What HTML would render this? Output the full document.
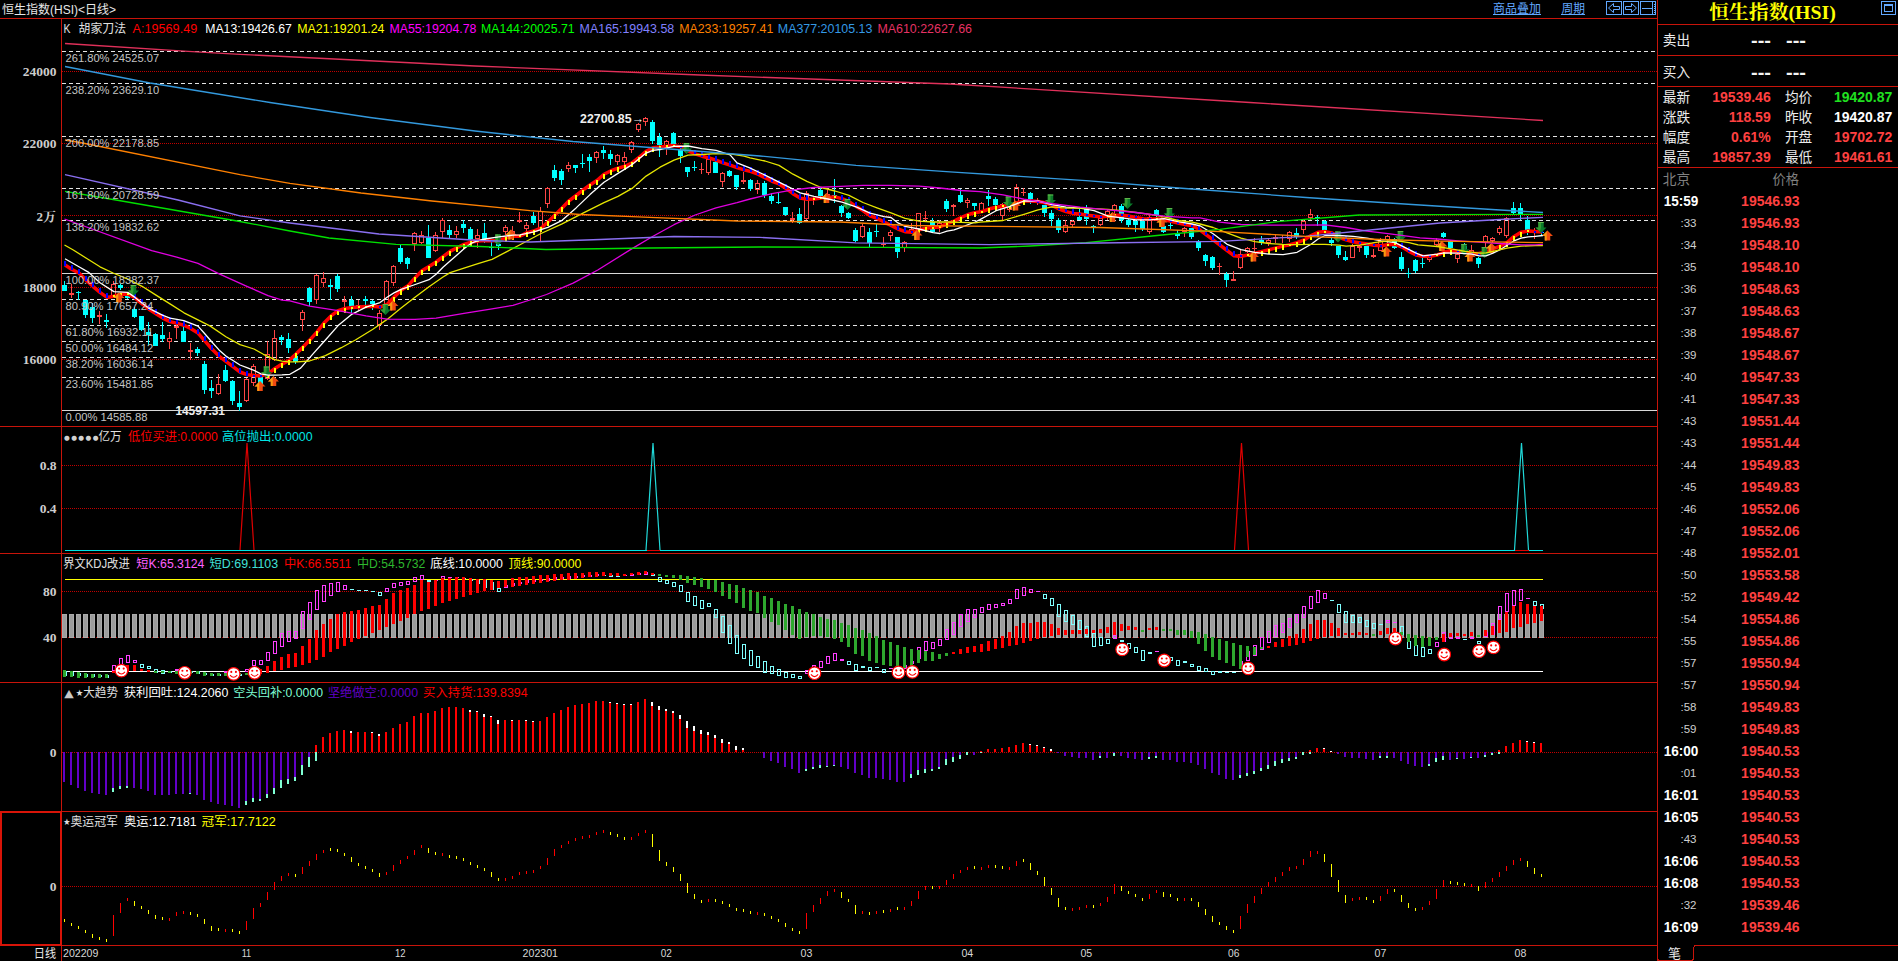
<!DOCTYPE html>
<html lang="zh-CN"><head><meta charset="utf-8"><title>恒生指数(HSI) 日线</title>
<style>html,body{margin:0;padding:0;background:#000;overflow:hidden}svg text{white-space:pre}</style></head>
<body>
<svg width="1898" height="961" viewBox="0 0 1898 961" style="display:block">
<rect x="0" y="0" width="1898" height="961" fill="#000"/>
<g shape-rendering="crispEdges">
<line x1="62" y1="71.5" x2="1657" y2="71.5" stroke="#C00000" stroke-dasharray="1 1"/>
<line x1="62" y1="143.5" x2="1657" y2="143.5" stroke="#C00000" stroke-dasharray="1 1"/>
<line x1="62" y1="215.5" x2="1657" y2="215.5" stroke="#C00000" stroke-dasharray="1 1"/>
<line x1="62" y1="287.5" x2="1657" y2="287.5" stroke="#C00000" stroke-dasharray="1 1"/>
<line x1="62" y1="359.5" x2="1657" y2="359.5" stroke="#C00000" stroke-dasharray="1 1"/>
<line x1="62" y1="51.5" x2="1657" y2="51.5" stroke="#E4E4E4" stroke-dasharray="4 3"/>
<line x1="62" y1="83.5" x2="1657" y2="83.5" stroke="#E4E4E4" stroke-dasharray="4 3"/>
<line x1="62" y1="136.5" x2="1657" y2="136.5" stroke="#E4E4E4" stroke-dasharray="4 3"/>
<line x1="62" y1="188.5" x2="1657" y2="188.5" stroke="#E4E4E4" stroke-dasharray="4 3"/>
<line x1="62" y1="220.5" x2="1657" y2="220.5" stroke="#E4E4E4" stroke-dasharray="4 3"/>
<line x1="62" y1="299.5" x2="1657" y2="299.5" stroke="#E4E4E4" stroke-dasharray="4 3"/>
<line x1="62" y1="325.5" x2="1657" y2="325.5" stroke="#E4E4E4" stroke-dasharray="4 3"/>
<line x1="62" y1="341.5" x2="1657" y2="341.5" stroke="#E4E4E4" stroke-dasharray="4 3"/>
<line x1="62" y1="357.5" x2="1657" y2="357.5" stroke="#E4E4E4" stroke-dasharray="4 3"/>
<line x1="62" y1="377.5" x2="1657" y2="377.5" stroke="#E4E4E4" stroke-dasharray="4 3"/>
<rect x="62" y="273" width="1595" height="1" fill="#D8D8D8"/>
<rect x="62" y="410" width="1595" height="1" fill="#D8D8D8"/>
<line x1="62" y1="465.5" x2="1657" y2="465.5" stroke="#C00000" stroke-dasharray="1 1"/>
<line x1="62" y1="508.5" x2="1657" y2="508.5" stroke="#C00000" stroke-dasharray="1 1"/>
<line x1="62" y1="591.5" x2="1657" y2="591.5" stroke="#C00000" stroke-dasharray="1 1"/>
<line x1="62" y1="637.5" x2="1657" y2="637.5" stroke="#C00000" stroke-dasharray="1 1"/>
<line x1="62" y1="752.5" x2="1657" y2="752.5" stroke="#C00000" stroke-dasharray="1 1"/>
<line x1="62" y1="886.5" x2="1657" y2="886.5" stroke="#C00000" stroke-dasharray="1 1"/>
</g>
<g shape-rendering="crispEdges">
<rect x="64" y="281" width="1" height="10" fill="#00FFFF"/>
<rect x="62" y="285" width="5" height="6" fill="#00FFFF"/>
<rect x="71" y="284" width="1" height="9" fill="#FF4646"/>
<rect x="71" y="295" width="1" height="3" fill="#FF4646"/>
<rect x="69.5" y="293.5" width="4" height="1" fill="none" stroke="#FF4646"/>
<rect x="78" y="291" width="1" height="9" fill="#00FFFF"/>
<rect x="76" y="292" width="5" height="1" fill="#00FFFF"/>
<rect x="85" y="300" width="1" height="18" fill="#00FFFF"/>
<rect x="83" y="300" width="5" height="15" fill="#00FFFF"/>
<rect x="92" y="303" width="1" height="20" fill="#00FFFF"/>
<rect x="90" y="307" width="5" height="11" fill="#00FFFF"/>
<rect x="99" y="311" width="1" height="4" fill="#FF4646"/>
<rect x="99" y="317" width="1" height="7" fill="#FF4646"/>
<rect x="97.5" y="315.5" width="4" height="1" fill="none" stroke="#FF4646"/>
<rect x="106" y="314" width="1" height="14" fill="#00FFFF"/>
<rect x="104" y="320" width="5" height="2" fill="#00FFFF"/>
<rect x="113" y="281" width="1" height="3" fill="#FF4646"/>
<rect x="113" y="296" width="1" height="2" fill="#FF4646"/>
<rect x="111.5" y="284.5" width="4" height="11" fill="none" stroke="#FF4646"/>
<rect x="120" y="284" width="1" height="6" fill="#00FFFF"/>
<rect x="118" y="285" width="5" height="3" fill="#00FFFF"/>
<rect x="127" y="294" width="1" height="5" fill="#00FFFF"/>
<rect x="125" y="295" width="5" height="3" fill="#00FFFF"/>
<rect x="134" y="307" width="1" height="11" fill="#00FFFF"/>
<rect x="132" y="309" width="5" height="8" fill="#00FFFF"/>
<rect x="141" y="316" width="1" height="15" fill="#00FFFF"/>
<rect x="139" y="316" width="5" height="14" fill="#00FFFF"/>
<rect x="148" y="322" width="1" height="23" fill="#00FFFF"/>
<rect x="146" y="332" width="5" height="3" fill="#00FFFF"/>
<rect x="155" y="333" width="1" height="13" fill="#00FFFF"/>
<rect x="153" y="334" width="5" height="12" fill="#00FFFF"/>
<rect x="162" y="322" width="1" height="20" fill="#00FFFF"/>
<rect x="160" y="335" width="5" height="4" fill="#00FFFF"/>
<rect x="169" y="332" width="1" height="6" fill="#FF4646"/>
<rect x="169" y="342" width="1" height="7" fill="#FF4646"/>
<rect x="167.5" y="338.5" width="4" height="3" fill="none" stroke="#FF4646"/>
<rect x="176" y="324" width="1" height="2" fill="#FF4646"/>
<rect x="176" y="328" width="1" height="11" fill="#FF4646"/>
<rect x="174.5" y="326.5" width="4" height="1" fill="none" stroke="#FF4646"/>
<rect x="183" y="326" width="1" height="16" fill="#00FFFF"/>
<rect x="181" y="331" width="5" height="11" fill="#00FFFF"/>
<rect x="190" y="343" width="1" height="7" fill="#FF4646"/>
<rect x="190" y="352" width="1" height="8" fill="#FF4646"/>
<rect x="188.5" y="350.5" width="4" height="1" fill="none" stroke="#FF4646"/>
<rect x="197" y="347" width="1" height="9" fill="#00FFFF"/>
<rect x="195" y="349" width="5" height="4" fill="#00FFFF"/>
<rect x="204" y="361" width="1" height="33" fill="#00FFFF"/>
<rect x="202" y="364" width="5" height="26" fill="#00FFFF"/>
<rect x="211" y="380" width="1" height="18" fill="#00FFFF"/>
<rect x="209" y="388" width="5" height="3" fill="#00FFFF"/>
<rect x="218" y="374" width="1" height="10" fill="#FF4646"/>
<rect x="218" y="394" width="1" height="1" fill="#FF4646"/>
<rect x="216.5" y="384.5" width="4" height="9" fill="none" stroke="#FF4646"/>
<rect x="225" y="365" width="1" height="17" fill="#00FFFF"/>
<rect x="223" y="370" width="5" height="11" fill="#00FFFF"/>
<rect x="232" y="380" width="1" height="25" fill="#00FFFF"/>
<rect x="230" y="381" width="5" height="20" fill="#00FFFF"/>
<rect x="239" y="391" width="1" height="20" fill="#00FFFF"/>
<rect x="237" y="403" width="5" height="4" fill="#00FFFF"/>
<rect x="246" y="378" width="1" height="1" fill="#FF4646"/>
<rect x="246" y="401" width="1" height="1" fill="#FF4646"/>
<rect x="244.5" y="379.5" width="4" height="21" fill="none" stroke="#FF4646"/>
<rect x="253" y="364" width="1" height="2" fill="#FF4646"/>
<rect x="253" y="383" width="1" height="3" fill="#FF4646"/>
<rect x="251.5" y="366.5" width="4" height="16" fill="none" stroke="#FF4646"/>
<rect x="260" y="375" width="1" height="9" fill="#00FFFF"/>
<rect x="258" y="376" width="5" height="8" fill="#00FFFF"/>
<rect x="267" y="341" width="1" height="13" fill="#FF4646"/>
<rect x="267" y="379" width="1" height="1" fill="#FF4646"/>
<rect x="265.5" y="354.5" width="4" height="24" fill="none" stroke="#FF4646"/>
<rect x="274" y="330" width="1" height="8" fill="#FF4646"/>
<rect x="274" y="360" width="1" height="1" fill="#FF4646"/>
<rect x="272.5" y="338.5" width="4" height="21" fill="none" stroke="#FF4646"/>
<rect x="281" y="335" width="1" height="10" fill="#00FFFF"/>
<rect x="279" y="337" width="5" height="3" fill="#00FFFF"/>
<rect x="288" y="333" width="1" height="20" fill="#00FFFF"/>
<rect x="286" y="339" width="5" height="9" fill="#00FFFF"/>
<rect x="295" y="354" width="1" height="10" fill="#00FFFF"/>
<rect x="293" y="356" width="5" height="6" fill="#00FFFF"/>
<rect x="302" y="310" width="1" height="2" fill="#FF4646"/>
<rect x="302" y="320" width="1" height="11" fill="#FF4646"/>
<rect x="300.5" y="312.5" width="4" height="7" fill="none" stroke="#FF4646"/>
<rect x="309" y="287" width="1" height="19" fill="#00FFFF"/>
<rect x="307" y="288" width="5" height="14" fill="#00FFFF"/>
<rect x="316" y="274" width="1" height="1" fill="#FF4646"/>
<rect x="316" y="300" width="1" height="4" fill="#FF4646"/>
<rect x="314.5" y="275.5" width="4" height="24" fill="none" stroke="#FF4646"/>
<rect x="323" y="272" width="1" height="6" fill="#FF4646"/>
<rect x="323" y="283" width="1" height="4" fill="#FF4646"/>
<rect x="321.5" y="278.5" width="4" height="4" fill="none" stroke="#FF4646"/>
<rect x="330" y="279" width="1" height="21" fill="#00FFFF"/>
<rect x="328" y="285" width="5" height="2" fill="#00FFFF"/>
<rect x="337" y="274" width="1" height="18" fill="#00FFFF"/>
<rect x="335" y="276" width="5" height="13" fill="#00FFFF"/>
<rect x="344" y="296" width="1" height="4" fill="#FF4646"/>
<rect x="344" y="302" width="1" height="9" fill="#FF4646"/>
<rect x="342.5" y="300.5" width="4" height="1" fill="none" stroke="#FF4646"/>
<rect x="351" y="296" width="1" height="17" fill="#00FFFF"/>
<rect x="349" y="300" width="5" height="7" fill="#00FFFF"/>
<rect x="358" y="300" width="1" height="5" fill="#FF4646"/>
<rect x="358" y="307" width="1" height="4" fill="#FF4646"/>
<rect x="356.5" y="305.5" width="4" height="1" fill="none" stroke="#FF4646"/>
<rect x="365" y="296" width="1" height="9" fill="#00FFFF"/>
<rect x="363" y="299" width="5" height="2" fill="#00FFFF"/>
<rect x="372" y="300" width="1" height="10" fill="#00FFFF"/>
<rect x="370" y="301" width="5" height="3" fill="#00FFFF"/>
<rect x="379" y="310" width="1" height="3" fill="#FF4646"/>
<rect x="379" y="325" width="1" height="5" fill="#FF4646"/>
<rect x="377.5" y="313.5" width="4" height="11" fill="none" stroke="#FF4646"/>
<rect x="386" y="280" width="1" height="1" fill="#FF4646"/>
<rect x="386" y="306" width="1" height="1" fill="#FF4646"/>
<rect x="384.5" y="281.5" width="4" height="24" fill="none" stroke="#FF4646"/>
<rect x="393" y="265" width="1" height="1" fill="#FF4646"/>
<rect x="393" y="283" width="1" height="3" fill="#FF4646"/>
<rect x="391.5" y="266.5" width="4" height="16" fill="none" stroke="#FF4646"/>
<rect x="400" y="244" width="1" height="20" fill="#00FFFF"/>
<rect x="398" y="248" width="5" height="14" fill="#00FFFF"/>
<rect x="407" y="257" width="1" height="12" fill="#00FFFF"/>
<rect x="405" y="258" width="5" height="6" fill="#00FFFF"/>
<rect x="414" y="232" width="1" height="1" fill="#FF4646"/>
<rect x="414" y="244" width="1" height="7" fill="#FF4646"/>
<rect x="412.5" y="233.5" width="4" height="10" fill="none" stroke="#FF4646"/>
<rect x="421" y="231" width="1" height="4" fill="#FF4646"/>
<rect x="421" y="243" width="1" height="1" fill="#FF4646"/>
<rect x="419.5" y="235.5" width="4" height="7" fill="none" stroke="#FF4646"/>
<rect x="428" y="225" width="1" height="33" fill="#00FFFF"/>
<rect x="426" y="238" width="5" height="20" fill="#00FFFF"/>
<rect x="435" y="232" width="1" height="3" fill="#FF4646"/>
<rect x="435" y="251" width="1" height="1" fill="#FF4646"/>
<rect x="433.5" y="235.5" width="4" height="15" fill="none" stroke="#FF4646"/>
<rect x="442" y="218" width="1" height="2" fill="#FF4646"/>
<rect x="442" y="232" width="1" height="6" fill="#FF4646"/>
<rect x="440.5" y="220.5" width="4" height="11" fill="none" stroke="#FF4646"/>
<rect x="449" y="225" width="1" height="14" fill="#00FFFF"/>
<rect x="447" y="230" width="5" height="5" fill="#00FFFF"/>
<rect x="456" y="226" width="1" height="5" fill="#FF4646"/>
<rect x="456" y="235" width="1" height="3" fill="#FF4646"/>
<rect x="454.5" y="231.5" width="4" height="3" fill="none" stroke="#FF4646"/>
<rect x="463" y="220" width="1" height="13" fill="#00FFFF"/>
<rect x="461" y="224" width="5" height="4" fill="#00FFFF"/>
<rect x="470" y="227" width="1" height="13" fill="#00FFFF"/>
<rect x="468" y="229" width="5" height="10" fill="#00FFFF"/>
<rect x="477" y="229" width="1" height="6" fill="#FF4646"/>
<rect x="477" y="239" width="1" height="9" fill="#FF4646"/>
<rect x="475.5" y="235.5" width="4" height="3" fill="none" stroke="#FF4646"/>
<rect x="484" y="223" width="1" height="20" fill="#00FFFF"/>
<rect x="482" y="233" width="5" height="6" fill="#00FFFF"/>
<rect x="491" y="242" width="1" height="14" fill="#00FFFF"/>
<rect x="489" y="247" width="5" height="1" fill="#00FFFF"/>
<rect x="498" y="241" width="1" height="9" fill="#00FFFF"/>
<rect x="496" y="244" width="5" height="2" fill="#00FFFF"/>
<rect x="505" y="225" width="1" height="2" fill="#FF4646"/>
<rect x="505" y="232" width="1" height="3" fill="#FF4646"/>
<rect x="503.5" y="227.5" width="4" height="4" fill="none" stroke="#FF4646"/>
<rect x="512" y="226" width="1" height="5" fill="#FF4646"/>
<rect x="512" y="235" width="1" height="1" fill="#FF4646"/>
<rect x="510.5" y="231.5" width="4" height="3" fill="none" stroke="#FF4646"/>
<rect x="519" y="212" width="1" height="8" fill="#FF4646"/>
<rect x="519" y="222" width="1" height="1" fill="#FF4646"/>
<rect x="517.5" y="220.5" width="4" height="1" fill="none" stroke="#FF4646"/>
<rect x="526" y="222" width="1" height="3" fill="#FF4646"/>
<rect x="526" y="229" width="1" height="4" fill="#FF4646"/>
<rect x="524.5" y="225.5" width="4" height="3" fill="none" stroke="#FF4646"/>
<rect x="533" y="212" width="1" height="13" fill="#00FFFF"/>
<rect x="531" y="216" width="5" height="7" fill="#00FFFF"/>
<rect x="540" y="207" width="1" height="4" fill="#FF4646"/>
<rect x="540" y="229" width="1" height="12" fill="#FF4646"/>
<rect x="538.5" y="211.5" width="4" height="17" fill="none" stroke="#FF4646"/>
<rect x="547" y="187" width="1" height="1" fill="#FF4646"/>
<rect x="547" y="204" width="1" height="4" fill="#FF4646"/>
<rect x="545.5" y="188.5" width="4" height="15" fill="none" stroke="#FF4646"/>
<rect x="554" y="165" width="1" height="16" fill="#00FFFF"/>
<rect x="552" y="170" width="5" height="8" fill="#00FFFF"/>
<rect x="561" y="169" width="1" height="16" fill="#00FFFF"/>
<rect x="559" y="171" width="5" height="9" fill="#00FFFF"/>
<rect x="568" y="162" width="1" height="3" fill="#FF4646"/>
<rect x="568" y="169" width="1" height="3" fill="#FF4646"/>
<rect x="566.5" y="165.5" width="4" height="3" fill="none" stroke="#FF4646"/>
<rect x="575" y="165" width="1" height="8" fill="#00FFFF"/>
<rect x="573" y="165" width="5" height="3" fill="#00FFFF"/>
<rect x="582" y="154" width="1" height="14" fill="#00FFFF"/>
<rect x="580" y="163" width="5" height="1" fill="#00FFFF"/>
<rect x="589" y="154" width="1" height="18" fill="#00FFFF"/>
<rect x="587" y="157" width="5" height="4" fill="#00FFFF"/>
<rect x="596" y="151" width="1" height="1" fill="#FF4646"/>
<rect x="596" y="158" width="1" height="5" fill="#FF4646"/>
<rect x="594.5" y="152.5" width="4" height="5" fill="none" stroke="#FF4646"/>
<rect x="603" y="146" width="1" height="13" fill="#00FFFF"/>
<rect x="601" y="150" width="5" height="3" fill="#00FFFF"/>
<rect x="610" y="150" width="1" height="15" fill="#00FFFF"/>
<rect x="608" y="154" width="5" height="5" fill="#00FFFF"/>
<rect x="617" y="154" width="1" height="1" fill="#FF4646"/>
<rect x="617" y="162" width="1" height="3" fill="#FF4646"/>
<rect x="615.5" y="155.5" width="4" height="6" fill="none" stroke="#FF4646"/>
<rect x="624" y="152" width="1" height="5" fill="#FF4646"/>
<rect x="624" y="162" width="1" height="3" fill="#FF4646"/>
<rect x="622.5" y="157.5" width="4" height="4" fill="none" stroke="#FF4646"/>
<rect x="631" y="141" width="1" height="1" fill="#FF4646"/>
<rect x="631" y="150" width="1" height="3" fill="#FF4646"/>
<rect x="629.5" y="142.5" width="4" height="7" fill="none" stroke="#FF4646"/>
<rect x="638" y="123" width="1" height="1" fill="#FF4646"/>
<rect x="638" y="130" width="1" height="2" fill="#FF4646"/>
<rect x="636.5" y="124.5" width="4" height="5" fill="none" stroke="#FF4646"/>
<rect x="645" y="117" width="1" height="1" fill="#FF4646"/>
<rect x="645" y="122" width="1" height="4" fill="#FF4646"/>
<rect x="643.5" y="118.5" width="4" height="3" fill="none" stroke="#FF4646"/>
<rect x="652" y="120" width="1" height="24" fill="#00FFFF"/>
<rect x="650" y="122" width="5" height="19" fill="#00FFFF"/>
<rect x="659" y="133" width="1" height="24" fill="#00FFFF"/>
<rect x="657" y="137" width="5" height="8" fill="#00FFFF"/>
<rect x="666" y="140" width="1" height="1" fill="#FF4646"/>
<rect x="666" y="146" width="1" height="9" fill="#FF4646"/>
<rect x="664.5" y="141.5" width="4" height="4" fill="none" stroke="#FF4646"/>
<rect x="673" y="132" width="1" height="12" fill="#00FFFF"/>
<rect x="671" y="133" width="5" height="11" fill="#00FFFF"/>
<rect x="680" y="148" width="1" height="15" fill="#00FFFF"/>
<rect x="678" y="150" width="5" height="6" fill="#00FFFF"/>
<rect x="687" y="167" width="1" height="10" fill="#00FFFF"/>
<rect x="685" y="167" width="5" height="5" fill="#00FFFF"/>
<rect x="694" y="161" width="1" height="10" fill="#00FFFF"/>
<rect x="692" y="167" width="5" height="1" fill="#00FFFF"/>
<rect x="701" y="163" width="1" height="6" fill="#FF4646"/>
<rect x="701" y="170" width="1" height="4" fill="#FF4646"/>
<rect x="699" y="169" width="5" height="1" fill="#FF4646"/>
<rect x="708" y="173" width="1" height="2" fill="#FF4646"/>
<rect x="706.5" y="159.5" width="4" height="13" fill="none" stroke="#FF4646"/>
<rect x="715" y="161" width="1" height="12" fill="#00FFFF"/>
<rect x="713" y="162" width="5" height="11" fill="#00FFFF"/>
<rect x="722" y="172" width="1" height="1" fill="#FF4646"/>
<rect x="722" y="182" width="1" height="5" fill="#FF4646"/>
<rect x="720.5" y="173.5" width="4" height="8" fill="none" stroke="#FF4646"/>
<rect x="729" y="170" width="1" height="7" fill="#00FFFF"/>
<rect x="727" y="171" width="5" height="5" fill="#00FFFF"/>
<rect x="736" y="175" width="1" height="15" fill="#00FFFF"/>
<rect x="734" y="175" width="5" height="12" fill="#00FFFF"/>
<rect x="743" y="172" width="1" height="8" fill="#FF4646"/>
<rect x="743" y="182" width="1" height="2" fill="#FF4646"/>
<rect x="741.5" y="180.5" width="4" height="1" fill="none" stroke="#FF4646"/>
<rect x="750" y="179" width="1" height="12" fill="#00FFFF"/>
<rect x="748" y="180" width="5" height="9" fill="#00FFFF"/>
<rect x="757" y="180" width="1" height="3" fill="#FF4646"/>
<rect x="757" y="190" width="1" height="4" fill="#FF4646"/>
<rect x="755.5" y="183.5" width="4" height="6" fill="none" stroke="#FF4646"/>
<rect x="764" y="181" width="1" height="17" fill="#00FFFF"/>
<rect x="762" y="183" width="5" height="12" fill="#00FFFF"/>
<rect x="771" y="193" width="1" height="11" fill="#00FFFF"/>
<rect x="769" y="196" width="5" height="5" fill="#00FFFF"/>
<rect x="778" y="193" width="1" height="11" fill="#00FFFF"/>
<rect x="776" y="202" width="5" height="1" fill="#00FFFF"/>
<rect x="785" y="207" width="1" height="9" fill="#00FFFF"/>
<rect x="783" y="207" width="5" height="8" fill="#00FFFF"/>
<rect x="792" y="212" width="1" height="6" fill="#FF4646"/>
<rect x="792" y="220" width="1" height="3" fill="#FF4646"/>
<rect x="790.5" y="218.5" width="4" height="1" fill="none" stroke="#FF4646"/>
<rect x="799" y="208" width="1" height="16" fill="#00FFFF"/>
<rect x="797" y="214" width="5" height="9" fill="#00FFFF"/>
<rect x="806" y="191" width="1" height="2" fill="#FF4646"/>
<rect x="806" y="219" width="1" height="1" fill="#FF4646"/>
<rect x="804.5" y="193.5" width="4" height="25" fill="none" stroke="#FF4646"/>
<rect x="813" y="197" width="1" height="2" fill="#FF4646"/>
<rect x="813" y="200" width="1" height="5" fill="#FF4646"/>
<rect x="811" y="199" width="5" height="1" fill="#FF4646"/>
<rect x="820" y="187" width="1" height="10" fill="#00FFFF"/>
<rect x="818" y="190" width="5" height="6" fill="#00FFFF"/>
<rect x="827" y="190" width="1" height="4" fill="#FF4646"/>
<rect x="827" y="198" width="1" height="2" fill="#FF4646"/>
<rect x="825.5" y="194.5" width="4" height="3" fill="none" stroke="#FF4646"/>
<rect x="834" y="179" width="1" height="24" fill="#00FFFF"/>
<rect x="832" y="195" width="5" height="2" fill="#00FFFF"/>
<rect x="841" y="205" width="1" height="12" fill="#00FFFF"/>
<rect x="839" y="206" width="5" height="7" fill="#00FFFF"/>
<rect x="848" y="212" width="1" height="7" fill="#00FFFF"/>
<rect x="846" y="213" width="5" height="5" fill="#00FFFF"/>
<rect x="855" y="228" width="1" height="14" fill="#00FFFF"/>
<rect x="853" y="230" width="5" height="11" fill="#00FFFF"/>
<rect x="862" y="224" width="1" height="2" fill="#FF4646"/>
<rect x="862" y="237" width="1" height="1" fill="#FF4646"/>
<rect x="860.5" y="226.5" width="4" height="10" fill="none" stroke="#FF4646"/>
<rect x="869" y="228" width="1" height="20" fill="#00FFFF"/>
<rect x="867" y="232" width="5" height="11" fill="#00FFFF"/>
<rect x="876" y="224" width="1" height="13" fill="#00FFFF"/>
<rect x="874" y="231" width="5" height="1" fill="#00FFFF"/>
<rect x="883" y="237" width="1" height="7" fill="#FF4646"/>
<rect x="883" y="245" width="1" height="3" fill="#FF4646"/>
<rect x="881" y="244" width="5" height="1" fill="#FF4646"/>
<rect x="890" y="230" width="1" height="2" fill="#FF4646"/>
<rect x="890" y="236" width="1" height="5" fill="#FF4646"/>
<rect x="888.5" y="232.5" width="4" height="3" fill="none" stroke="#FF4646"/>
<rect x="897" y="237" width="1" height="21" fill="#00FFFF"/>
<rect x="895" y="237" width="5" height="15" fill="#00FFFF"/>
<rect x="904" y="241" width="1" height="1" fill="#FF4646"/>
<rect x="904" y="248" width="1" height="4" fill="#FF4646"/>
<rect x="902.5" y="242.5" width="4" height="5" fill="none" stroke="#FF4646"/>
<rect x="911" y="223" width="1" height="6" fill="#FF4646"/>
<rect x="911" y="233" width="1" height="1" fill="#FF4646"/>
<rect x="909.5" y="229.5" width="4" height="3" fill="none" stroke="#FF4646"/>
<rect x="918" y="231" width="1" height="1" fill="#FF4646"/>
<rect x="916.5" y="213.5" width="4" height="17" fill="none" stroke="#FF4646"/>
<rect x="925" y="211" width="1" height="7" fill="#FF4646"/>
<rect x="925" y="219" width="1" height="3" fill="#FF4646"/>
<rect x="923" y="218" width="5" height="1" fill="#FF4646"/>
<rect x="932" y="218" width="1" height="15" fill="#00FFFF"/>
<rect x="930" y="222" width="5" height="10" fill="#00FFFF"/>
<rect x="939" y="220" width="1" height="3" fill="#FF4646"/>
<rect x="939" y="227" width="1" height="5" fill="#FF4646"/>
<rect x="937.5" y="223.5" width="4" height="3" fill="none" stroke="#FF4646"/>
<rect x="946" y="199" width="1" height="13" fill="#00FFFF"/>
<rect x="944" y="201" width="5" height="8" fill="#00FFFF"/>
<rect x="953" y="204" width="1" height="1" fill="#FF4646"/>
<rect x="953" y="207" width="1" height="9" fill="#FF4646"/>
<rect x="951.5" y="205.5" width="4" height="1" fill="none" stroke="#FF4646"/>
<rect x="960" y="189" width="1" height="14" fill="#00FFFF"/>
<rect x="958" y="195" width="5" height="7" fill="#00FFFF"/>
<rect x="967" y="198" width="1" height="2" fill="#FF4646"/>
<rect x="967" y="203" width="1" height="5" fill="#FF4646"/>
<rect x="965.5" y="200.5" width="4" height="2" fill="none" stroke="#FF4646"/>
<rect x="974" y="203" width="1" height="7" fill="#00FFFF"/>
<rect x="972" y="203" width="5" height="3" fill="#00FFFF"/>
<rect x="981" y="202" width="1" height="1" fill="#FF4646"/>
<rect x="981" y="211" width="1" height="2" fill="#FF4646"/>
<rect x="979.5" y="203.5" width="4" height="7" fill="none" stroke="#FF4646"/>
<rect x="988" y="190" width="1" height="16" fill="#00FFFF"/>
<rect x="986" y="196" width="5" height="3" fill="#00FFFF"/>
<rect x="995" y="197" width="1" height="9" fill="#00FFFF"/>
<rect x="993" y="199" width="5" height="6" fill="#00FFFF"/>
<rect x="1002" y="203" width="1" height="1" fill="#FF4646"/>
<rect x="1002" y="216" width="1" height="4" fill="#FF4646"/>
<rect x="1000.5" y="204.5" width="4" height="11" fill="none" stroke="#FF4646"/>
<rect x="1009" y="205" width="1" height="2" fill="#FF4646"/>
<rect x="1009" y="210" width="1" height="2" fill="#FF4646"/>
<rect x="1007.5" y="207.5" width="4" height="2" fill="none" stroke="#FF4646"/>
<rect x="1016" y="184" width="1" height="3" fill="#FF4646"/>
<rect x="1016" y="205" width="1" height="2" fill="#FF4646"/>
<rect x="1014.5" y="187.5" width="4" height="17" fill="none" stroke="#FF4646"/>
<rect x="1023" y="188" width="1" height="4" fill="#FF4646"/>
<rect x="1023" y="193" width="1" height="3" fill="#FF4646"/>
<rect x="1021" y="192" width="5" height="1" fill="#FF4646"/>
<rect x="1030" y="192" width="1" height="12" fill="#00FFFF"/>
<rect x="1028" y="193" width="5" height="6" fill="#00FFFF"/>
<rect x="1037" y="198" width="1" height="3" fill="#FF4646"/>
<rect x="1037" y="202" width="1" height="3" fill="#FF4646"/>
<rect x="1035" y="201" width="5" height="1" fill="#FF4646"/>
<rect x="1044" y="205" width="1" height="12" fill="#00FFFF"/>
<rect x="1042" y="205" width="5" height="8" fill="#00FFFF"/>
<rect x="1051" y="210" width="1" height="16" fill="#00FFFF"/>
<rect x="1049" y="213" width="5" height="6" fill="#00FFFF"/>
<rect x="1058" y="218" width="1" height="15" fill="#00FFFF"/>
<rect x="1056" y="220" width="5" height="10" fill="#00FFFF"/>
<rect x="1065" y="220" width="1" height="5" fill="#FF4646"/>
<rect x="1065" y="232" width="1" height="1" fill="#FF4646"/>
<rect x="1063.5" y="225.5" width="4" height="6" fill="none" stroke="#FF4646"/>
<rect x="1072" y="220" width="1" height="1" fill="#FF4646"/>
<rect x="1072" y="225" width="1" height="2" fill="#FF4646"/>
<rect x="1070.5" y="221.5" width="4" height="3" fill="none" stroke="#FF4646"/>
<rect x="1079" y="209" width="1" height="11" fill="#00FFFF"/>
<rect x="1077" y="217" width="5" height="3" fill="#00FFFF"/>
<rect x="1086" y="205" width="1" height="20" fill="#00FFFF"/>
<rect x="1084" y="209" width="5" height="10" fill="#00FFFF"/>
<rect x="1093" y="225" width="1" height="8" fill="#00FFFF"/>
<rect x="1091" y="226" width="5" height="1" fill="#00FFFF"/>
<rect x="1100" y="216" width="1" height="2" fill="#FF4646"/>
<rect x="1100" y="225" width="1" height="1" fill="#FF4646"/>
<rect x="1098.5" y="218.5" width="4" height="6" fill="none" stroke="#FF4646"/>
<rect x="1107" y="210" width="1" height="1" fill="#FF4646"/>
<rect x="1107" y="218" width="1" height="2" fill="#FF4646"/>
<rect x="1105.5" y="211.5" width="4" height="6" fill="none" stroke="#FF4646"/>
<rect x="1114" y="204" width="1" height="1" fill="#FF4646"/>
<rect x="1114" y="211" width="1" height="10" fill="#FF4646"/>
<rect x="1112.5" y="205.5" width="4" height="5" fill="none" stroke="#FF4646"/>
<rect x="1121" y="204" width="1" height="19" fill="#00FFFF"/>
<rect x="1119" y="206" width="5" height="14" fill="#00FFFF"/>
<rect x="1128" y="219" width="1" height="8" fill="#00FFFF"/>
<rect x="1126" y="220" width="5" height="5" fill="#00FFFF"/>
<rect x="1135" y="220" width="1" height="12" fill="#00FFFF"/>
<rect x="1133" y="221" width="5" height="4" fill="#00FFFF"/>
<rect x="1142" y="220" width="1" height="11" fill="#00FFFF"/>
<rect x="1140" y="221" width="5" height="8" fill="#00FFFF"/>
<rect x="1149" y="214" width="1" height="3" fill="#FF4646"/>
<rect x="1149" y="232" width="1" height="2" fill="#FF4646"/>
<rect x="1147.5" y="217.5" width="4" height="14" fill="none" stroke="#FF4646"/>
<rect x="1156" y="209" width="1" height="9" fill="#00FFFF"/>
<rect x="1154" y="210" width="5" height="5" fill="#00FFFF"/>
<rect x="1163" y="225" width="1" height="8" fill="#00FFFF"/>
<rect x="1161" y="226" width="5" height="6" fill="#00FFFF"/>
<rect x="1170" y="222" width="1" height="7" fill="#00FFFF"/>
<rect x="1168" y="225" width="5" height="1" fill="#00FFFF"/>
<rect x="1177" y="230" width="1" height="9" fill="#00FFFF"/>
<rect x="1175" y="233" width="5" height="3" fill="#00FFFF"/>
<rect x="1184" y="227" width="1" height="1" fill="#FF4646"/>
<rect x="1184" y="232" width="1" height="5" fill="#FF4646"/>
<rect x="1182.5" y="228.5" width="4" height="3" fill="none" stroke="#FF4646"/>
<rect x="1191" y="228" width="1" height="11" fill="#00FFFF"/>
<rect x="1189" y="228" width="5" height="9" fill="#00FFFF"/>
<rect x="1198" y="240" width="1" height="11" fill="#00FFFF"/>
<rect x="1196" y="241" width="5" height="7" fill="#00FFFF"/>
<rect x="1205" y="254" width="1" height="12" fill="#00FFFF"/>
<rect x="1203" y="255" width="5" height="6" fill="#00FFFF"/>
<rect x="1212" y="256" width="1" height="14" fill="#00FFFF"/>
<rect x="1210" y="257" width="5" height="11" fill="#00FFFF"/>
<rect x="1219" y="263" width="1" height="3" fill="#FF4646"/>
<rect x="1219" y="267" width="1" height="8" fill="#FF4646"/>
<rect x="1217" y="266" width="5" height="1" fill="#FF4646"/>
<rect x="1226" y="272" width="1" height="15" fill="#00FFFF"/>
<rect x="1224" y="274" width="5" height="6" fill="#00FFFF"/>
<rect x="1233" y="271" width="1" height="8" fill="#FF4646"/>
<rect x="1231.5" y="279.5" width="4" height="1" fill="none" stroke="#FF4646"/>
<rect x="1240" y="250" width="1" height="4" fill="#FF4646"/>
<rect x="1240" y="268" width="1" height="1" fill="#FF4646"/>
<rect x="1238.5" y="254.5" width="4" height="13" fill="none" stroke="#FF4646"/>
<rect x="1247" y="247" width="1" height="1" fill="#FF4646"/>
<rect x="1247" y="252" width="1" height="1" fill="#FF4646"/>
<rect x="1245.5" y="248.5" width="4" height="3" fill="none" stroke="#FF4646"/>
<rect x="1254" y="238" width="1" height="10" fill="#FF4646"/>
<rect x="1254" y="249" width="1" height="3" fill="#FF4646"/>
<rect x="1252" y="248" width="5" height="1" fill="#FF4646"/>
<rect x="1261" y="236" width="1" height="9" fill="#00FFFF"/>
<rect x="1259" y="240" width="5" height="3" fill="#00FFFF"/>
<rect x="1268" y="239" width="1" height="1" fill="#FF4646"/>
<rect x="1268" y="243" width="1" height="3" fill="#FF4646"/>
<rect x="1266.5" y="240.5" width="4" height="2" fill="none" stroke="#FF4646"/>
<rect x="1275" y="235" width="1" height="2" fill="#FF4646"/>
<rect x="1275" y="239" width="1" height="4" fill="#FF4646"/>
<rect x="1273.5" y="237.5" width="4" height="1" fill="none" stroke="#FF4646"/>
<rect x="1282" y="235" width="1" height="2" fill="#FF4646"/>
<rect x="1282" y="238" width="1" height="5" fill="#FF4646"/>
<rect x="1280" y="237" width="5" height="1" fill="#FF4646"/>
<rect x="1289" y="231" width="1" height="1" fill="#FF4646"/>
<rect x="1289" y="239" width="1" height="3" fill="#FF4646"/>
<rect x="1287.5" y="232.5" width="4" height="6" fill="none" stroke="#FF4646"/>
<rect x="1296" y="228" width="1" height="11" fill="#00FFFF"/>
<rect x="1294" y="233" width="5" height="4" fill="#00FFFF"/>
<rect x="1303" y="220" width="1" height="1" fill="#FF4646"/>
<rect x="1303" y="230" width="1" height="4" fill="#FF4646"/>
<rect x="1301.5" y="221.5" width="4" height="8" fill="none" stroke="#FF4646"/>
<rect x="1310" y="209" width="1" height="5" fill="#FF4646"/>
<rect x="1310" y="218" width="1" height="2" fill="#FF4646"/>
<rect x="1308.5" y="214.5" width="4" height="3" fill="none" stroke="#FF4646"/>
<rect x="1317" y="215" width="1" height="11" fill="#00FFFF"/>
<rect x="1315" y="217" width="5" height="1" fill="#00FFFF"/>
<rect x="1324" y="220" width="1" height="11" fill="#00FFFF"/>
<rect x="1322" y="221" width="5" height="9" fill="#00FFFF"/>
<rect x="1331" y="238" width="1" height="8" fill="#00FFFF"/>
<rect x="1329" y="240" width="5" height="3" fill="#00FFFF"/>
<rect x="1338" y="246" width="1" height="12" fill="#00FFFF"/>
<rect x="1336" y="246" width="5" height="9" fill="#00FFFF"/>
<rect x="1345" y="251" width="1" height="10" fill="#00FFFF"/>
<rect x="1343" y="257" width="5" height="3" fill="#00FFFF"/>
<rect x="1352" y="244" width="1" height="2" fill="#FF4646"/>
<rect x="1350.5" y="246.5" width="4" height="11" fill="none" stroke="#FF4646"/>
<rect x="1359" y="245" width="1" height="1" fill="#FF4646"/>
<rect x="1359" y="248" width="1" height="4" fill="#FF4646"/>
<rect x="1357.5" y="246.5" width="4" height="1" fill="none" stroke="#FF4646"/>
<rect x="1366" y="246" width="1" height="12" fill="#00FFFF"/>
<rect x="1364" y="246" width="5" height="9" fill="#00FFFF"/>
<rect x="1373" y="249" width="1" height="6" fill="#FF4646"/>
<rect x="1373" y="257" width="1" height="1" fill="#FF4646"/>
<rect x="1371.5" y="255.5" width="4" height="1" fill="none" stroke="#FF4646"/>
<rect x="1380" y="238" width="1" height="3" fill="#FF4646"/>
<rect x="1378.5" y="241.5" width="4" height="9" fill="none" stroke="#FF4646"/>
<rect x="1387" y="235" width="1" height="1" fill="#FF4646"/>
<rect x="1387" y="240" width="1" height="4" fill="#FF4646"/>
<rect x="1385.5" y="236.5" width="4" height="3" fill="none" stroke="#FF4646"/>
<rect x="1394" y="238" width="1" height="11" fill="#00FFFF"/>
<rect x="1392" y="239" width="5" height="9" fill="#00FFFF"/>
<rect x="1401" y="252" width="1" height="19" fill="#00FFFF"/>
<rect x="1399" y="257" width="5" height="12" fill="#00FFFF"/>
<rect x="1408" y="268" width="1" height="10" fill="#00FFFF"/>
<rect x="1406" y="273" width="5" height="1" fill="#00FFFF"/>
<rect x="1415" y="259" width="1" height="14" fill="#00FFFF"/>
<rect x="1413" y="260" width="5" height="11" fill="#00FFFF"/>
<rect x="1422" y="257" width="1" height="11" fill="#00FFFF"/>
<rect x="1420" y="263" width="5" height="1" fill="#00FFFF"/>
<rect x="1429" y="255" width="1" height="2" fill="#FF4646"/>
<rect x="1429" y="260" width="1" height="2" fill="#FF4646"/>
<rect x="1427.5" y="257.5" width="4" height="2" fill="none" stroke="#FF4646"/>
<rect x="1436" y="238" width="1" height="2" fill="#FF4646"/>
<rect x="1436" y="245" width="1" height="1" fill="#FF4646"/>
<rect x="1434.5" y="240.5" width="4" height="4" fill="none" stroke="#FF4646"/>
<rect x="1443" y="232" width="1" height="6" fill="#00FFFF"/>
<rect x="1441" y="233" width="5" height="4" fill="#00FFFF"/>
<rect x="1450" y="240" width="1" height="10" fill="#00FFFF"/>
<rect x="1448" y="241" width="5" height="7" fill="#00FFFF"/>
<rect x="1457" y="253" width="1" height="1" fill="#FF4646"/>
<rect x="1457" y="259" width="1" height="4" fill="#FF4646"/>
<rect x="1455.5" y="254.5" width="4" height="4" fill="none" stroke="#FF4646"/>
<rect x="1464" y="243" width="1" height="10" fill="#00FFFF"/>
<rect x="1462" y="246" width="5" height="3" fill="#00FFFF"/>
<rect x="1471" y="245" width="1" height="5" fill="#FF4646"/>
<rect x="1471" y="253" width="1" height="2" fill="#FF4646"/>
<rect x="1469.5" y="250.5" width="4" height="2" fill="none" stroke="#FF4646"/>
<rect x="1478" y="257" width="1" height="11" fill="#00FFFF"/>
<rect x="1476" y="258" width="5" height="6" fill="#00FFFF"/>
<rect x="1485" y="235" width="1" height="1" fill="#FF4646"/>
<rect x="1485" y="243" width="1" height="4" fill="#FF4646"/>
<rect x="1483.5" y="236.5" width="4" height="6" fill="none" stroke="#FF4646"/>
<rect x="1492" y="237" width="1" height="1" fill="#FF4646"/>
<rect x="1492" y="241" width="1" height="2" fill="#FF4646"/>
<rect x="1490.5" y="238.5" width="4" height="2" fill="none" stroke="#FF4646"/>
<rect x="1499" y="226" width="1" height="2" fill="#FF4646"/>
<rect x="1499" y="233" width="1" height="2" fill="#FF4646"/>
<rect x="1497.5" y="228.5" width="4" height="4" fill="none" stroke="#FF4646"/>
<rect x="1506" y="217" width="1" height="1" fill="#FF4646"/>
<rect x="1506" y="236" width="1" height="2" fill="#FF4646"/>
<rect x="1504.5" y="218.5" width="4" height="17" fill="none" stroke="#FF4646"/>
<rect x="1513" y="202" width="1" height="12" fill="#00FFFF"/>
<rect x="1511" y="208" width="5" height="5" fill="#00FFFF"/>
<rect x="1520" y="203" width="1" height="17" fill="#00FFFF"/>
<rect x="1518" y="208" width="5" height="7" fill="#00FFFF"/>
<rect x="1527" y="216" width="1" height="19" fill="#00FFFF"/>
<rect x="1525" y="220" width="5" height="13" fill="#00FFFF"/>
<rect x="1534" y="228" width="1" height="4" fill="#FF4646"/>
<rect x="1534" y="233" width="1" height="6" fill="#FF4646"/>
<rect x="1532" y="232" width="5" height="1" fill="#FF4646"/>
<rect x="1541" y="231" width="1" height="5" fill="#00FFFF"/>
<rect x="1539" y="232" width="5" height="1" fill="#00FFFF"/>
</g>
<polyline points="65.0,265.0 72.0,269.5 78.9,273.0 86.0,280.1 92.9,286.3 100.0,292.4 107.0,297.4 113.9,296.3 121.0,294.2 127.9,294.2 135.0,297.8 142.1,303.9 149.0,309.2 156.0,313.7 162.9,318.1 170.0,321.6 177.1,323.4 184.0,325.2 191.1,328.7 198.0,333.1 205.0,341.1 211.9,349.0 219.0,356.1 225.9,361.4 233.0,366.7 240.0,372.0 246.9,374.7 254.0,375.6 260.9,375.9 268.0,373.8 274.9,368.5 282.0,364.1 289.0,360.5 296.0,353.9 303.1,346.9 310.0,339.8 317.1,331.8 324.0,323.0 331.0,315.9 338.1,310.6 345.0,308.5 352.1,307.6 359.0,307.1 366.1,306.5 372.9,306.2 380.0,307.1 387.1,304.4 394.0,297.3 401.1,290.3 408.0,285.8 415.0,277.9 421.9,270.8 429.0,266.4 436.1,262.0 443.0,256.7 450.1,251.4 457.0,247.8 464.0,244.3 470.9,242.2 478.0,241.1 484.9,240.4 492.0,240.7 498.9,240.4 505.9,238.1 513.0,236.3 520.0,236.2 527.1,232.6 534.0,230.9 541.0,228.2 547.9,222.0 555.0,215.0 562.1,207.9 569.0,200.8 576.1,195.5 583.0,190.2 590.0,184.9 596.9,180.5 604.0,174.3 611.1,170.7 618.0,168.1 625.1,166.3 632.1,162.8 639.0,157.5 646.1,151.3 653.0,147.8 660.1,146.9 667.0,146.3 674.0,145.6 681.1,146.9 688.0,150.9 695.1,153.9 702.0,156.2 709.1,158.0 716.0,160.1 723.0,162.8 730.1,165.1 737.0,167.6 744.1,169.9 751.1,171.6 758.0,174.2 765.0,177.8 772.1,181.3 779.0,183.9 786.1,188.4 793.0,193.7 800.1,198.1 806.9,199.3 814.0,199.0 821.1,198.1 828.0,197.2 835.1,196.9 842.0,198.6 849.0,201.6 856.1,206.4 863.0,210.5 870.1,215.8 877.0,218.4 884.1,222.0 891.0,225.5 898.0,229.0 905.1,231.7 912.0,232.2 919.1,229.9 926.0,228.2 933.1,227.6 939.9,226.9 947.0,223.7 954.1,221.1 961.0,217.5 968.1,214.5 975.0,212.8 982.1,211.6 989.0,209.0 996.1,207.2 1003.0,206.3 1010.1,204.6 1017.0,202.8 1024.0,201.0 1031.1,201.0 1038.0,201.5 1045.1,202.8 1052.0,205.4 1059.1,209.0 1066.1,211.6 1073.0,213.4 1080.1,213.9 1087.0,215.2 1094.1,216.1 1101.0,216.9 1108.0,216.1 1115.1,215.2 1122.0,215.2 1129.1,216.1 1136.0,217.5 1143.1,218.7 1150.1,219.2 1157.0,218.7 1164.1,219.6 1171.0,221.4 1178.1,223.1 1185.0,224.5 1192.1,225.8 1199.1,229.3 1206.0,234.6 1213.1,239.9 1220.0,245.2 1227.1,250.5 1234.1,255.8 1241.0,256.4 1248.1,255.0 1255.0,253.2 1262.1,251.4 1269.0,249.7 1276.1,247.9 1283.1,246.1 1290.0,244.7 1297.1,242.6 1304.0,239.9 1311.1,235.5 1318.1,232.3 1325.0,231.6 1332.1,232.9 1339.0,237.3 1346.1,239.9 1353.0,241.7 1360.1,242.9 1367.1,244.0 1374.0,245.2 1381.1,245.8 1388.0,244.7 1395.1,244.3 1402.2,247.0 1409.0,251.4 1416.1,255.0 1423.0,256.2 1430.1,256.4 1437.2,255.0 1444.1,252.3 1451.1,250.5 1458.0,251.4 1465.1,252.3 1472.0,253.2 1479.1,253.5 1486.0,251.8 1493.0,248.8 1500.1,246.1 1507.0,242.6 1514.1,236.4 1521.0,232.3 1528.1,231.1 1535.1,231.6 1542.0,232.0" fill="none" stroke="#FF0000" stroke-width="3.5" stroke-linejoin="round"/>
<g shape-rendering="crispEdges">
<rect x="64" y="261" width="2" height="5" fill="#0000FF"/>
<rect x="71" y="265" width="2" height="5" fill="#0000FF"/>
<rect x="78" y="269" width="2" height="5" fill="#0000FF"/>
<rect x="85" y="276" width="2" height="5" fill="#0000FF"/>
<rect x="92" y="282" width="2" height="5" fill="#0000FF"/>
<rect x="99" y="288" width="2" height="5" fill="#0000FF"/>
<rect x="106" y="293" width="2" height="5" fill="#0000FF"/>
<rect x="113" y="295" width="2" height="2" fill="#FFFF00"/>
<rect x="120" y="293" width="2" height="5" fill="#FFFF00"/>
<rect x="127" y="293" width="2" height="2" fill="#FFFF00"/>
<rect x="134" y="294" width="2" height="5" fill="#0000FF"/>
<rect x="141" y="299" width="2" height="5" fill="#0000FF"/>
<rect x="148" y="305" width="2" height="5" fill="#0000FF"/>
<rect x="155" y="309" width="2" height="5" fill="#0000FF"/>
<rect x="162" y="314" width="2" height="5" fill="#0000FF"/>
<rect x="169" y="317" width="2" height="5" fill="#0000FF"/>
<rect x="176" y="319" width="2" height="5" fill="#0000FF"/>
<rect x="183" y="321" width="2" height="5" fill="#0000FF"/>
<rect x="190" y="324" width="2" height="5" fill="#0000FF"/>
<rect x="197" y="329" width="2" height="5" fill="#0000FF"/>
<rect x="204" y="336" width="2" height="5" fill="#0000FF"/>
<rect x="211" y="345" width="2" height="5" fill="#0000FF"/>
<rect x="218" y="352" width="2" height="5" fill="#0000FF"/>
<rect x="225" y="357" width="2" height="5" fill="#0000FF"/>
<rect x="232" y="362" width="2" height="5" fill="#0000FF"/>
<rect x="239" y="368" width="2" height="5" fill="#0000FF"/>
<rect x="246" y="371" width="2" height="5" fill="#0000FF"/>
<rect x="253" y="375" width="2" height="2" fill="#0000FF"/>
<rect x="260" y="375" width="2" height="2" fill="#0000FF"/>
<rect x="267" y="373" width="2" height="5" fill="#FFFF00"/>
<rect x="274" y="368" width="2" height="5" fill="#FFFF00"/>
<rect x="281" y="363" width="2" height="5" fill="#FFFF00"/>
<rect x="288" y="360" width="2" height="5" fill="#FFFF00"/>
<rect x="295" y="353" width="2" height="5" fill="#FFFF00"/>
<rect x="302" y="346" width="2" height="5" fill="#FFFF00"/>
<rect x="309" y="339" width="2" height="5" fill="#FFFF00"/>
<rect x="316" y="331" width="2" height="5" fill="#FFFF00"/>
<rect x="323" y="323" width="2" height="5" fill="#FFFF00"/>
<rect x="330" y="315" width="2" height="5" fill="#FFFF00"/>
<rect x="337" y="310" width="2" height="5" fill="#FFFF00"/>
<rect x="344" y="308" width="2" height="5" fill="#FFFF00"/>
<rect x="351" y="307" width="2" height="2" fill="#FFFF00"/>
<rect x="358" y="306" width="2" height="2" fill="#FFFF00"/>
<rect x="365" y="306" width="2" height="2" fill="#FFFF00"/>
<rect x="372" y="305" width="2" height="2" fill="#FFFF00"/>
<rect x="379" y="306" width="2" height="2" fill="#0000FF"/>
<rect x="386" y="304" width="2" height="5" fill="#FFFF00"/>
<rect x="393" y="297" width="2" height="5" fill="#FFFF00"/>
<rect x="400" y="290" width="2" height="5" fill="#FFFF00"/>
<rect x="407" y="285" width="2" height="5" fill="#FFFF00"/>
<rect x="414" y="277" width="2" height="5" fill="#FFFF00"/>
<rect x="421" y="270" width="2" height="5" fill="#FFFF00"/>
<rect x="428" y="266" width="2" height="5" fill="#FFFF00"/>
<rect x="435" y="261" width="2" height="5" fill="#FFFF00"/>
<rect x="442" y="256" width="2" height="5" fill="#FFFF00"/>
<rect x="449" y="251" width="2" height="5" fill="#FFFF00"/>
<rect x="456" y="247" width="2" height="5" fill="#FFFF00"/>
<rect x="463" y="244" width="2" height="5" fill="#FFFF00"/>
<rect x="470" y="241" width="2" height="5" fill="#FFFF00"/>
<rect x="477" y="240" width="2" height="2" fill="#FFFF00"/>
<rect x="484" y="239" width="2" height="2" fill="#FFFF00"/>
<rect x="491" y="240" width="2" height="2" fill="#0000FF"/>
<rect x="498" y="239" width="2" height="2" fill="#FFFF00"/>
<rect x="505" y="237" width="2" height="5" fill="#FFFF00"/>
<rect x="512" y="235" width="2" height="5" fill="#FFFF00"/>
<rect x="519" y="235" width="2" height="2" fill="#FFFF00"/>
<rect x="526" y="232" width="2" height="5" fill="#FFFF00"/>
<rect x="533" y="230" width="2" height="5" fill="#FFFF00"/>
<rect x="540" y="227" width="2" height="5" fill="#FFFF00"/>
<rect x="547" y="221" width="2" height="5" fill="#FFFF00"/>
<rect x="554" y="214" width="2" height="5" fill="#FFFF00"/>
<rect x="561" y="207" width="2" height="5" fill="#FFFF00"/>
<rect x="568" y="200" width="2" height="5" fill="#FFFF00"/>
<rect x="575" y="195" width="2" height="5" fill="#FFFF00"/>
<rect x="582" y="190" width="2" height="5" fill="#FFFF00"/>
<rect x="589" y="184" width="2" height="5" fill="#FFFF00"/>
<rect x="596" y="180" width="2" height="5" fill="#FFFF00"/>
<rect x="603" y="174" width="2" height="5" fill="#FFFF00"/>
<rect x="610" y="170" width="2" height="5" fill="#FFFF00"/>
<rect x="617" y="167" width="2" height="5" fill="#FFFF00"/>
<rect x="624" y="165" width="2" height="5" fill="#FFFF00"/>
<rect x="631" y="162" width="2" height="5" fill="#FFFF00"/>
<rect x="638" y="157" width="2" height="5" fill="#FFFF00"/>
<rect x="645" y="151" width="2" height="5" fill="#FFFF00"/>
<rect x="652" y="147" width="2" height="5" fill="#FFFF00"/>
<rect x="659" y="146" width="2" height="2" fill="#FFFF00"/>
<rect x="666" y="145" width="2" height="2" fill="#FFFF00"/>
<rect x="673" y="145" width="2" height="2" fill="#FFFF00"/>
<rect x="680" y="146" width="2" height="2" fill="#0000FF"/>
<rect x="687" y="147" width="2" height="5" fill="#0000FF"/>
<rect x="694" y="150" width="2" height="5" fill="#0000FF"/>
<rect x="701" y="152" width="2" height="5" fill="#0000FF"/>
<rect x="708" y="154" width="2" height="5" fill="#0000FF"/>
<rect x="715" y="156" width="2" height="5" fill="#0000FF"/>
<rect x="722" y="159" width="2" height="5" fill="#0000FF"/>
<rect x="729" y="161" width="2" height="5" fill="#0000FF"/>
<rect x="736" y="163" width="2" height="5" fill="#0000FF"/>
<rect x="743" y="166" width="2" height="5" fill="#0000FF"/>
<rect x="750" y="167" width="2" height="5" fill="#0000FF"/>
<rect x="757" y="170" width="2" height="5" fill="#0000FF"/>
<rect x="764" y="173" width="2" height="5" fill="#0000FF"/>
<rect x="771" y="177" width="2" height="5" fill="#0000FF"/>
<rect x="778" y="180" width="2" height="5" fill="#0000FF"/>
<rect x="785" y="184" width="2" height="5" fill="#0000FF"/>
<rect x="792" y="189" width="2" height="5" fill="#0000FF"/>
<rect x="799" y="194" width="2" height="5" fill="#0000FF"/>
<rect x="806" y="195" width="2" height="5" fill="#0000FF"/>
<rect x="813" y="198" width="2" height="2" fill="#FFFF00"/>
<rect x="820" y="197" width="2" height="2" fill="#FFFF00"/>
<rect x="827" y="196" width="2" height="2" fill="#FFFF00"/>
<rect x="834" y="196" width="2" height="2" fill="#FFFF00"/>
<rect x="841" y="195" width="2" height="5" fill="#0000FF"/>
<rect x="848" y="197" width="2" height="5" fill="#0000FF"/>
<rect x="855" y="202" width="2" height="5" fill="#0000FF"/>
<rect x="862" y="206" width="2" height="5" fill="#0000FF"/>
<rect x="869" y="211" width="2" height="5" fill="#0000FF"/>
<rect x="876" y="214" width="2" height="5" fill="#0000FF"/>
<rect x="883" y="218" width="2" height="5" fill="#0000FF"/>
<rect x="890" y="221" width="2" height="5" fill="#0000FF"/>
<rect x="897" y="225" width="2" height="5" fill="#0000FF"/>
<rect x="904" y="227" width="2" height="5" fill="#0000FF"/>
<rect x="911" y="231" width="2" height="2" fill="#0000FF"/>
<rect x="918" y="229" width="2" height="5" fill="#FFFF00"/>
<rect x="925" y="227" width="2" height="5" fill="#FFFF00"/>
<rect x="932" y="227" width="2" height="2" fill="#FFFF00"/>
<rect x="939" y="226" width="2" height="2" fill="#FFFF00"/>
<rect x="946" y="223" width="2" height="5" fill="#FFFF00"/>
<rect x="953" y="220" width="2" height="5" fill="#FFFF00"/>
<rect x="960" y="217" width="2" height="5" fill="#FFFF00"/>
<rect x="967" y="214" width="2" height="5" fill="#FFFF00"/>
<rect x="974" y="212" width="2" height="5" fill="#FFFF00"/>
<rect x="981" y="211" width="2" height="2" fill="#FFFF00"/>
<rect x="988" y="208" width="2" height="5" fill="#FFFF00"/>
<rect x="995" y="206" width="2" height="5" fill="#FFFF00"/>
<rect x="1002" y="205" width="2" height="2" fill="#FFFF00"/>
<rect x="1009" y="204" width="2" height="5" fill="#FFFF00"/>
<rect x="1016" y="202" width="2" height="5" fill="#FFFF00"/>
<rect x="1023" y="200" width="2" height="5" fill="#FFFF00"/>
<rect x="1030" y="200" width="2" height="2" fill="#0000FF"/>
<rect x="1037" y="201" width="2" height="2" fill="#0000FF"/>
<rect x="1044" y="202" width="2" height="2" fill="#0000FF"/>
<rect x="1051" y="201" width="2" height="5" fill="#0000FF"/>
<rect x="1058" y="205" width="2" height="5" fill="#0000FF"/>
<rect x="1065" y="207" width="2" height="5" fill="#0000FF"/>
<rect x="1072" y="209" width="2" height="5" fill="#0000FF"/>
<rect x="1079" y="213" width="2" height="2" fill="#0000FF"/>
<rect x="1086" y="214" width="2" height="2" fill="#0000FF"/>
<rect x="1093" y="215" width="2" height="2" fill="#0000FF"/>
<rect x="1100" y="216" width="2" height="2" fill="#0000FF"/>
<rect x="1107" y="215" width="2" height="2" fill="#FFFF00"/>
<rect x="1114" y="214" width="2" height="2" fill="#FFFF00"/>
<rect x="1121" y="214" width="2" height="2" fill="#0000FF"/>
<rect x="1128" y="215" width="2" height="2" fill="#0000FF"/>
<rect x="1135" y="216" width="2" height="2" fill="#0000FF"/>
<rect x="1142" y="218" width="2" height="2" fill="#0000FF"/>
<rect x="1149" y="218" width="2" height="2" fill="#0000FF"/>
<rect x="1156" y="218" width="2" height="2" fill="#FFFF00"/>
<rect x="1163" y="219" width="2" height="2" fill="#0000FF"/>
<rect x="1170" y="217" width="2" height="5" fill="#0000FF"/>
<rect x="1177" y="219" width="2" height="5" fill="#0000FF"/>
<rect x="1184" y="223" width="2" height="2" fill="#0000FF"/>
<rect x="1191" y="225" width="2" height="2" fill="#0000FF"/>
<rect x="1198" y="225" width="2" height="5" fill="#0000FF"/>
<rect x="1205" y="230" width="2" height="5" fill="#0000FF"/>
<rect x="1212" y="235" width="2" height="5" fill="#0000FF"/>
<rect x="1219" y="241" width="2" height="5" fill="#0000FF"/>
<rect x="1226" y="246" width="2" height="5" fill="#0000FF"/>
<rect x="1233" y="251" width="2" height="5" fill="#0000FF"/>
<rect x="1240" y="255" width="2" height="2" fill="#0000FF"/>
<rect x="1247" y="254" width="2" height="2" fill="#FFFF00"/>
<rect x="1254" y="252" width="2" height="5" fill="#FFFF00"/>
<rect x="1261" y="251" width="2" height="5" fill="#FFFF00"/>
<rect x="1268" y="249" width="2" height="5" fill="#FFFF00"/>
<rect x="1275" y="247" width="2" height="5" fill="#FFFF00"/>
<rect x="1282" y="245" width="2" height="5" fill="#FFFF00"/>
<rect x="1289" y="244" width="2" height="2" fill="#FFFF00"/>
<rect x="1296" y="242" width="2" height="5" fill="#FFFF00"/>
<rect x="1303" y="239" width="2" height="5" fill="#FFFF00"/>
<rect x="1310" y="235" width="2" height="5" fill="#FFFF00"/>
<rect x="1317" y="232" width="2" height="5" fill="#FFFF00"/>
<rect x="1324" y="231" width="2" height="2" fill="#FFFF00"/>
<rect x="1331" y="232" width="2" height="2" fill="#0000FF"/>
<rect x="1338" y="233" width="2" height="5" fill="#0000FF"/>
<rect x="1345" y="236" width="2" height="5" fill="#0000FF"/>
<rect x="1352" y="238" width="2" height="5" fill="#0000FF"/>
<rect x="1359" y="242" width="2" height="2" fill="#0000FF"/>
<rect x="1366" y="243" width="2" height="2" fill="#0000FF"/>
<rect x="1373" y="244" width="2" height="2" fill="#0000FF"/>
<rect x="1380" y="245" width="2" height="2" fill="#0000FF"/>
<rect x="1387" y="244" width="2" height="2" fill="#FFFF00"/>
<rect x="1394" y="243" width="2" height="2" fill="#FFFF00"/>
<rect x="1401" y="243" width="2" height="5" fill="#0000FF"/>
<rect x="1408" y="247" width="2" height="5" fill="#0000FF"/>
<rect x="1415" y="251" width="2" height="5" fill="#0000FF"/>
<rect x="1422" y="255" width="2" height="2" fill="#0000FF"/>
<rect x="1429" y="255" width="2" height="2" fill="#0000FF"/>
<rect x="1436" y="254" width="2" height="2" fill="#FFFF00"/>
<rect x="1443" y="252" width="2" height="5" fill="#FFFF00"/>
<rect x="1450" y="250" width="2" height="5" fill="#FFFF00"/>
<rect x="1457" y="250" width="2" height="2" fill="#0000FF"/>
<rect x="1464" y="251" width="2" height="2" fill="#0000FF"/>
<rect x="1471" y="252" width="2" height="2" fill="#0000FF"/>
<rect x="1478" y="253" width="2" height="2" fill="#0000FF"/>
<rect x="1485" y="251" width="2" height="5" fill="#FFFF00"/>
<rect x="1492" y="248" width="2" height="5" fill="#FFFF00"/>
<rect x="1499" y="245" width="2" height="5" fill="#FFFF00"/>
<rect x="1506" y="242" width="2" height="5" fill="#FFFF00"/>
<rect x="1513" y="236" width="2" height="5" fill="#FFFF00"/>
<rect x="1520" y="232" width="2" height="5" fill="#FFFF00"/>
<rect x="1527" y="230" width="2" height="2" fill="#FFFF00"/>
<rect x="1534" y="231" width="2" height="2" fill="#0000FF"/>
<rect x="1541" y="231" width="2" height="2" fill="#0000FF"/>
</g>
<path d="M133.5 296.0L139.0 290.5H136.25V285.0H130.75V290.5H128.0Z" fill="#0A7A2A"/>
<path d="M130.75 285.0H133.5V290.5L132.5 294.5L128.0 290.5H130.75Z" fill="#3FA535" opacity="0.8"/>
<rect x="130.75" y="285.0" width="5.5" height="1" fill="#5FB54A"/>
<path d="M266.5 377.5L272.0 372.0H269.25V366.5H263.75V372.0H261.0Z" fill="#0A7A2A"/>
<path d="M263.75 366.5H266.5V372.0L265.5 376.0L261.0 372.0H263.75Z" fill="#3FA535" opacity="0.8"/>
<rect x="263.75" y="366.5" width="5.5" height="1" fill="#5FB54A"/>
<path d="M385.5 315.0L391.0 309.5H388.25V304.0H382.75V309.5H380.0Z" fill="#0A7A2A"/>
<path d="M382.75 304.0H385.5V309.5L384.5 313.5L380.0 309.5H382.75Z" fill="#3FA535" opacity="0.8"/>
<rect x="382.75" y="304.0" width="5.5" height="1" fill="#5FB54A"/>
<path d="M498.0 245.5L503.5 240.0H500.75V234.5H495.25V240.0H492.5Z" fill="#0A7A2A"/>
<path d="M495.25 234.5H498.0V240.0L497.0 244.0L492.5 240.0H495.25Z" fill="#3FA535" opacity="0.8"/>
<rect x="495.25" y="234.5" width="5.5" height="1" fill="#5FB54A"/>
<path d="M686.5 154.0L692.0 148.5H689.25V143.0H683.75V148.5H681.0Z" fill="#0A7A2A"/>
<path d="M683.75 143.0H686.5V148.5L685.5 152.5L681.0 148.5H683.75Z" fill="#3FA535" opacity="0.8"/>
<rect x="683.75" y="143.0" width="5.5" height="1" fill="#5FB54A"/>
<path d="M847.5 210.0L853.0 204.5H850.25V199.0H844.75V204.5H842.0Z" fill="#0A7A2A"/>
<path d="M844.75 199.0H847.5V204.5L846.5 208.5L842.0 204.5H844.75Z" fill="#3FA535" opacity="0.8"/>
<rect x="844.75" y="199.0" width="5.5" height="1" fill="#5FB54A"/>
<path d="M1008.5 207.5L1014.0 202.0H1011.25V196.5H1005.75V202.0H1003.0Z" fill="#0A7A2A"/>
<path d="M1005.75 196.5H1008.5V202.0L1007.5 206.0L1003.0 202.0H1005.75Z" fill="#3FA535" opacity="0.8"/>
<rect x="1005.75" y="196.5" width="5.5" height="1" fill="#5FB54A"/>
<path d="M1050.5 205.5L1056.0 200.0H1053.25V194.5H1047.75V200.0H1045.0Z" fill="#0A7A2A"/>
<path d="M1047.75 194.5H1050.5V200.0L1049.5 204.0L1045.0 200.0H1047.75Z" fill="#3FA535" opacity="0.8"/>
<rect x="1047.75" y="194.5" width="5.5" height="1" fill="#5FB54A"/>
<path d="M1127.5 209.0L1133.0 203.5H1130.25V198.0H1124.75V203.5H1122.0Z" fill="#0A7A2A"/>
<path d="M1124.75 198.0H1127.5V203.5L1126.5 207.5L1122.0 203.5H1124.75Z" fill="#3FA535" opacity="0.8"/>
<rect x="1124.75" y="198.0" width="5.5" height="1" fill="#5FB54A"/>
<path d="M1169.5 219.0L1175.0 213.5H1172.25V208.0H1166.75V213.5H1164.0Z" fill="#0A7A2A"/>
<path d="M1166.75 208.0H1169.5V213.5L1168.5 217.5L1164.0 213.5H1166.75Z" fill="#3FA535" opacity="0.8"/>
<rect x="1166.75" y="208.0" width="5.5" height="1" fill="#5FB54A"/>
<path d="M1338.0 242.5L1343.5 237.0H1340.75V231.5H1335.25V237.0H1332.5Z" fill="#0A7A2A"/>
<path d="M1335.25 231.5H1338.0V237.0L1337.0 241.0L1332.5 237.0H1335.25Z" fill="#3FA535" opacity="0.8"/>
<rect x="1335.25" y="231.5" width="5.5" height="1" fill="#5FB54A"/>
<path d="M1400.5 242.0L1406.0 236.5H1403.25V231.0H1397.75V236.5H1395.0Z" fill="#0A7A2A"/>
<path d="M1397.75 231.0H1400.5V236.5L1399.5 240.5L1395.0 236.5H1397.75Z" fill="#3FA535" opacity="0.8"/>
<rect x="1397.75" y="231.0" width="5.5" height="1" fill="#5FB54A"/>
<path d="M1464.0 255.0L1469.5 249.5H1466.75V244.0H1461.25V249.5H1458.5Z" fill="#0A7A2A"/>
<path d="M1461.25 244.0H1464.0V249.5L1463.0 253.5L1458.5 249.5H1461.25Z" fill="#3FA535" opacity="0.8"/>
<rect x="1461.25" y="244.0" width="5.5" height="1" fill="#5FB54A"/>
<path d="M1484.5 258.0L1490.0 252.5H1487.25V247.0H1481.75V252.5H1479.0Z" fill="#0A7A2A"/>
<path d="M1481.75 247.0H1484.5V252.5L1483.5 256.5L1479.0 252.5H1481.75Z" fill="#3FA535" opacity="0.8"/>
<rect x="1481.75" y="247.0" width="5.5" height="1" fill="#5FB54A"/>
<path d="M1541.0 233.0L1546.5 227.5H1543.75V222.0H1538.25V227.5H1535.5Z" fill="#0A7A2A"/>
<path d="M1538.25 222.0H1541.0V227.5L1540.0 231.5L1535.5 227.5H1538.25Z" fill="#3FA535" opacity="0.8"/>
<rect x="1538.25" y="222.0" width="5.5" height="1" fill="#5FB54A"/>
<path d="M119.0 292.5L124.5 298.0H121.75V302.5H116.25V298.0H113.5Z" fill="#F04A10"/>
<path d="M119.0 292.5L113.5 298.0H116.25V302.5H118.25V294.5Z" fill="#F79A10"/>
<path d="M260.0 381.0L265.5 386.5H262.75V391.0H257.25V386.5H254.5Z" fill="#F04A10"/>
<path d="M260.0 381.0L254.5 386.5H257.25V391.0H259.25V383.0Z" fill="#F79A10"/>
<path d="M273.5 376.0L279.0 381.5H276.25V386.0H270.75V381.5H268.0Z" fill="#F04A10"/>
<path d="M273.5 376.0L268.0 381.5H270.75V386.0H272.75V378.0Z" fill="#F79A10"/>
<path d="M393.0 300.5L398.5 306.0H395.75V310.5H390.25V306.0H387.5Z" fill="#F04A10"/>
<path d="M393.0 300.5L387.5 306.0H390.25V310.5H392.25V302.5Z" fill="#F79A10"/>
<path d="M511.0 229.5L516.5 235.0H513.75V239.5H508.25V235.0H505.5Z" fill="#F04A10"/>
<path d="M511.0 229.5L505.5 235.0H508.25V239.5H510.25V231.5Z" fill="#F79A10"/>
<path d="M826.5 193.0L832.0 198.5H829.25V203.0H823.75V198.5H821.0Z" fill="#F04A10"/>
<path d="M826.5 193.0L821.0 198.5H823.75V203.0H825.75V195.0Z" fill="#F79A10"/>
<path d="M917.0 230.0L922.5 235.5H919.75V240.0H914.25V235.5H911.5Z" fill="#F04A10"/>
<path d="M917.0 230.0L911.5 235.5H914.25V240.0H916.25V232.0Z" fill="#F79A10"/>
<path d="M1015.5 200.5L1021.0 206.0H1018.25V210.5H1012.75V206.0H1010.0Z" fill="#F04A10"/>
<path d="M1015.5 200.5L1010.0 206.0H1012.75V210.5H1014.75V202.5Z" fill="#F79A10"/>
<path d="M1112.5 212.0L1118.0 217.5H1115.25V222.0H1109.75V217.5H1107.0Z" fill="#F04A10"/>
<path d="M1112.5 212.0L1107.0 217.5H1109.75V222.0H1111.75V214.0Z" fill="#F79A10"/>
<path d="M1162.0 217.0L1167.5 222.5H1164.75V227.0H1159.25V222.5H1156.5Z" fill="#F04A10"/>
<path d="M1162.0 217.0L1156.5 222.5H1159.25V227.0H1161.25V219.0Z" fill="#F79A10"/>
<path d="M1253.5 251.5L1259.0 257.0H1256.25V261.5H1250.75V257.0H1248.0Z" fill="#F04A10"/>
<path d="M1253.5 251.5L1248.0 257.0H1250.75V261.5H1252.75V253.5Z" fill="#F79A10"/>
<path d="M1386.5 246.5L1392.0 252.0H1389.25V256.5H1383.75V252.0H1381.0Z" fill="#F04A10"/>
<path d="M1386.5 246.5L1381.0 252.0H1383.75V256.5H1385.75V248.5Z" fill="#F79A10"/>
<path d="M1442.0 241.0L1447.5 246.5H1444.75V251.0H1439.25V246.5H1436.5Z" fill="#F04A10"/>
<path d="M1442.0 241.0L1436.5 246.5H1439.25V251.0H1441.25V243.0Z" fill="#F79A10"/>
<path d="M1470.0 251.5L1475.5 257.0H1472.75V261.5H1467.25V257.0H1464.5Z" fill="#F04A10"/>
<path d="M1470.0 251.5L1464.5 257.0H1467.25V261.5H1469.25V253.5Z" fill="#F79A10"/>
<path d="M1491.5 243.0L1497.0 248.5H1494.25V253.0H1488.75V248.5H1486.0Z" fill="#F04A10"/>
<path d="M1491.5 243.0L1486.0 248.5H1488.75V253.0H1490.75V245.0Z" fill="#F79A10"/>
<path d="M1547.5 230.5L1553.0 236.0H1550.25V240.5H1544.75V236.0H1542.0Z" fill="#F04A10"/>
<path d="M1547.5 230.5L1542.0 236.0H1544.75V240.5H1546.75V232.5Z" fill="#F79A10"/>
<polyline points="65.0,258.8 78.9,266.8 88.3,272.1 100.0,282.7 113.9,291.6 127.9,292.4 135.0,297.4 149.0,308.4 162.9,315.4 170.0,318.1 183.8,320.7 198.0,326.1 205.0,334.0 211.9,342.0 219.0,349.9 225.9,356.1 233.0,360.5 240.0,365.0 246.9,367.6 254.0,370.3 260.9,373.8 268.0,375.2 274.9,375.2 282.0,374.9 289.9,374.3 300.6,368.1 313.0,353.9 325.4,340.0 338.1,325.6 352.1,314.1 366.1,307.1 380.0,302.6 387.1,297.3 394.0,292.9 401.1,289.4 413.8,285.0 429.0,279.7 436.1,274.3 443.0,267.3 450.1,261.1 457.0,254.9 464.0,248.7 470.9,243.4 478.0,240.7 484.9,239.0 498.9,236.9 513.0,235.1 520.0,234.8 534.0,231.8 547.9,227.3 562.1,220.3 576.1,207.9 590.0,194.6 604.0,182.2 618.0,173.4 632.1,164.6 646.1,153.1 653.0,150.4 660.1,149.5 674.0,146.3 688.0,146.0 702.0,148.6 716.0,150.4 730.1,154.8 737.0,162.8 749.1,167.6 765.0,175.1 779.0,182.2 793.0,189.2 800.1,192.8 814.0,196.3 828.0,199.0 842.0,202.2 856.1,206.9 870.1,213.1 884.1,216.7 891.0,217.5 898.0,222.9 905.1,226.4 919.1,229.0 933.1,232.6 939.9,233.5 947.0,231.2 954.1,229.9 961.0,227.3 975.0,222.0 980.0,219.6 996.1,210.7 1010.1,206.3 1024.0,201.0 1038.0,201.0 1052.0,204.6 1066.1,207.2 1080.1,208.1 1094.1,210.7 1108.0,216.1 1122.0,217.8 1136.0,219.9 1150.1,219.9 1164.1,218.7 1178.1,221.7 1192.1,224.0 1200.0,225.8 1213.1,233.7 1227.1,244.3 1241.0,249.7 1255.0,252.3 1269.0,254.1 1283.1,254.6 1297.1,252.3 1311.1,244.3 1318.1,239.0 1325.0,235.5 1339.0,235.5 1353.0,236.4 1367.1,238.2 1381.1,240.8 1395.1,242.6 1402.2,246.1 1416.1,253.2 1423.0,255.8 1437.2,254.1 1444.1,252.8 1458.0,253.2 1472.0,254.1 1479.1,255.8 1486.0,255.8 1493.0,253.2 1500.1,249.7 1507.0,245.2 1514.1,240.8 1521.0,238.2 1528.1,236.9 1535.1,236.4 1542.9,235.5" fill="none" stroke="#FFFFFF" stroke-width="1.3" stroke-linejoin="round"/>
<polyline points="64.5,245.0 73.3,250.0 86.0,258.0 100.0,266.8 113.1,273.0 127.9,279.2 142.1,286.3 156.0,295.1 170.0,303.9 184.0,312.8 198.0,319.9 210.3,326.1 225.9,336.7 240.0,344.6 254.0,349.0 263.4,354.3 274.9,359.7 282.0,361.1 289.0,361.8 297.1,361.9 309.5,361.0 325.4,355.7 341.3,347.7 355.4,340.0 372.9,329.2 387.1,319.4 401.1,308.0 415.0,297.3 429.0,286.7 443.0,277.0 450.1,272.6 464.0,268.2 478.0,263.7 492.0,259.3 505.9,252.2 520.0,244.7 541.0,233.5 562.1,223.8 583.0,213.2 604.0,202.6 618.0,196.4 632.1,188.4 646.1,176.1 660.1,167.2 674.0,160.1 688.0,155.2 702.0,154.5 716.0,153.6 730.1,153.9 744.1,156.2 750.0,157.9 765.0,161.0 779.0,165.4 793.0,174.2 806.9,181.3 821.1,187.5 835.1,191.0 849.0,195.4 863.0,202.5 877.0,207.8 891.0,212.8 905.1,218.4 919.1,221.1 933.1,222.0 947.0,222.0 961.0,222.3 975.0,222.9 980.0,222.2 1003.0,220.5 1024.0,214.3 1038.0,209.9 1052.0,206.9 1066.1,208.1 1080.1,208.1 1094.1,208.6 1108.0,209.3 1122.0,210.7 1136.0,212.5 1150.1,214.3 1164.1,216.9 1178.1,220.5 1192.1,222.2 1200.0,224.0 1213.1,227.5 1227.1,232.9 1241.0,238.2 1255.0,241.7 1269.0,243.5 1283.1,244.3 1297.1,244.7 1311.1,244.3 1325.0,244.3 1339.0,245.2 1346.1,246.1 1360.1,245.2 1374.0,242.6 1388.0,240.8 1395.1,240.5 1409.0,242.6 1418.1,244.8 1437.2,246.5 1451.1,248.8 1465.1,251.4 1479.1,253.2 1486.0,252.8 1493.0,251.4 1507.0,248.2 1521.0,246.1 1535.1,245.6 1542.9,245.6" fill="none" stroke="#E6E600" stroke-width="1.3" stroke-linejoin="round"/>
<polyline points="64.5,219.0 151.7,250.6 176.7,257.1 198.0,263.3 219.2,273.9 246.9,286.3 268.0,295.6 282.0,300.1 290.0,300.9 309.5,306.2 338.1,310.6 366.1,315.9 387.1,319.1 415.0,319.4 436.1,318.2 464.0,313.3 492.0,308.8 513.0,305.3 530.0,300.0 546.5,294.5 573.1,283.1 597.8,270.0 632.1,248.6 653.0,236.2 674.0,224.7 695.1,215.0 716.0,207.9 737.0,202.6 750.0,199.0 772.1,193.7 793.0,189.8 814.0,187.5 835.1,186.6 863.0,185.4 891.0,185.4 919.1,186.2 939.9,188.0 961.0,190.5 980.0,191.6 1003.0,194.8 1024.0,199.2 1052.0,203.7 1080.1,207.2 1108.0,209.9 1136.0,212.5 1164.1,216.1 1192.1,217.8 1200.0,217.8 1220.0,222.2 1241.0,224.5 1269.0,225.2 1297.1,225.2 1325.0,224.9 1346.1,227.5 1367.1,231.1 1388.0,233.7 1409.0,236.4 1420.0,237.8 1437.2,239.0 1458.0,240.8 1479.1,242.2 1500.1,243.5 1521.0,244.9 1535.1,244.9 1542.9,244.3" fill="none" stroke="#E000E0" stroke-width="1.3" stroke-linejoin="round"/>
<polyline points="65.0,191.3 116.0,200.0 240.0,221.5 290.0,231.0 329.0,238.0 396.0,244.3 480.0,246.5 546.0,249.5 650.0,248.0 760.0,247.0 880.0,247.3 980.0,248.0 1030.0,246.0 1086.0,242.6 1157.0,235.5 1220.0,229.3 1280.0,221.4 1359.0,215.0 1440.0,214.6 1543.0,214.3" fill="none" stroke="#00E000" stroke-width="1.3" stroke-linejoin="round"/>
<polyline points="65.0,174.6 178.0,200.0 240.0,215.8 290.0,223.0 379.0,234.0 480.0,240.5 530.0,242.0 600.0,239.5 674.0,236.5 760.0,237.4 856.0,242.8 990.0,244.6 1100.0,243.0 1220.0,241.3 1306.0,236.4 1380.0,229.0 1440.0,223.0 1500.0,219.5 1543.0,217.3" fill="none" stroke="#8A6FF0" stroke-width="1.3" stroke-linejoin="round"/>
<polyline points="65.0,140.0 80.0,142.5 240.0,174.6 290.0,183.3 361.0,193.0 432.0,201.0 530.0,210.7 580.0,214.5 632.0,216.7 737.0,221.0 840.0,222.0 909.0,225.5 990.0,226.4 1100.0,227.5 1220.0,231.6 1306.0,236.4 1380.0,239.5 1440.0,241.2 1543.0,242.6" fill="none" stroke="#FF8000" stroke-width="1.3" stroke-linejoin="round"/>
<polyline points="65.0,66.5 150.0,83.0 270.0,102.5 370.0,117.5 475.0,131.0 573.0,141.5 650.0,147.5 760.0,156.0 856.0,165.3 950.0,171.8 1086.0,180.7 1185.0,188.5 1306.0,197.5 1412.0,204.5 1500.0,210.0 1543.0,212.5" fill="none" stroke="#3399DD" stroke-width="1.3" stroke-linejoin="round"/>
<polyline points="65.0,43.5 188.0,51.4 240.0,54.3 475.0,66.0 700.0,75.0 950.0,84.0 1250.0,102.5 1543.0,120.5" fill="none" stroke="#E0305A" stroke-width="1.3" stroke-linejoin="round"/>
<g shape-rendering="crispEdges">
<rect x="65" y="550" width="1478" height="1" fill="#00E5E5"/>
</g>
<polyline points="240,550 247,443 254,550" fill="none" stroke="#E00000" stroke-width="1.2"/>
<polyline points="646,550 653,443 660,550" fill="none" stroke="#20D8D8" stroke-width="1.2"/>
<polyline points="1234.5,550 1241.5,443 1248.5,550" fill="none" stroke="#E00000" stroke-width="1.2"/>
<polyline points="1514.5,550 1521.5,443 1528.5,550" fill="none" stroke="#20D8D8" stroke-width="1.2"/>
<rect x="1515" y="550" width="14" height="1" fill="#E00000"/>
<rect x="647" y="550" width="13" height="1" fill="#E00000"/>
<g shape-rendering="crispEdges">
<rect x="62" y="614" width="5" height="24" fill="#9C9C9C"/>
<rect x="62.5" y="614.5" width="4" height="23" fill="none" stroke="#B4B4B4" stroke-width="1" opacity="0.6"/>
<rect x="69" y="614" width="5" height="24" fill="#9C9C9C"/>
<rect x="69.5" y="614.5" width="4" height="23" fill="none" stroke="#B4B4B4" stroke-width="1" opacity="0.6"/>
<rect x="76" y="614" width="5" height="24" fill="#9C9C9C"/>
<rect x="76.5" y="614.5" width="4" height="23" fill="none" stroke="#B4B4B4" stroke-width="1" opacity="0.6"/>
<rect x="83" y="614" width="5" height="24" fill="#9C9C9C"/>
<rect x="83.5" y="614.5" width="4" height="23" fill="none" stroke="#B4B4B4" stroke-width="1" opacity="0.6"/>
<rect x="90" y="614" width="5" height="24" fill="#9C9C9C"/>
<rect x="90.5" y="614.5" width="4" height="23" fill="none" stroke="#B4B4B4" stroke-width="1" opacity="0.6"/>
<rect x="97" y="614" width="5" height="24" fill="#9C9C9C"/>
<rect x="97.5" y="614.5" width="4" height="23" fill="none" stroke="#B4B4B4" stroke-width="1" opacity="0.6"/>
<rect x="104" y="614" width="5" height="24" fill="#9C9C9C"/>
<rect x="104.5" y="614.5" width="4" height="23" fill="none" stroke="#B4B4B4" stroke-width="1" opacity="0.6"/>
<rect x="111" y="614" width="5" height="24" fill="#9C9C9C"/>
<rect x="111.5" y="614.5" width="4" height="23" fill="none" stroke="#B4B4B4" stroke-width="1" opacity="0.6"/>
<rect x="118" y="614" width="5" height="24" fill="#9C9C9C"/>
<rect x="118.5" y="614.5" width="4" height="23" fill="none" stroke="#B4B4B4" stroke-width="1" opacity="0.6"/>
<rect x="125" y="614" width="5" height="24" fill="#9C9C9C"/>
<rect x="125.5" y="614.5" width="4" height="23" fill="none" stroke="#B4B4B4" stroke-width="1" opacity="0.6"/>
<rect x="132" y="614" width="5" height="24" fill="#9C9C9C"/>
<rect x="132.5" y="614.5" width="4" height="23" fill="none" stroke="#B4B4B4" stroke-width="1" opacity="0.6"/>
<rect x="139" y="614" width="5" height="24" fill="#9C9C9C"/>
<rect x="139.5" y="614.5" width="4" height="23" fill="none" stroke="#B4B4B4" stroke-width="1" opacity="0.6"/>
<rect x="146" y="614" width="5" height="24" fill="#9C9C9C"/>
<rect x="146.5" y="614.5" width="4" height="23" fill="none" stroke="#B4B4B4" stroke-width="1" opacity="0.6"/>
<rect x="153" y="614" width="5" height="24" fill="#9C9C9C"/>
<rect x="153.5" y="614.5" width="4" height="23" fill="none" stroke="#B4B4B4" stroke-width="1" opacity="0.6"/>
<rect x="160" y="614" width="5" height="24" fill="#9C9C9C"/>
<rect x="160.5" y="614.5" width="4" height="23" fill="none" stroke="#B4B4B4" stroke-width="1" opacity="0.6"/>
<rect x="167" y="614" width="5" height="24" fill="#9C9C9C"/>
<rect x="167.5" y="614.5" width="4" height="23" fill="none" stroke="#B4B4B4" stroke-width="1" opacity="0.6"/>
<rect x="174" y="614" width="5" height="24" fill="#9C9C9C"/>
<rect x="174.5" y="614.5" width="4" height="23" fill="none" stroke="#B4B4B4" stroke-width="1" opacity="0.6"/>
<rect x="181" y="614" width="5" height="24" fill="#9C9C9C"/>
<rect x="181.5" y="614.5" width="4" height="23" fill="none" stroke="#B4B4B4" stroke-width="1" opacity="0.6"/>
<rect x="188" y="614" width="5" height="24" fill="#9C9C9C"/>
<rect x="188.5" y="614.5" width="4" height="23" fill="none" stroke="#B4B4B4" stroke-width="1" opacity="0.6"/>
<rect x="195" y="614" width="5" height="24" fill="#9C9C9C"/>
<rect x="195.5" y="614.5" width="4" height="23" fill="none" stroke="#B4B4B4" stroke-width="1" opacity="0.6"/>
<rect x="202" y="614" width="5" height="24" fill="#9C9C9C"/>
<rect x="202.5" y="614.5" width="4" height="23" fill="none" stroke="#B4B4B4" stroke-width="1" opacity="0.6"/>
<rect x="209" y="614" width="5" height="24" fill="#9C9C9C"/>
<rect x="209.5" y="614.5" width="4" height="23" fill="none" stroke="#B4B4B4" stroke-width="1" opacity="0.6"/>
<rect x="216" y="614" width="5" height="24" fill="#9C9C9C"/>
<rect x="216.5" y="614.5" width="4" height="23" fill="none" stroke="#B4B4B4" stroke-width="1" opacity="0.6"/>
<rect x="223" y="614" width="5" height="24" fill="#9C9C9C"/>
<rect x="223.5" y="614.5" width="4" height="23" fill="none" stroke="#B4B4B4" stroke-width="1" opacity="0.6"/>
<rect x="230" y="614" width="5" height="24" fill="#9C9C9C"/>
<rect x="230.5" y="614.5" width="4" height="23" fill="none" stroke="#B4B4B4" stroke-width="1" opacity="0.6"/>
<rect x="237" y="614" width="5" height="24" fill="#9C9C9C"/>
<rect x="237.5" y="614.5" width="4" height="23" fill="none" stroke="#B4B4B4" stroke-width="1" opacity="0.6"/>
<rect x="244" y="614" width="5" height="24" fill="#9C9C9C"/>
<rect x="244.5" y="614.5" width="4" height="23" fill="none" stroke="#B4B4B4" stroke-width="1" opacity="0.6"/>
<rect x="251" y="614" width="5" height="24" fill="#9C9C9C"/>
<rect x="251.5" y="614.5" width="4" height="23" fill="none" stroke="#B4B4B4" stroke-width="1" opacity="0.6"/>
<rect x="258" y="614" width="5" height="24" fill="#9C9C9C"/>
<rect x="258.5" y="614.5" width="4" height="23" fill="none" stroke="#B4B4B4" stroke-width="1" opacity="0.6"/>
<rect x="265" y="614" width="5" height="24" fill="#9C9C9C"/>
<rect x="265.5" y="614.5" width="4" height="23" fill="none" stroke="#B4B4B4" stroke-width="1" opacity="0.6"/>
<rect x="272" y="614" width="5" height="24" fill="#9C9C9C"/>
<rect x="272.5" y="614.5" width="4" height="23" fill="none" stroke="#B4B4B4" stroke-width="1" opacity="0.6"/>
<rect x="279" y="614" width="5" height="24" fill="#9C9C9C"/>
<rect x="279.5" y="614.5" width="4" height="23" fill="none" stroke="#B4B4B4" stroke-width="1" opacity="0.6"/>
<rect x="286" y="614" width="5" height="24" fill="#9C9C9C"/>
<rect x="286.5" y="614.5" width="4" height="23" fill="none" stroke="#B4B4B4" stroke-width="1" opacity="0.6"/>
<rect x="293" y="614" width="5" height="24" fill="#9C9C9C"/>
<rect x="293.5" y="614.5" width="4" height="23" fill="none" stroke="#B4B4B4" stroke-width="1" opacity="0.6"/>
<rect x="300" y="614" width="5" height="24" fill="#9C9C9C"/>
<rect x="300.5" y="614.5" width="4" height="23" fill="none" stroke="#B4B4B4" stroke-width="1" opacity="0.6"/>
<rect x="307" y="614" width="5" height="24" fill="#9C9C9C"/>
<rect x="307.5" y="614.5" width="4" height="23" fill="none" stroke="#B4B4B4" stroke-width="1" opacity="0.6"/>
<rect x="314" y="614" width="5" height="24" fill="#9C9C9C"/>
<rect x="314.5" y="614.5" width="4" height="23" fill="none" stroke="#B4B4B4" stroke-width="1" opacity="0.6"/>
<rect x="321" y="614" width="5" height="24" fill="#9C9C9C"/>
<rect x="321.5" y="614.5" width="4" height="23" fill="none" stroke="#B4B4B4" stroke-width="1" opacity="0.6"/>
<rect x="328" y="614" width="5" height="24" fill="#9C9C9C"/>
<rect x="328.5" y="614.5" width="4" height="23" fill="none" stroke="#B4B4B4" stroke-width="1" opacity="0.6"/>
<rect x="335" y="614" width="5" height="24" fill="#9C9C9C"/>
<rect x="335.5" y="614.5" width="4" height="23" fill="none" stroke="#B4B4B4" stroke-width="1" opacity="0.6"/>
<rect x="342" y="614" width="5" height="24" fill="#9C9C9C"/>
<rect x="342.5" y="614.5" width="4" height="23" fill="none" stroke="#B4B4B4" stroke-width="1" opacity="0.6"/>
<rect x="349" y="614" width="5" height="24" fill="#9C9C9C"/>
<rect x="349.5" y="614.5" width="4" height="23" fill="none" stroke="#B4B4B4" stroke-width="1" opacity="0.6"/>
<rect x="356" y="614" width="5" height="24" fill="#9C9C9C"/>
<rect x="356.5" y="614.5" width="4" height="23" fill="none" stroke="#B4B4B4" stroke-width="1" opacity="0.6"/>
<rect x="363" y="614" width="5" height="24" fill="#9C9C9C"/>
<rect x="363.5" y="614.5" width="4" height="23" fill="none" stroke="#B4B4B4" stroke-width="1" opacity="0.6"/>
<rect x="370" y="614" width="5" height="24" fill="#9C9C9C"/>
<rect x="370.5" y="614.5" width="4" height="23" fill="none" stroke="#B4B4B4" stroke-width="1" opacity="0.6"/>
<rect x="377" y="614" width="5" height="24" fill="#9C9C9C"/>
<rect x="377.5" y="614.5" width="4" height="23" fill="none" stroke="#B4B4B4" stroke-width="1" opacity="0.6"/>
<rect x="384" y="614" width="5" height="24" fill="#9C9C9C"/>
<rect x="384.5" y="614.5" width="4" height="23" fill="none" stroke="#B4B4B4" stroke-width="1" opacity="0.6"/>
<rect x="391" y="614" width="5" height="24" fill="#9C9C9C"/>
<rect x="391.5" y="614.5" width="4" height="23" fill="none" stroke="#B4B4B4" stroke-width="1" opacity="0.6"/>
<rect x="398" y="614" width="5" height="24" fill="#9C9C9C"/>
<rect x="398.5" y="614.5" width="4" height="23" fill="none" stroke="#B4B4B4" stroke-width="1" opacity="0.6"/>
<rect x="405" y="614" width="5" height="24" fill="#9C9C9C"/>
<rect x="405.5" y="614.5" width="4" height="23" fill="none" stroke="#B4B4B4" stroke-width="1" opacity="0.6"/>
<rect x="412" y="614" width="5" height="24" fill="#9C9C9C"/>
<rect x="412.5" y="614.5" width="4" height="23" fill="none" stroke="#B4B4B4" stroke-width="1" opacity="0.6"/>
<rect x="419" y="614" width="5" height="24" fill="#9C9C9C"/>
<rect x="419.5" y="614.5" width="4" height="23" fill="none" stroke="#B4B4B4" stroke-width="1" opacity="0.6"/>
<rect x="426" y="614" width="5" height="24" fill="#9C9C9C"/>
<rect x="426.5" y="614.5" width="4" height="23" fill="none" stroke="#B4B4B4" stroke-width="1" opacity="0.6"/>
<rect x="433" y="614" width="5" height="24" fill="#9C9C9C"/>
<rect x="433.5" y="614.5" width="4" height="23" fill="none" stroke="#B4B4B4" stroke-width="1" opacity="0.6"/>
<rect x="440" y="614" width="5" height="24" fill="#9C9C9C"/>
<rect x="440.5" y="614.5" width="4" height="23" fill="none" stroke="#B4B4B4" stroke-width="1" opacity="0.6"/>
<rect x="447" y="614" width="5" height="24" fill="#9C9C9C"/>
<rect x="447.5" y="614.5" width="4" height="23" fill="none" stroke="#B4B4B4" stroke-width="1" opacity="0.6"/>
<rect x="454" y="614" width="5" height="24" fill="#9C9C9C"/>
<rect x="454.5" y="614.5" width="4" height="23" fill="none" stroke="#B4B4B4" stroke-width="1" opacity="0.6"/>
<rect x="461" y="614" width="5" height="24" fill="#9C9C9C"/>
<rect x="461.5" y="614.5" width="4" height="23" fill="none" stroke="#B4B4B4" stroke-width="1" opacity="0.6"/>
<rect x="468" y="614" width="5" height="24" fill="#9C9C9C"/>
<rect x="468.5" y="614.5" width="4" height="23" fill="none" stroke="#B4B4B4" stroke-width="1" opacity="0.6"/>
<rect x="475" y="614" width="5" height="24" fill="#9C9C9C"/>
<rect x="475.5" y="614.5" width="4" height="23" fill="none" stroke="#B4B4B4" stroke-width="1" opacity="0.6"/>
<rect x="482" y="614" width="5" height="24" fill="#9C9C9C"/>
<rect x="482.5" y="614.5" width="4" height="23" fill="none" stroke="#B4B4B4" stroke-width="1" opacity="0.6"/>
<rect x="489" y="614" width="5" height="24" fill="#9C9C9C"/>
<rect x="489.5" y="614.5" width="4" height="23" fill="none" stroke="#B4B4B4" stroke-width="1" opacity="0.6"/>
<rect x="496" y="614" width="5" height="24" fill="#9C9C9C"/>
<rect x="496.5" y="614.5" width="4" height="23" fill="none" stroke="#B4B4B4" stroke-width="1" opacity="0.6"/>
<rect x="503" y="614" width="5" height="24" fill="#9C9C9C"/>
<rect x="503.5" y="614.5" width="4" height="23" fill="none" stroke="#B4B4B4" stroke-width="1" opacity="0.6"/>
<rect x="510" y="614" width="5" height="24" fill="#9C9C9C"/>
<rect x="510.5" y="614.5" width="4" height="23" fill="none" stroke="#B4B4B4" stroke-width="1" opacity="0.6"/>
<rect x="517" y="614" width="5" height="24" fill="#9C9C9C"/>
<rect x="517.5" y="614.5" width="4" height="23" fill="none" stroke="#B4B4B4" stroke-width="1" opacity="0.6"/>
<rect x="524" y="614" width="5" height="24" fill="#9C9C9C"/>
<rect x="524.5" y="614.5" width="4" height="23" fill="none" stroke="#B4B4B4" stroke-width="1" opacity="0.6"/>
<rect x="531" y="614" width="5" height="24" fill="#9C9C9C"/>
<rect x="531.5" y="614.5" width="4" height="23" fill="none" stroke="#B4B4B4" stroke-width="1" opacity="0.6"/>
<rect x="538" y="614" width="5" height="24" fill="#9C9C9C"/>
<rect x="538.5" y="614.5" width="4" height="23" fill="none" stroke="#B4B4B4" stroke-width="1" opacity="0.6"/>
<rect x="545" y="614" width="5" height="24" fill="#9C9C9C"/>
<rect x="545.5" y="614.5" width="4" height="23" fill="none" stroke="#B4B4B4" stroke-width="1" opacity="0.6"/>
<rect x="552" y="614" width="5" height="24" fill="#9C9C9C"/>
<rect x="552.5" y="614.5" width="4" height="23" fill="none" stroke="#B4B4B4" stroke-width="1" opacity="0.6"/>
<rect x="559" y="614" width="5" height="24" fill="#9C9C9C"/>
<rect x="559.5" y="614.5" width="4" height="23" fill="none" stroke="#B4B4B4" stroke-width="1" opacity="0.6"/>
<rect x="566" y="614" width="5" height="24" fill="#9C9C9C"/>
<rect x="566.5" y="614.5" width="4" height="23" fill="none" stroke="#B4B4B4" stroke-width="1" opacity="0.6"/>
<rect x="573" y="614" width="5" height="24" fill="#9C9C9C"/>
<rect x="573.5" y="614.5" width="4" height="23" fill="none" stroke="#B4B4B4" stroke-width="1" opacity="0.6"/>
<rect x="580" y="614" width="5" height="24" fill="#9C9C9C"/>
<rect x="580.5" y="614.5" width="4" height="23" fill="none" stroke="#B4B4B4" stroke-width="1" opacity="0.6"/>
<rect x="587" y="614" width="5" height="24" fill="#9C9C9C"/>
<rect x="587.5" y="614.5" width="4" height="23" fill="none" stroke="#B4B4B4" stroke-width="1" opacity="0.6"/>
<rect x="594" y="614" width="5" height="24" fill="#9C9C9C"/>
<rect x="594.5" y="614.5" width="4" height="23" fill="none" stroke="#B4B4B4" stroke-width="1" opacity="0.6"/>
<rect x="601" y="614" width="5" height="24" fill="#9C9C9C"/>
<rect x="601.5" y="614.5" width="4" height="23" fill="none" stroke="#B4B4B4" stroke-width="1" opacity="0.6"/>
<rect x="608" y="614" width="5" height="24" fill="#9C9C9C"/>
<rect x="608.5" y="614.5" width="4" height="23" fill="none" stroke="#B4B4B4" stroke-width="1" opacity="0.6"/>
<rect x="615" y="614" width="5" height="24" fill="#9C9C9C"/>
<rect x="615.5" y="614.5" width="4" height="23" fill="none" stroke="#B4B4B4" stroke-width="1" opacity="0.6"/>
<rect x="622" y="614" width="5" height="24" fill="#9C9C9C"/>
<rect x="622.5" y="614.5" width="4" height="23" fill="none" stroke="#B4B4B4" stroke-width="1" opacity="0.6"/>
<rect x="629" y="614" width="5" height="24" fill="#9C9C9C"/>
<rect x="629.5" y="614.5" width="4" height="23" fill="none" stroke="#B4B4B4" stroke-width="1" opacity="0.6"/>
<rect x="636" y="614" width="5" height="24" fill="#9C9C9C"/>
<rect x="636.5" y="614.5" width="4" height="23" fill="none" stroke="#B4B4B4" stroke-width="1" opacity="0.6"/>
<rect x="643" y="614" width="5" height="24" fill="#9C9C9C"/>
<rect x="643.5" y="614.5" width="4" height="23" fill="none" stroke="#B4B4B4" stroke-width="1" opacity="0.6"/>
<rect x="650" y="614" width="5" height="24" fill="#9C9C9C"/>
<rect x="650.5" y="614.5" width="4" height="23" fill="none" stroke="#B4B4B4" stroke-width="1" opacity="0.6"/>
<rect x="657" y="614" width="5" height="24" fill="#9C9C9C"/>
<rect x="657.5" y="614.5" width="4" height="23" fill="none" stroke="#B4B4B4" stroke-width="1" opacity="0.6"/>
<rect x="664" y="614" width="5" height="24" fill="#9C9C9C"/>
<rect x="664.5" y="614.5" width="4" height="23" fill="none" stroke="#B4B4B4" stroke-width="1" opacity="0.6"/>
<rect x="671" y="614" width="5" height="24" fill="#9C9C9C"/>
<rect x="671.5" y="614.5" width="4" height="23" fill="none" stroke="#B4B4B4" stroke-width="1" opacity="0.6"/>
<rect x="678" y="614" width="5" height="24" fill="#9C9C9C"/>
<rect x="678.5" y="614.5" width="4" height="23" fill="none" stroke="#B4B4B4" stroke-width="1" opacity="0.6"/>
<rect x="685" y="614" width="5" height="24" fill="#9C9C9C"/>
<rect x="685.5" y="614.5" width="4" height="23" fill="none" stroke="#B4B4B4" stroke-width="1" opacity="0.6"/>
<rect x="692" y="614" width="5" height="24" fill="#9C9C9C"/>
<rect x="692.5" y="614.5" width="4" height="23" fill="none" stroke="#B4B4B4" stroke-width="1" opacity="0.6"/>
<rect x="699" y="614" width="5" height="24" fill="#9C9C9C"/>
<rect x="699.5" y="614.5" width="4" height="23" fill="none" stroke="#B4B4B4" stroke-width="1" opacity="0.6"/>
<rect x="706" y="614" width="5" height="24" fill="#9C9C9C"/>
<rect x="706.5" y="614.5" width="4" height="23" fill="none" stroke="#B4B4B4" stroke-width="1" opacity="0.6"/>
<rect x="713" y="614" width="5" height="24" fill="#9C9C9C"/>
<rect x="713.5" y="614.5" width="4" height="23" fill="none" stroke="#B4B4B4" stroke-width="1" opacity="0.6"/>
<rect x="720" y="614" width="5" height="24" fill="#9C9C9C"/>
<rect x="720.5" y="614.5" width="4" height="23" fill="none" stroke="#B4B4B4" stroke-width="1" opacity="0.6"/>
<rect x="727" y="614" width="5" height="24" fill="#9C9C9C"/>
<rect x="727.5" y="614.5" width="4" height="23" fill="none" stroke="#B4B4B4" stroke-width="1" opacity="0.6"/>
<rect x="734" y="614" width="5" height="24" fill="#9C9C9C"/>
<rect x="734.5" y="614.5" width="4" height="23" fill="none" stroke="#B4B4B4" stroke-width="1" opacity="0.6"/>
<rect x="741" y="614" width="5" height="24" fill="#9C9C9C"/>
<rect x="741.5" y="614.5" width="4" height="23" fill="none" stroke="#B4B4B4" stroke-width="1" opacity="0.6"/>
<rect x="748" y="614" width="5" height="24" fill="#9C9C9C"/>
<rect x="748.5" y="614.5" width="4" height="23" fill="none" stroke="#B4B4B4" stroke-width="1" opacity="0.6"/>
<rect x="755" y="614" width="5" height="24" fill="#9C9C9C"/>
<rect x="755.5" y="614.5" width="4" height="23" fill="none" stroke="#B4B4B4" stroke-width="1" opacity="0.6"/>
<rect x="762" y="614" width="5" height="24" fill="#9C9C9C"/>
<rect x="762.5" y="614.5" width="4" height="23" fill="none" stroke="#B4B4B4" stroke-width="1" opacity="0.6"/>
<rect x="769" y="614" width="5" height="24" fill="#9C9C9C"/>
<rect x="769.5" y="614.5" width="4" height="23" fill="none" stroke="#B4B4B4" stroke-width="1" opacity="0.6"/>
<rect x="776" y="614" width="5" height="24" fill="#9C9C9C"/>
<rect x="776.5" y="614.5" width="4" height="23" fill="none" stroke="#B4B4B4" stroke-width="1" opacity="0.6"/>
<rect x="783" y="614" width="5" height="24" fill="#9C9C9C"/>
<rect x="783.5" y="614.5" width="4" height="23" fill="none" stroke="#B4B4B4" stroke-width="1" opacity="0.6"/>
<rect x="790" y="614" width="5" height="24" fill="#9C9C9C"/>
<rect x="790.5" y="614.5" width="4" height="23" fill="none" stroke="#B4B4B4" stroke-width="1" opacity="0.6"/>
<rect x="797" y="614" width="5" height="24" fill="#9C9C9C"/>
<rect x="797.5" y="614.5" width="4" height="23" fill="none" stroke="#B4B4B4" stroke-width="1" opacity="0.6"/>
<rect x="804" y="614" width="5" height="24" fill="#9C9C9C"/>
<rect x="804.5" y="614.5" width="4" height="23" fill="none" stroke="#B4B4B4" stroke-width="1" opacity="0.6"/>
<rect x="811" y="614" width="5" height="24" fill="#9C9C9C"/>
<rect x="811.5" y="614.5" width="4" height="23" fill="none" stroke="#B4B4B4" stroke-width="1" opacity="0.6"/>
<rect x="818" y="614" width="5" height="24" fill="#9C9C9C"/>
<rect x="818.5" y="614.5" width="4" height="23" fill="none" stroke="#B4B4B4" stroke-width="1" opacity="0.6"/>
<rect x="825" y="614" width="5" height="24" fill="#9C9C9C"/>
<rect x="825.5" y="614.5" width="4" height="23" fill="none" stroke="#B4B4B4" stroke-width="1" opacity="0.6"/>
<rect x="832" y="614" width="5" height="24" fill="#9C9C9C"/>
<rect x="832.5" y="614.5" width="4" height="23" fill="none" stroke="#B4B4B4" stroke-width="1" opacity="0.6"/>
<rect x="839" y="614" width="5" height="24" fill="#9C9C9C"/>
<rect x="839.5" y="614.5" width="4" height="23" fill="none" stroke="#B4B4B4" stroke-width="1" opacity="0.6"/>
<rect x="846" y="614" width="5" height="24" fill="#9C9C9C"/>
<rect x="846.5" y="614.5" width="4" height="23" fill="none" stroke="#B4B4B4" stroke-width="1" opacity="0.6"/>
<rect x="853" y="614" width="5" height="24" fill="#9C9C9C"/>
<rect x="853.5" y="614.5" width="4" height="23" fill="none" stroke="#B4B4B4" stroke-width="1" opacity="0.6"/>
<rect x="860" y="614" width="5" height="24" fill="#9C9C9C"/>
<rect x="860.5" y="614.5" width="4" height="23" fill="none" stroke="#B4B4B4" stroke-width="1" opacity="0.6"/>
<rect x="867" y="614" width="5" height="24" fill="#9C9C9C"/>
<rect x="867.5" y="614.5" width="4" height="23" fill="none" stroke="#B4B4B4" stroke-width="1" opacity="0.6"/>
<rect x="874" y="614" width="5" height="24" fill="#9C9C9C"/>
<rect x="874.5" y="614.5" width="4" height="23" fill="none" stroke="#B4B4B4" stroke-width="1" opacity="0.6"/>
<rect x="881" y="614" width="5" height="24" fill="#9C9C9C"/>
<rect x="881.5" y="614.5" width="4" height="23" fill="none" stroke="#B4B4B4" stroke-width="1" opacity="0.6"/>
<rect x="888" y="614" width="5" height="24" fill="#9C9C9C"/>
<rect x="888.5" y="614.5" width="4" height="23" fill="none" stroke="#B4B4B4" stroke-width="1" opacity="0.6"/>
<rect x="895" y="614" width="5" height="24" fill="#9C9C9C"/>
<rect x="895.5" y="614.5" width="4" height="23" fill="none" stroke="#B4B4B4" stroke-width="1" opacity="0.6"/>
<rect x="902" y="614" width="5" height="24" fill="#9C9C9C"/>
<rect x="902.5" y="614.5" width="4" height="23" fill="none" stroke="#B4B4B4" stroke-width="1" opacity="0.6"/>
<rect x="909" y="614" width="5" height="24" fill="#9C9C9C"/>
<rect x="909.5" y="614.5" width="4" height="23" fill="none" stroke="#B4B4B4" stroke-width="1" opacity="0.6"/>
<rect x="916" y="614" width="5" height="24" fill="#9C9C9C"/>
<rect x="916.5" y="614.5" width="4" height="23" fill="none" stroke="#B4B4B4" stroke-width="1" opacity="0.6"/>
<rect x="923" y="614" width="5" height="24" fill="#9C9C9C"/>
<rect x="923.5" y="614.5" width="4" height="23" fill="none" stroke="#B4B4B4" stroke-width="1" opacity="0.6"/>
<rect x="930" y="614" width="5" height="24" fill="#9C9C9C"/>
<rect x="930.5" y="614.5" width="4" height="23" fill="none" stroke="#B4B4B4" stroke-width="1" opacity="0.6"/>
<rect x="937" y="614" width="5" height="24" fill="#9C9C9C"/>
<rect x="937.5" y="614.5" width="4" height="23" fill="none" stroke="#B4B4B4" stroke-width="1" opacity="0.6"/>
<rect x="944" y="614" width="5" height="24" fill="#9C9C9C"/>
<rect x="944.5" y="614.5" width="4" height="23" fill="none" stroke="#B4B4B4" stroke-width="1" opacity="0.6"/>
<rect x="951" y="614" width="5" height="24" fill="#9C9C9C"/>
<rect x="951.5" y="614.5" width="4" height="23" fill="none" stroke="#B4B4B4" stroke-width="1" opacity="0.6"/>
<rect x="958" y="614" width="5" height="24" fill="#9C9C9C"/>
<rect x="958.5" y="614.5" width="4" height="23" fill="none" stroke="#B4B4B4" stroke-width="1" opacity="0.6"/>
<rect x="965" y="614" width="5" height="24" fill="#9C9C9C"/>
<rect x="965.5" y="614.5" width="4" height="23" fill="none" stroke="#B4B4B4" stroke-width="1" opacity="0.6"/>
<rect x="972" y="614" width="5" height="24" fill="#9C9C9C"/>
<rect x="972.5" y="614.5" width="4" height="23" fill="none" stroke="#B4B4B4" stroke-width="1" opacity="0.6"/>
<rect x="979" y="614" width="5" height="24" fill="#9C9C9C"/>
<rect x="979.5" y="614.5" width="4" height="23" fill="none" stroke="#B4B4B4" stroke-width="1" opacity="0.6"/>
<rect x="986" y="614" width="5" height="24" fill="#9C9C9C"/>
<rect x="986.5" y="614.5" width="4" height="23" fill="none" stroke="#B4B4B4" stroke-width="1" opacity="0.6"/>
<rect x="993" y="614" width="5" height="24" fill="#9C9C9C"/>
<rect x="993.5" y="614.5" width="4" height="23" fill="none" stroke="#B4B4B4" stroke-width="1" opacity="0.6"/>
<rect x="1000" y="614" width="5" height="24" fill="#9C9C9C"/>
<rect x="1000.5" y="614.5" width="4" height="23" fill="none" stroke="#B4B4B4" stroke-width="1" opacity="0.6"/>
<rect x="1007" y="614" width="5" height="24" fill="#9C9C9C"/>
<rect x="1007.5" y="614.5" width="4" height="23" fill="none" stroke="#B4B4B4" stroke-width="1" opacity="0.6"/>
<rect x="1014" y="614" width="5" height="24" fill="#9C9C9C"/>
<rect x="1014.5" y="614.5" width="4" height="23" fill="none" stroke="#B4B4B4" stroke-width="1" opacity="0.6"/>
<rect x="1021" y="614" width="5" height="24" fill="#9C9C9C"/>
<rect x="1021.5" y="614.5" width="4" height="23" fill="none" stroke="#B4B4B4" stroke-width="1" opacity="0.6"/>
<rect x="1028" y="614" width="5" height="24" fill="#9C9C9C"/>
<rect x="1028.5" y="614.5" width="4" height="23" fill="none" stroke="#B4B4B4" stroke-width="1" opacity="0.6"/>
<rect x="1035" y="614" width="5" height="24" fill="#9C9C9C"/>
<rect x="1035.5" y="614.5" width="4" height="23" fill="none" stroke="#B4B4B4" stroke-width="1" opacity="0.6"/>
<rect x="1042" y="614" width="5" height="24" fill="#9C9C9C"/>
<rect x="1042.5" y="614.5" width="4" height="23" fill="none" stroke="#B4B4B4" stroke-width="1" opacity="0.6"/>
<rect x="1049" y="614" width="5" height="24" fill="#9C9C9C"/>
<rect x="1049.5" y="614.5" width="4" height="23" fill="none" stroke="#B4B4B4" stroke-width="1" opacity="0.6"/>
<rect x="1056" y="614" width="5" height="24" fill="#9C9C9C"/>
<rect x="1056.5" y="614.5" width="4" height="23" fill="none" stroke="#B4B4B4" stroke-width="1" opacity="0.6"/>
<rect x="1063" y="614" width="5" height="24" fill="#9C9C9C"/>
<rect x="1063.5" y="614.5" width="4" height="23" fill="none" stroke="#B4B4B4" stroke-width="1" opacity="0.6"/>
<rect x="1070" y="614" width="5" height="24" fill="#9C9C9C"/>
<rect x="1070.5" y="614.5" width="4" height="23" fill="none" stroke="#B4B4B4" stroke-width="1" opacity="0.6"/>
<rect x="1077" y="614" width="5" height="24" fill="#9C9C9C"/>
<rect x="1077.5" y="614.5" width="4" height="23" fill="none" stroke="#B4B4B4" stroke-width="1" opacity="0.6"/>
<rect x="1084" y="614" width="5" height="24" fill="#9C9C9C"/>
<rect x="1084.5" y="614.5" width="4" height="23" fill="none" stroke="#B4B4B4" stroke-width="1" opacity="0.6"/>
<rect x="1091" y="614" width="5" height="24" fill="#9C9C9C"/>
<rect x="1091.5" y="614.5" width="4" height="23" fill="none" stroke="#B4B4B4" stroke-width="1" opacity="0.6"/>
<rect x="1098" y="614" width="5" height="24" fill="#9C9C9C"/>
<rect x="1098.5" y="614.5" width="4" height="23" fill="none" stroke="#B4B4B4" stroke-width="1" opacity="0.6"/>
<rect x="1105" y="614" width="5" height="24" fill="#9C9C9C"/>
<rect x="1105.5" y="614.5" width="4" height="23" fill="none" stroke="#B4B4B4" stroke-width="1" opacity="0.6"/>
<rect x="1112" y="614" width="5" height="24" fill="#9C9C9C"/>
<rect x="1112.5" y="614.5" width="4" height="23" fill="none" stroke="#B4B4B4" stroke-width="1" opacity="0.6"/>
<rect x="1119" y="614" width="5" height="24" fill="#9C9C9C"/>
<rect x="1119.5" y="614.5" width="4" height="23" fill="none" stroke="#B4B4B4" stroke-width="1" opacity="0.6"/>
<rect x="1126" y="614" width="5" height="24" fill="#9C9C9C"/>
<rect x="1126.5" y="614.5" width="4" height="23" fill="none" stroke="#B4B4B4" stroke-width="1" opacity="0.6"/>
<rect x="1133" y="614" width="5" height="24" fill="#9C9C9C"/>
<rect x="1133.5" y="614.5" width="4" height="23" fill="none" stroke="#B4B4B4" stroke-width="1" opacity="0.6"/>
<rect x="1140" y="614" width="5" height="24" fill="#9C9C9C"/>
<rect x="1140.5" y="614.5" width="4" height="23" fill="none" stroke="#B4B4B4" stroke-width="1" opacity="0.6"/>
<rect x="1147" y="614" width="5" height="24" fill="#9C9C9C"/>
<rect x="1147.5" y="614.5" width="4" height="23" fill="none" stroke="#B4B4B4" stroke-width="1" opacity="0.6"/>
<rect x="1154" y="614" width="5" height="24" fill="#9C9C9C"/>
<rect x="1154.5" y="614.5" width="4" height="23" fill="none" stroke="#B4B4B4" stroke-width="1" opacity="0.6"/>
<rect x="1161" y="614" width="5" height="24" fill="#9C9C9C"/>
<rect x="1161.5" y="614.5" width="4" height="23" fill="none" stroke="#B4B4B4" stroke-width="1" opacity="0.6"/>
<rect x="1168" y="614" width="5" height="24" fill="#9C9C9C"/>
<rect x="1168.5" y="614.5" width="4" height="23" fill="none" stroke="#B4B4B4" stroke-width="1" opacity="0.6"/>
<rect x="1175" y="614" width="5" height="24" fill="#9C9C9C"/>
<rect x="1175.5" y="614.5" width="4" height="23" fill="none" stroke="#B4B4B4" stroke-width="1" opacity="0.6"/>
<rect x="1182" y="614" width="5" height="24" fill="#9C9C9C"/>
<rect x="1182.5" y="614.5" width="4" height="23" fill="none" stroke="#B4B4B4" stroke-width="1" opacity="0.6"/>
<rect x="1189" y="614" width="5" height="24" fill="#9C9C9C"/>
<rect x="1189.5" y="614.5" width="4" height="23" fill="none" stroke="#B4B4B4" stroke-width="1" opacity="0.6"/>
<rect x="1196" y="614" width="5" height="24" fill="#9C9C9C"/>
<rect x="1196.5" y="614.5" width="4" height="23" fill="none" stroke="#B4B4B4" stroke-width="1" opacity="0.6"/>
<rect x="1203" y="614" width="5" height="24" fill="#9C9C9C"/>
<rect x="1203.5" y="614.5" width="4" height="23" fill="none" stroke="#B4B4B4" stroke-width="1" opacity="0.6"/>
<rect x="1210" y="614" width="5" height="24" fill="#9C9C9C"/>
<rect x="1210.5" y="614.5" width="4" height="23" fill="none" stroke="#B4B4B4" stroke-width="1" opacity="0.6"/>
<rect x="1217" y="614" width="5" height="24" fill="#9C9C9C"/>
<rect x="1217.5" y="614.5" width="4" height="23" fill="none" stroke="#B4B4B4" stroke-width="1" opacity="0.6"/>
<rect x="1224" y="614" width="5" height="24" fill="#9C9C9C"/>
<rect x="1224.5" y="614.5" width="4" height="23" fill="none" stroke="#B4B4B4" stroke-width="1" opacity="0.6"/>
<rect x="1231" y="614" width="5" height="24" fill="#9C9C9C"/>
<rect x="1231.5" y="614.5" width="4" height="23" fill="none" stroke="#B4B4B4" stroke-width="1" opacity="0.6"/>
<rect x="1238" y="614" width="5" height="24" fill="#9C9C9C"/>
<rect x="1238.5" y="614.5" width="4" height="23" fill="none" stroke="#B4B4B4" stroke-width="1" opacity="0.6"/>
<rect x="1245" y="614" width="5" height="24" fill="#9C9C9C"/>
<rect x="1245.5" y="614.5" width="4" height="23" fill="none" stroke="#B4B4B4" stroke-width="1" opacity="0.6"/>
<rect x="1252" y="614" width="5" height="24" fill="#9C9C9C"/>
<rect x="1252.5" y="614.5" width="4" height="23" fill="none" stroke="#B4B4B4" stroke-width="1" opacity="0.6"/>
<rect x="1259" y="614" width="5" height="24" fill="#9C9C9C"/>
<rect x="1259.5" y="614.5" width="4" height="23" fill="none" stroke="#B4B4B4" stroke-width="1" opacity="0.6"/>
<rect x="1266" y="614" width="5" height="24" fill="#9C9C9C"/>
<rect x="1266.5" y="614.5" width="4" height="23" fill="none" stroke="#B4B4B4" stroke-width="1" opacity="0.6"/>
<rect x="1273" y="614" width="5" height="24" fill="#9C9C9C"/>
<rect x="1273.5" y="614.5" width="4" height="23" fill="none" stroke="#B4B4B4" stroke-width="1" opacity="0.6"/>
<rect x="1280" y="614" width="5" height="24" fill="#9C9C9C"/>
<rect x="1280.5" y="614.5" width="4" height="23" fill="none" stroke="#B4B4B4" stroke-width="1" opacity="0.6"/>
<rect x="1287" y="614" width="5" height="24" fill="#9C9C9C"/>
<rect x="1287.5" y="614.5" width="4" height="23" fill="none" stroke="#B4B4B4" stroke-width="1" opacity="0.6"/>
<rect x="1294" y="614" width="5" height="24" fill="#9C9C9C"/>
<rect x="1294.5" y="614.5" width="4" height="23" fill="none" stroke="#B4B4B4" stroke-width="1" opacity="0.6"/>
<rect x="1301" y="614" width="5" height="24" fill="#9C9C9C"/>
<rect x="1301.5" y="614.5" width="4" height="23" fill="none" stroke="#B4B4B4" stroke-width="1" opacity="0.6"/>
<rect x="1308" y="614" width="5" height="24" fill="#9C9C9C"/>
<rect x="1308.5" y="614.5" width="4" height="23" fill="none" stroke="#B4B4B4" stroke-width="1" opacity="0.6"/>
<rect x="1315" y="614" width="5" height="24" fill="#9C9C9C"/>
<rect x="1315.5" y="614.5" width="4" height="23" fill="none" stroke="#B4B4B4" stroke-width="1" opacity="0.6"/>
<rect x="1322" y="614" width="5" height="24" fill="#9C9C9C"/>
<rect x="1322.5" y="614.5" width="4" height="23" fill="none" stroke="#B4B4B4" stroke-width="1" opacity="0.6"/>
<rect x="1329" y="614" width="5" height="24" fill="#9C9C9C"/>
<rect x="1329.5" y="614.5" width="4" height="23" fill="none" stroke="#B4B4B4" stroke-width="1" opacity="0.6"/>
<rect x="1336" y="614" width="5" height="24" fill="#9C9C9C"/>
<rect x="1336.5" y="614.5" width="4" height="23" fill="none" stroke="#B4B4B4" stroke-width="1" opacity="0.6"/>
<rect x="1343" y="614" width="5" height="24" fill="#9C9C9C"/>
<rect x="1343.5" y="614.5" width="4" height="23" fill="none" stroke="#B4B4B4" stroke-width="1" opacity="0.6"/>
<rect x="1350" y="614" width="5" height="24" fill="#9C9C9C"/>
<rect x="1350.5" y="614.5" width="4" height="23" fill="none" stroke="#B4B4B4" stroke-width="1" opacity="0.6"/>
<rect x="1357" y="614" width="5" height="24" fill="#9C9C9C"/>
<rect x="1357.5" y="614.5" width="4" height="23" fill="none" stroke="#B4B4B4" stroke-width="1" opacity="0.6"/>
<rect x="1364" y="614" width="5" height="24" fill="#9C9C9C"/>
<rect x="1364.5" y="614.5" width="4" height="23" fill="none" stroke="#B4B4B4" stroke-width="1" opacity="0.6"/>
<rect x="1371" y="614" width="5" height="24" fill="#9C9C9C"/>
<rect x="1371.5" y="614.5" width="4" height="23" fill="none" stroke="#B4B4B4" stroke-width="1" opacity="0.6"/>
<rect x="1378" y="614" width="5" height="24" fill="#9C9C9C"/>
<rect x="1378.5" y="614.5" width="4" height="23" fill="none" stroke="#B4B4B4" stroke-width="1" opacity="0.6"/>
<rect x="1385" y="614" width="5" height="24" fill="#9C9C9C"/>
<rect x="1385.5" y="614.5" width="4" height="23" fill="none" stroke="#B4B4B4" stroke-width="1" opacity="0.6"/>
<rect x="1392" y="614" width="5" height="24" fill="#9C9C9C"/>
<rect x="1392.5" y="614.5" width="4" height="23" fill="none" stroke="#B4B4B4" stroke-width="1" opacity="0.6"/>
<rect x="1399" y="614" width="5" height="24" fill="#9C9C9C"/>
<rect x="1399.5" y="614.5" width="4" height="23" fill="none" stroke="#B4B4B4" stroke-width="1" opacity="0.6"/>
<rect x="1406" y="614" width="5" height="24" fill="#9C9C9C"/>
<rect x="1406.5" y="614.5" width="4" height="23" fill="none" stroke="#B4B4B4" stroke-width="1" opacity="0.6"/>
<rect x="1413" y="614" width="5" height="24" fill="#9C9C9C"/>
<rect x="1413.5" y="614.5" width="4" height="23" fill="none" stroke="#B4B4B4" stroke-width="1" opacity="0.6"/>
<rect x="1420" y="614" width="5" height="24" fill="#9C9C9C"/>
<rect x="1420.5" y="614.5" width="4" height="23" fill="none" stroke="#B4B4B4" stroke-width="1" opacity="0.6"/>
<rect x="1427" y="614" width="5" height="24" fill="#9C9C9C"/>
<rect x="1427.5" y="614.5" width="4" height="23" fill="none" stroke="#B4B4B4" stroke-width="1" opacity="0.6"/>
<rect x="1434" y="614" width="5" height="24" fill="#9C9C9C"/>
<rect x="1434.5" y="614.5" width="4" height="23" fill="none" stroke="#B4B4B4" stroke-width="1" opacity="0.6"/>
<rect x="1441" y="614" width="5" height="24" fill="#9C9C9C"/>
<rect x="1441.5" y="614.5" width="4" height="23" fill="none" stroke="#B4B4B4" stroke-width="1" opacity="0.6"/>
<rect x="1448" y="614" width="5" height="24" fill="#9C9C9C"/>
<rect x="1448.5" y="614.5" width="4" height="23" fill="none" stroke="#B4B4B4" stroke-width="1" opacity="0.6"/>
<rect x="1455" y="614" width="5" height="24" fill="#9C9C9C"/>
<rect x="1455.5" y="614.5" width="4" height="23" fill="none" stroke="#B4B4B4" stroke-width="1" opacity="0.6"/>
<rect x="1462" y="614" width="5" height="24" fill="#9C9C9C"/>
<rect x="1462.5" y="614.5" width="4" height="23" fill="none" stroke="#B4B4B4" stroke-width="1" opacity="0.6"/>
<rect x="1469" y="614" width="5" height="24" fill="#9C9C9C"/>
<rect x="1469.5" y="614.5" width="4" height="23" fill="none" stroke="#B4B4B4" stroke-width="1" opacity="0.6"/>
<rect x="1476" y="614" width="5" height="24" fill="#9C9C9C"/>
<rect x="1476.5" y="614.5" width="4" height="23" fill="none" stroke="#B4B4B4" stroke-width="1" opacity="0.6"/>
<rect x="1483" y="614" width="5" height="24" fill="#9C9C9C"/>
<rect x="1483.5" y="614.5" width="4" height="23" fill="none" stroke="#B4B4B4" stroke-width="1" opacity="0.6"/>
<rect x="1490" y="614" width="5" height="24" fill="#9C9C9C"/>
<rect x="1490.5" y="614.5" width="4" height="23" fill="none" stroke="#B4B4B4" stroke-width="1" opacity="0.6"/>
<rect x="1497" y="614" width="5" height="24" fill="#9C9C9C"/>
<rect x="1497.5" y="614.5" width="4" height="23" fill="none" stroke="#B4B4B4" stroke-width="1" opacity="0.6"/>
<rect x="1504" y="614" width="5" height="24" fill="#9C9C9C"/>
<rect x="1504.5" y="614.5" width="4" height="23" fill="none" stroke="#B4B4B4" stroke-width="1" opacity="0.6"/>
<rect x="1511" y="614" width="5" height="24" fill="#9C9C9C"/>
<rect x="1511.5" y="614.5" width="4" height="23" fill="none" stroke="#B4B4B4" stroke-width="1" opacity="0.6"/>
<rect x="1518" y="614" width="5" height="24" fill="#9C9C9C"/>
<rect x="1518.5" y="614.5" width="4" height="23" fill="none" stroke="#B4B4B4" stroke-width="1" opacity="0.6"/>
<rect x="1525" y="614" width="5" height="24" fill="#9C9C9C"/>
<rect x="1525.5" y="614.5" width="4" height="23" fill="none" stroke="#B4B4B4" stroke-width="1" opacity="0.6"/>
<rect x="1532" y="614" width="5" height="24" fill="#9C9C9C"/>
<rect x="1532.5" y="614.5" width="4" height="23" fill="none" stroke="#B4B4B4" stroke-width="1" opacity="0.6"/>
<rect x="1539" y="614" width="5" height="24" fill="#9C9C9C"/>
<rect x="1539.5" y="614.5" width="4" height="23" fill="none" stroke="#B4B4B4" stroke-width="1" opacity="0.6"/>
<rect x="65" y="579" width="1478" height="1" fill="#FFFF00"/>
<rect x="65" y="671" width="1478" height="1" fill="#FFFFFF"/>
<rect x="63.5" y="671.5" width="3" height="4" fill="none" stroke="#80FFFF"/>
<rect x="70.5" y="672.5" width="3" height="3" fill="none" stroke="#80FFFF"/>
<rect x="77.5" y="673.5" width="3" height="2" fill="none" stroke="#80FFFF"/>
<rect x="84.5" y="674.5" width="3" height="2" fill="none" stroke="#80FFFF"/>
<rect x="91.5" y="674.5" width="3" height="2" fill="none" stroke="#80FFFF"/>
<rect x="98" y="675" width="4" height="2" fill="#80FFFF"/>
<rect x="105.5" y="675.5" width="3" height="2" fill="none" stroke="#80FFFF"/>
<rect x="112.5" y="665.5" width="3" height="5" fill="none" stroke="#FF40FF"/>
<rect x="119.5" y="658.5" width="3" height="6" fill="none" stroke="#FF40FF"/>
<rect x="126.5" y="655.5" width="3" height="7" fill="none" stroke="#FF40FF"/>
<rect x="133.5" y="660.5" width="3" height="2" fill="none" stroke="#FF40FF"/>
<rect x="140.5" y="664.5" width="3" height="3" fill="none" stroke="#80FFFF"/>
<rect x="147.5" y="666.5" width="3" height="2" fill="none" stroke="#80FFFF"/>
<rect x="154.5" y="669.5" width="3" height="3" fill="none" stroke="#80FFFF"/>
<rect x="161.5" y="670.5" width="3" height="3" fill="none" stroke="#80FFFF"/>
<rect x="168" y="671" width="4" height="2" fill="#80FFFF"/>
<rect x="175" y="669" width="4" height="2" fill="#FF40FF"/>
<rect x="182" y="670" width="4" height="2" fill="#FF40FF"/>
<rect x="189" y="671" width="4" height="2" fill="#80FFFF"/>
<rect x="196.5" y="671.5" width="3" height="2" fill="none" stroke="#80FFFF"/>
<rect x="203" y="673" width="4" height="2" fill="#80FFFF"/>
<rect x="210" y="674" width="4" height="2" fill="#80FFFF"/>
<rect x="217" y="674" width="4" height="2" fill="#80FFFF"/>
<rect x="224" y="671" width="4" height="2" fill="#FF40FF"/>
<rect x="231" y="672" width="4" height="1" fill="#FF40FF"/>
<rect x="238" y="674" width="4" height="2" fill="#80FFFF"/>
<rect x="245.5" y="669.5" width="3" height="2" fill="none" stroke="#FF40FF"/>
<rect x="252.5" y="660.5" width="3" height="5" fill="none" stroke="#FF40FF"/>
<rect x="259.5" y="660.5" width="3" height="4" fill="none" stroke="#FF40FF"/>
<rect x="266.5" y="652.5" width="3" height="8" fill="none" stroke="#FF40FF"/>
<rect x="273.5" y="641.5" width="3" height="12" fill="none" stroke="#FF40FF"/>
<rect x="280.5" y="633.5" width="3" height="13" fill="none" stroke="#FF40FF"/>
<rect x="287.5" y="631.5" width="3" height="10" fill="none" stroke="#FF40FF"/>
<rect x="294.5" y="631.5" width="3" height="7" fill="none" stroke="#FF40FF"/>
<rect x="301.5" y="611.5" width="3" height="17" fill="none" stroke="#FF40FF"/>
<rect x="308.5" y="602.5" width="3" height="17" fill="none" stroke="#FF40FF"/>
<rect x="315.5" y="590.5" width="3" height="19" fill="none" stroke="#FF40FF"/>
<rect x="322.5" y="585.5" width="3" height="16" fill="none" stroke="#FF40FF"/>
<rect x="329.5" y="583.5" width="3" height="12" fill="none" stroke="#FF40FF"/>
<rect x="336.5" y="582.5" width="3" height="9" fill="none" stroke="#FF40FF"/>
<rect x="343.5" y="585.5" width="3" height="4" fill="none" stroke="#FF40FF"/>
<rect x="350" y="589" width="4" height="1" fill="#80FFFF"/>
<rect x="357" y="590" width="4" height="1" fill="#80FFFF"/>
<rect x="364" y="590" width="4" height="1" fill="#80FFFF"/>
<rect x="371" y="591" width="4" height="1" fill="#80FFFF"/>
<rect x="378.5" y="592.5" width="3" height="3" fill="none" stroke="#80FFFF"/>
<rect x="385.5" y="588.5" width="3" height="3" fill="none" stroke="#FF40FF"/>
<rect x="392.5" y="583.5" width="3" height="4" fill="none" stroke="#FF40FF"/>
<rect x="399.5" y="582.5" width="3" height="3" fill="none" stroke="#FF40FF"/>
<rect x="406.5" y="581.5" width="3" height="3" fill="none" stroke="#FF40FF"/>
<rect x="413.5" y="577.5" width="3" height="4" fill="none" stroke="#FF40FF"/>
<rect x="420.5" y="575.5" width="3" height="4" fill="none" stroke="#FF40FF"/>
<rect x="427" y="580" width="4" height="2" fill="#80FFFF"/>
<rect x="434" y="580" width="4" height="1" fill="#FF40FF"/>
<rect x="441.5" y="576.5" width="3" height="2" fill="none" stroke="#FF40FF"/>
<rect x="448" y="577" width="4" height="1" fill="#FF40FF"/>
<rect x="455" y="577" width="4" height="1" fill="#FF40FF"/>
<rect x="462" y="578" width="4" height="1" fill="#80FFFF"/>
<rect x="469" y="579" width="4" height="2" fill="#80FFFF"/>
<rect x="476.5" y="580.5" width="3" height="3" fill="none" stroke="#80FFFF"/>
<rect x="483.5" y="580.5" width="3" height="7" fill="none" stroke="#80FFFF"/>
<rect x="490.5" y="582.5" width="3" height="7" fill="none" stroke="#80FFFF"/>
<rect x="497.5" y="588.5" width="3" height="3" fill="none" stroke="#80FFFF"/>
<rect x="504.5" y="585.5" width="3" height="2" fill="none" stroke="#FF40FF"/>
<rect x="511.5" y="583.5" width="3" height="2" fill="none" stroke="#FF40FF"/>
<rect x="518" y="582" width="4" height="2" fill="#FF40FF"/>
<rect x="525.5" y="580.5" width="3" height="2" fill="none" stroke="#FF40FF"/>
<rect x="532" y="580" width="4" height="2" fill="#FF40FF"/>
<rect x="539" y="579" width="4" height="2" fill="#FF40FF"/>
<rect x="546.5" y="578.5" width="3" height="2" fill="none" stroke="#FF40FF"/>
<rect x="553.5" y="577.5" width="3" height="2" fill="none" stroke="#FF40FF"/>
<rect x="560" y="577" width="4" height="2" fill="#FF40FF"/>
<rect x="567.5" y="576.5" width="3" height="2" fill="none" stroke="#FF40FF"/>
<rect x="574" y="576" width="4" height="2" fill="#FF40FF"/>
<rect x="581" y="575" width="4" height="2" fill="#FF40FF"/>
<rect x="588" y="575" width="4" height="2" fill="#FF40FF"/>
<rect x="595" y="574" width="4" height="2" fill="#FF40FF"/>
<rect x="602" y="575" width="4" height="1" fill="#80FFFF"/>
<rect x="609" y="575" width="4" height="2" fill="#80FFFF"/>
<rect x="616" y="576" width="4" height="1" fill="#80FFFF"/>
<rect x="623" y="575" width="4" height="1" fill="#FF40FF"/>
<rect x="630" y="574" width="4" height="2" fill="#FF40FF"/>
<rect x="637" y="573" width="4" height="2" fill="#FF40FF"/>
<rect x="644.5" y="572.5" width="3" height="2" fill="none" stroke="#FF40FF"/>
<rect x="651" y="574" width="4" height="2" fill="#80FFFF"/>
<rect x="658.5" y="577.5" width="3" height="4" fill="none" stroke="#80FFFF"/>
<rect x="665.5" y="580.5" width="3" height="3" fill="none" stroke="#80FFFF"/>
<rect x="672.5" y="582.5" width="3" height="4" fill="none" stroke="#80FFFF"/>
<rect x="679.5" y="585.5" width="3" height="6" fill="none" stroke="#80FFFF"/>
<rect x="686.5" y="592.5" width="3" height="9" fill="none" stroke="#80FFFF"/>
<rect x="693.5" y="596.5" width="3" height="9" fill="none" stroke="#80FFFF"/>
<rect x="700.5" y="600.5" width="3" height="8" fill="none" stroke="#80FFFF"/>
<rect x="707.5" y="603.5" width="3" height="3" fill="none" stroke="#80FFFF"/>
<rect x="714.5" y="609.5" width="3" height="8" fill="none" stroke="#80FFFF"/>
<rect x="721.5" y="616.5" width="3" height="16" fill="none" stroke="#80FFFF"/>
<rect x="728.5" y="625.5" width="3" height="18" fill="none" stroke="#80FFFF"/>
<rect x="735.5" y="635.5" width="3" height="18" fill="none" stroke="#80FFFF"/>
<rect x="742.5" y="644.5" width="3" height="14" fill="none" stroke="#80FFFF"/>
<rect x="749.5" y="650.5" width="3" height="15" fill="none" stroke="#80FFFF"/>
<rect x="756.5" y="656.5" width="3" height="11" fill="none" stroke="#80FFFF"/>
<rect x="763.5" y="661.5" width="3" height="11" fill="none" stroke="#80FFFF"/>
<rect x="770.5" y="666.5" width="3" height="7" fill="none" stroke="#80FFFF"/>
<rect x="777.5" y="669.5" width="3" height="6" fill="none" stroke="#80FFFF"/>
<rect x="784.5" y="672.5" width="3" height="5" fill="none" stroke="#80FFFF"/>
<rect x="791.5" y="674.5" width="3" height="3" fill="none" stroke="#80FFFF"/>
<rect x="798.5" y="676.5" width="3" height="2" fill="none" stroke="#80FFFF"/>
<rect x="805.5" y="670.5" width="3" height="3" fill="none" stroke="#FF40FF"/>
<rect x="812.5" y="665.5" width="3" height="4" fill="none" stroke="#FF40FF"/>
<rect x="819.5" y="661.5" width="3" height="6" fill="none" stroke="#FF40FF"/>
<rect x="826.5" y="656.5" width="3" height="7" fill="none" stroke="#FF40FF"/>
<rect x="833.5" y="653.5" width="3" height="7" fill="none" stroke="#FF40FF"/>
<rect x="840" y="659" width="4" height="2" fill="#FF40FF"/>
<rect x="847.5" y="661.5" width="3" height="3" fill="none" stroke="#80FFFF"/>
<rect x="854.5" y="664.5" width="3" height="6" fill="none" stroke="#80FFFF"/>
<rect x="861" y="666" width="4" height="2" fill="#80FFFF"/>
<rect x="868.5" y="667.5" width="3" height="3" fill="none" stroke="#80FFFF"/>
<rect x="875" y="667" width="4" height="1" fill="#80FFFF"/>
<rect x="882.5" y="669.5" width="3" height="3" fill="none" stroke="#80FFFF"/>
<rect x="889" y="668" width="4" height="1" fill="#FF40FF"/>
<rect x="896.5" y="667.5" width="3" height="2" fill="none" stroke="#FF40FF"/>
<rect x="903.5" y="665.5" width="3" height="3" fill="none" stroke="#FF40FF"/>
<rect x="910.5" y="661.5" width="3" height="2" fill="none" stroke="#FF40FF"/>
<rect x="917.5" y="647.5" width="3" height="11" fill="none" stroke="#FF40FF"/>
<rect x="924.5" y="641.5" width="3" height="9" fill="none" stroke="#FF40FF"/>
<rect x="931.5" y="642.5" width="3" height="6" fill="none" stroke="#FF40FF"/>
<rect x="938.5" y="639.5" width="3" height="6" fill="none" stroke="#FF40FF"/>
<rect x="945.5" y="629.5" width="3" height="10" fill="none" stroke="#FF40FF"/>
<rect x="952.5" y="622.5" width="3" height="12" fill="none" stroke="#FF40FF"/>
<rect x="959.5" y="614.5" width="3" height="12" fill="none" stroke="#FF40FF"/>
<rect x="966.5" y="609.5" width="3" height="12" fill="none" stroke="#FF40FF"/>
<rect x="973.5" y="609.5" width="3" height="8" fill="none" stroke="#FF40FF"/>
<rect x="980.5" y="607.5" width="3" height="5" fill="none" stroke="#FF40FF"/>
<rect x="987.5" y="604.5" width="3" height="5" fill="none" stroke="#FF40FF"/>
<rect x="994.5" y="604.5" width="3" height="3" fill="none" stroke="#FF40FF"/>
<rect x="1001.5" y="603.5" width="3" height="2" fill="none" stroke="#FF40FF"/>
<rect x="1008.5" y="599.5" width="3" height="4" fill="none" stroke="#FF40FF"/>
<rect x="1015.5" y="589.5" width="3" height="9" fill="none" stroke="#FF40FF"/>
<rect x="1022.5" y="587.5" width="3" height="8" fill="none" stroke="#FF40FF"/>
<rect x="1029.5" y="589.5" width="3" height="3" fill="none" stroke="#FF40FF"/>
<rect x="1036" y="591" width="4" height="1" fill="#FF40FF"/>
<rect x="1043.5" y="594.5" width="3" height="4" fill="none" stroke="#80FFFF"/>
<rect x="1050.5" y="598.5" width="3" height="7" fill="none" stroke="#80FFFF"/>
<rect x="1057.5" y="604.5" width="3" height="12" fill="none" stroke="#80FFFF"/>
<rect x="1064.5" y="610.5" width="3" height="11" fill="none" stroke="#80FFFF"/>
<rect x="1071.5" y="615.5" width="3" height="9" fill="none" stroke="#80FFFF"/>
<rect x="1078.5" y="620.5" width="3" height="9" fill="none" stroke="#80FFFF"/>
<rect x="1085.5" y="626.5" width="3" height="10" fill="none" stroke="#80FFFF"/>
<rect x="1092.5" y="633.5" width="3" height="13" fill="none" stroke="#80FFFF"/>
<rect x="1099.5" y="637.5" width="3" height="8" fill="none" stroke="#80FFFF"/>
<rect x="1106.5" y="639.5" width="3" height="4" fill="none" stroke="#80FFFF"/>
<rect x="1113.5" y="635.5" width="3" height="3" fill="none" stroke="#FF40FF"/>
<rect x="1120" y="640" width="4" height="2" fill="#80FFFF"/>
<rect x="1127.5" y="643.5" width="3" height="5" fill="none" stroke="#80FFFF"/>
<rect x="1134.5" y="647.5" width="3" height="5" fill="none" stroke="#80FFFF"/>
<rect x="1141.5" y="650.5" width="3" height="10" fill="none" stroke="#80FFFF"/>
<rect x="1148" y="652" width="4" height="2" fill="#80FFFF"/>
<rect x="1155" y="651" width="4" height="1" fill="#FF40FF"/>
<rect x="1162.5" y="654.5" width="3" height="2" fill="none" stroke="#80FFFF"/>
<rect x="1169.5" y="657.5" width="3" height="3" fill="none" stroke="#80FFFF"/>
<rect x="1176.5" y="660.5" width="3" height="5" fill="none" stroke="#80FFFF"/>
<rect x="1183" y="661" width="4" height="2" fill="#80FFFF"/>
<rect x="1190.5" y="664.5" width="3" height="2" fill="none" stroke="#80FFFF"/>
<rect x="1197.5" y="666.5" width="3" height="4" fill="none" stroke="#80FFFF"/>
<rect x="1204.5" y="668.5" width="3" height="3" fill="none" stroke="#80FFFF"/>
<rect x="1211.5" y="671.5" width="3" height="3" fill="none" stroke="#80FFFF"/>
<rect x="1218" y="671" width="4" height="2" fill="#80FFFF"/>
<rect x="1225" y="672" width="4" height="1" fill="#80FFFF"/>
<rect x="1232" y="672" width="4" height="1" fill="#80FFFF"/>
<rect x="1239.5" y="661.5" width="3" height="7" fill="none" stroke="#FF40FF"/>
<rect x="1246.5" y="651.5" width="3" height="9" fill="none" stroke="#FF40FF"/>
<rect x="1253.5" y="645.5" width="3" height="10" fill="none" stroke="#FF40FF"/>
<rect x="1260.5" y="637.5" width="3" height="12" fill="none" stroke="#FF40FF"/>
<rect x="1267.5" y="631.5" width="3" height="11" fill="none" stroke="#FF40FF"/>
<rect x="1274.5" y="625.5" width="3" height="11" fill="none" stroke="#FF40FF"/>
<rect x="1281.5" y="623.5" width="3" height="9" fill="none" stroke="#FF40FF"/>
<rect x="1288.5" y="618.5" width="3" height="9" fill="none" stroke="#FF40FF"/>
<rect x="1295.5" y="614.5" width="3" height="8" fill="none" stroke="#FF40FF"/>
<rect x="1302.5" y="606.5" width="3" height="11" fill="none" stroke="#FF40FF"/>
<rect x="1309.5" y="596.5" width="3" height="12" fill="none" stroke="#FF40FF"/>
<rect x="1316.5" y="590.5" width="3" height="12" fill="none" stroke="#FF40FF"/>
<rect x="1323.5" y="593.5" width="3" height="5" fill="none" stroke="#FF40FF"/>
<rect x="1330" y="600" width="4" height="1" fill="#80FFFF"/>
<rect x="1337.5" y="604.5" width="3" height="8" fill="none" stroke="#80FFFF"/>
<rect x="1344.5" y="611.5" width="3" height="11" fill="none" stroke="#80FFFF"/>
<rect x="1351.5" y="615.5" width="3" height="7" fill="none" stroke="#80FFFF"/>
<rect x="1358.5" y="617.5" width="3" height="5" fill="none" stroke="#80FFFF"/>
<rect x="1365.5" y="620.5" width="3" height="6" fill="none" stroke="#80FFFF"/>
<rect x="1372.5" y="623.5" width="3" height="5" fill="none" stroke="#80FFFF"/>
<rect x="1379" y="624" width="4" height="1" fill="#80FFFF"/>
<rect x="1386.5" y="620.5" width="3" height="2" fill="none" stroke="#FF40FF"/>
<rect x="1393" y="622" width="4" height="1" fill="#FF40FF"/>
<rect x="1400.5" y="626.5" width="3" height="8" fill="none" stroke="#80FFFF"/>
<rect x="1407.5" y="641.5" width="3" height="7" fill="none" stroke="#80FFFF"/>
<rect x="1414.5" y="645.5" width="3" height="10" fill="none" stroke="#80FFFF"/>
<rect x="1421.5" y="647.5" width="3" height="9" fill="none" stroke="#80FFFF"/>
<rect x="1428.5" y="649.5" width="3" height="4" fill="none" stroke="#80FFFF"/>
<rect x="1435.5" y="642.5" width="3" height="4" fill="none" stroke="#FF40FF"/>
<rect x="1442.5" y="632.5" width="3" height="9" fill="none" stroke="#FF40FF"/>
<rect x="1449.5" y="635.5" width="3" height="3" fill="none" stroke="#FF40FF"/>
<rect x="1456" y="637" width="4" height="2" fill="#FF40FF"/>
<rect x="1463" y="639" width="4" height="1" fill="#80FFFF"/>
<rect x="1470" y="637" width="4" height="2" fill="#FF40FF"/>
<rect x="1477.5" y="641.5" width="3" height="2" fill="none" stroke="#80FFFF"/>
<rect x="1484.5" y="632.5" width="3" height="4" fill="none" stroke="#FF40FF"/>
<rect x="1491.5" y="623.5" width="3" height="11" fill="none" stroke="#FF40FF"/>
<rect x="1498.5" y="606.5" width="3" height="13" fill="none" stroke="#FF40FF"/>
<rect x="1505.5" y="593.5" width="3" height="18" fill="none" stroke="#FF40FF"/>
<rect x="1512.5" y="590.5" width="3" height="15" fill="none" stroke="#FF40FF"/>
<rect x="1519.5" y="589.5" width="3" height="11" fill="none" stroke="#FF40FF"/>
<rect x="1526" y="598" width="4" height="1" fill="#FF40FF"/>
<rect x="1533.5" y="601.5" width="3" height="4" fill="none" stroke="#80FFFF"/>
<rect x="1540.5" y="604.5" width="3" height="4" fill="none" stroke="#80FFFF"/>
<rect x="63" y="670" width="3" height="7" fill="#2EA82E"/>
<rect x="70" y="671" width="3" height="6" fill="#2EA82E"/>
<rect x="77" y="672" width="3" height="6" fill="#2EA82E"/>
<rect x="84" y="673" width="3" height="5" fill="#2EA82E"/>
<rect x="91" y="674" width="3" height="4" fill="#2EA82E"/>
<rect x="98" y="674" width="3" height="4" fill="#2EA82E"/>
<rect x="105" y="674" width="3" height="4" fill="#2EA82E"/>
<rect x="112" y="671" width="3" height="2" fill="#FF0000"/>
<rect x="119" y="666" width="3" height="6" fill="#FF0000"/>
<rect x="126" y="665" width="3" height="7" fill="#FF0000"/>
<rect x="133" y="665" width="3" height="6" fill="#FF0000"/>
<rect x="140" y="669" width="3" height="2" fill="#FF0000"/>
<rect x="147" y="670" width="3" height="2" fill="#FF0000"/>
<rect x="154" y="671" width="3" height="2" fill="#2EA82E"/>
<rect x="161" y="671" width="3" height="2" fill="#2EA82E"/>
<rect x="168" y="671" width="3" height="2" fill="#2EA82E"/>
<rect x="175" y="671" width="3" height="3" fill="#2EA82E"/>
<rect x="182" y="671" width="3" height="3" fill="#2EA82E"/>
<rect x="189" y="671" width="3" height="3" fill="#2EA82E"/>
<rect x="196" y="671" width="3" height="3" fill="#2EA82E"/>
<rect x="203" y="672" width="3" height="4" fill="#2EA82E"/>
<rect x="210" y="673" width="3" height="3" fill="#2EA82E"/>
<rect x="217" y="673" width="3" height="3" fill="#2EA82E"/>
<rect x="224" y="673" width="3" height="3" fill="#2EA82E"/>
<rect x="231" y="673" width="3" height="2" fill="#2EA82E"/>
<rect x="238" y="673" width="3" height="2" fill="#2EA82E"/>
<rect x="245" y="673" width="3" height="2" fill="#2EA82E"/>
<rect x="252" y="672" width="3" height="2" fill="#FF0000"/>
<rect x="259" y="669" width="3" height="5" fill="#FF0000"/>
<rect x="266" y="666" width="3" height="7" fill="#FF0000"/>
<rect x="273" y="661" width="3" height="10" fill="#FF0000"/>
<rect x="280" y="657" width="3" height="13" fill="#FF0000"/>
<rect x="287" y="654" width="3" height="14" fill="#FF0000"/>
<rect x="294" y="653" width="3" height="14" fill="#FF0000"/>
<rect x="301" y="646" width="3" height="19" fill="#FF0000"/>
<rect x="308" y="639" width="3" height="24" fill="#FF0000"/>
<rect x="315" y="630" width="3" height="30" fill="#FF0000"/>
<rect x="322" y="624" width="3" height="33" fill="#FF0000"/>
<rect x="329" y="619" width="3" height="33" fill="#FF0000"/>
<rect x="336" y="614" width="3" height="35" fill="#FF0000"/>
<rect x="343" y="612" width="3" height="34" fill="#FF0000"/>
<rect x="350" y="611" width="3" height="31" fill="#FF0000"/>
<rect x="357" y="610" width="3" height="29" fill="#FF0000"/>
<rect x="364" y="608" width="3" height="28" fill="#FF0000"/>
<rect x="371" y="606" width="3" height="27" fill="#FF0000"/>
<rect x="378" y="605" width="3" height="25" fill="#FF0000"/>
<rect x="385" y="599" width="3" height="28" fill="#FF0000"/>
<rect x="392" y="593" width="3" height="31" fill="#FF0000"/>
<rect x="399" y="590" width="3" height="31" fill="#FF0000"/>
<rect x="406" y="588" width="3" height="30" fill="#FF0000"/>
<rect x="413" y="585" width="3" height="29" fill="#FF0000"/>
<rect x="420" y="580" width="3" height="31" fill="#FF0000"/>
<rect x="427" y="582" width="3" height="27" fill="#FF0000"/>
<rect x="434" y="580" width="3" height="26" fill="#FF0000"/>
<rect x="441" y="578" width="3" height="25" fill="#FF0000"/>
<rect x="448" y="578" width="3" height="23" fill="#FF0000"/>
<rect x="455" y="577" width="3" height="22" fill="#FF0000"/>
<rect x="462" y="577" width="3" height="20" fill="#FF0000"/>
<rect x="469" y="578" width="3" height="17" fill="#FF0000"/>
<rect x="476" y="579" width="3" height="14" fill="#FF0000"/>
<rect x="483" y="579" width="3" height="12" fill="#FF0000"/>
<rect x="490" y="580" width="3" height="10" fill="#FF0000"/>
<rect x="497" y="581" width="3" height="7" fill="#FF0000"/>
<rect x="504" y="580" width="3" height="7" fill="#FF0000"/>
<rect x="511" y="578" width="3" height="9" fill="#FF0000"/>
<rect x="518" y="577" width="3" height="9" fill="#FF0000"/>
<rect x="525" y="577" width="3" height="8" fill="#FF0000"/>
<rect x="532" y="576" width="3" height="8" fill="#FF0000"/>
<rect x="539" y="575" width="3" height="8" fill="#FF0000"/>
<rect x="546" y="575" width="3" height="7" fill="#FF0000"/>
<rect x="553" y="574" width="3" height="7" fill="#FF0000"/>
<rect x="560" y="574" width="3" height="6" fill="#FF0000"/>
<rect x="567" y="573" width="3" height="7" fill="#FF0000"/>
<rect x="574" y="573" width="3" height="6" fill="#FF0000"/>
<rect x="581" y="573" width="3" height="5" fill="#FF0000"/>
<rect x="588" y="572" width="3" height="5" fill="#FF0000"/>
<rect x="595" y="572" width="3" height="5" fill="#FF0000"/>
<rect x="602" y="572" width="3" height="4" fill="#FF0000"/>
<rect x="609" y="573" width="3" height="3" fill="#FF0000"/>
<rect x="616" y="573" width="3" height="3" fill="#FF0000"/>
<rect x="623" y="574" width="3" height="2" fill="#FF0000"/>
<rect x="630" y="573" width="3" height="2" fill="#FF0000"/>
<rect x="637" y="572" width="3" height="3" fill="#FF0000"/>
<rect x="644" y="571" width="3" height="3" fill="#FF0000"/>
<rect x="651" y="573" width="3" height="2" fill="#FF0000"/>
<rect x="658" y="574" width="3" height="2" fill="#2EA82E"/>
<rect x="665" y="575" width="3" height="2" fill="#2EA82E"/>
<rect x="672" y="575" width="3" height="3" fill="#2EA82E"/>
<rect x="679" y="575" width="3" height="5" fill="#2EA82E"/>
<rect x="686" y="576" width="3" height="7" fill="#2EA82E"/>
<rect x="693" y="577" width="3" height="8" fill="#2EA82E"/>
<rect x="700" y="578" width="3" height="9" fill="#2EA82E"/>
<rect x="707" y="580" width="3" height="9" fill="#2EA82E"/>
<rect x="714" y="580" width="3" height="12" fill="#2EA82E"/>
<rect x="721" y="582" width="3" height="14" fill="#2EA82E"/>
<rect x="728" y="584" width="3" height="15" fill="#2EA82E"/>
<rect x="735" y="585" width="3" height="18" fill="#2EA82E"/>
<rect x="742" y="588" width="3" height="20" fill="#2EA82E"/>
<rect x="749" y="590" width="3" height="21" fill="#2EA82E"/>
<rect x="756" y="592" width="3" height="21" fill="#2EA82E"/>
<rect x="763" y="596" width="3" height="22" fill="#2EA82E"/>
<rect x="770" y="598" width="3" height="24" fill="#2EA82E"/>
<rect x="777" y="601" width="3" height="24" fill="#2EA82E"/>
<rect x="784" y="604" width="3" height="26" fill="#2EA82E"/>
<rect x="791" y="606" width="3" height="29" fill="#2EA82E"/>
<rect x="798" y="609" width="3" height="30" fill="#2EA82E"/>
<rect x="805" y="612" width="3" height="25" fill="#2EA82E"/>
<rect x="812" y="614" width="3" height="22" fill="#2EA82E"/>
<rect x="819" y="617" width="3" height="19" fill="#2EA82E"/>
<rect x="826" y="619" width="3" height="18" fill="#2EA82E"/>
<rect x="833" y="620" width="3" height="19" fill="#2EA82E"/>
<rect x="840" y="623" width="3" height="19" fill="#2EA82E"/>
<rect x="847" y="625" width="3" height="22" fill="#2EA82E"/>
<rect x="854" y="628" width="3" height="26" fill="#2EA82E"/>
<rect x="861" y="630" width="3" height="26" fill="#2EA82E"/>
<rect x="868" y="633" width="3" height="28" fill="#2EA82E"/>
<rect x="875" y="636" width="3" height="27" fill="#2EA82E"/>
<rect x="882" y="640" width="3" height="25" fill="#2EA82E"/>
<rect x="889" y="642" width="3" height="24" fill="#2EA82E"/>
<rect x="896" y="645" width="3" height="23" fill="#2EA82E"/>
<rect x="903" y="647" width="3" height="21" fill="#2EA82E"/>
<rect x="910" y="649" width="3" height="17" fill="#2EA82E"/>
<rect x="917" y="650" width="3" height="13" fill="#2EA82E"/>
<rect x="924" y="651" width="3" height="10" fill="#2EA82E"/>
<rect x="931" y="652" width="3" height="9" fill="#2EA82E"/>
<rect x="938" y="654" width="3" height="5" fill="#2EA82E"/>
<rect x="945" y="653" width="3" height="3" fill="#2EA82E"/>
<rect x="952" y="652" width="3" height="2" fill="#FF0000"/>
<rect x="959" y="649" width="3" height="5" fill="#FF0000"/>
<rect x="966" y="647" width="3" height="6" fill="#FF0000"/>
<rect x="973" y="646" width="3" height="6" fill="#FF0000"/>
<rect x="980" y="644" width="3" height="8" fill="#FF0000"/>
<rect x="987" y="641" width="3" height="10" fill="#FF0000"/>
<rect x="994" y="639" width="3" height="10" fill="#FF0000"/>
<rect x="1001" y="636" width="3" height="12" fill="#FF0000"/>
<rect x="1008" y="632" width="3" height="14" fill="#FF0000"/>
<rect x="1015" y="626" width="3" height="19" fill="#FF0000"/>
<rect x="1022" y="623" width="3" height="20" fill="#FF0000"/>
<rect x="1029" y="623" width="3" height="18" fill="#FF0000"/>
<rect x="1036" y="622" width="3" height="17" fill="#FF0000"/>
<rect x="1043" y="622" width="3" height="15" fill="#FF0000"/>
<rect x="1050" y="624" width="3" height="12" fill="#FF0000"/>
<rect x="1057" y="628" width="3" height="7" fill="#FF0000"/>
<rect x="1064" y="630" width="3" height="5" fill="#FF0000"/>
<rect x="1071" y="630" width="3" height="4" fill="#FF0000"/>
<rect x="1078" y="630" width="3" height="4" fill="#FF0000"/>
<rect x="1085" y="629" width="3" height="5" fill="#FF0000"/>
<rect x="1092" y="630" width="3" height="3" fill="#FF0000"/>
<rect x="1099" y="629" width="3" height="4" fill="#FF0000"/>
<rect x="1106" y="627" width="3" height="6" fill="#FF0000"/>
<rect x="1113" y="622" width="3" height="13" fill="#FF0000"/>
<rect x="1120" y="624" width="3" height="7" fill="#FF0000"/>
<rect x="1127" y="626" width="3" height="4" fill="#FF0000"/>
<rect x="1134" y="627" width="3" height="3" fill="#FF0000"/>
<rect x="1141" y="630" width="3" height="2" fill="#2EA82E"/>
<rect x="1148" y="628" width="3" height="2" fill="#FF0000"/>
<rect x="1155" y="627" width="3" height="3" fill="#FF0000"/>
<rect x="1162" y="629" width="3" height="2" fill="#2EA82E"/>
<rect x="1169" y="629" width="3" height="2" fill="#2EA82E"/>
<rect x="1176" y="630" width="3" height="5" fill="#2EA82E"/>
<rect x="1183" y="630" width="3" height="5" fill="#2EA82E"/>
<rect x="1190" y="631" width="3" height="7" fill="#2EA82E"/>
<rect x="1197" y="632" width="3" height="12" fill="#2EA82E"/>
<rect x="1204" y="634" width="3" height="17" fill="#2EA82E"/>
<rect x="1211" y="637" width="3" height="20" fill="#2EA82E"/>
<rect x="1218" y="639" width="3" height="21" fill="#2EA82E"/>
<rect x="1225" y="641" width="3" height="22" fill="#2EA82E"/>
<rect x="1232" y="643" width="3" height="23" fill="#2EA82E"/>
<rect x="1239" y="645" width="3" height="24" fill="#2EA82E"/>
<rect x="1246" y="646" width="3" height="11" fill="#2EA82E"/>
<rect x="1253" y="647" width="3" height="8" fill="#2EA82E"/>
<rect x="1260" y="647" width="3" height="2" fill="#2EA82E"/>
<rect x="1267" y="646" width="3" height="2" fill="#FF0000"/>
<rect x="1274" y="642" width="3" height="5" fill="#FF0000"/>
<rect x="1281" y="639" width="3" height="8" fill="#FF0000"/>
<rect x="1288" y="636" width="3" height="10" fill="#FF0000"/>
<rect x="1295" y="634" width="3" height="11" fill="#FF0000"/>
<rect x="1302" y="629" width="3" height="14" fill="#FF0000"/>
<rect x="1309" y="624" width="3" height="17" fill="#FF0000"/>
<rect x="1316" y="620" width="3" height="19" fill="#FF0000"/>
<rect x="1323" y="620" width="3" height="17" fill="#FF0000"/>
<rect x="1330" y="623" width="3" height="13" fill="#FF0000"/>
<rect x="1337" y="628" width="3" height="8" fill="#FF0000"/>
<rect x="1344" y="633" width="3" height="2" fill="#FF0000"/>
<rect x="1351" y="633" width="3" height="2" fill="#FF0000"/>
<rect x="1358" y="632" width="3" height="3" fill="#FF0000"/>
<rect x="1365" y="633" width="3" height="2" fill="#FF0000"/>
<rect x="1372" y="634" width="3" height="2" fill="#2EA82E"/>
<rect x="1379" y="631" width="3" height="4" fill="#FF0000"/>
<rect x="1386" y="628" width="3" height="6" fill="#FF0000"/>
<rect x="1393" y="628" width="3" height="4" fill="#FF0000"/>
<rect x="1400" y="632" width="3" height="3" fill="#2EA82E"/>
<rect x="1407" y="634" width="3" height="8" fill="#2EA82E"/>
<rect x="1414" y="635" width="3" height="11" fill="#2EA82E"/>
<rect x="1421" y="636" width="3" height="11" fill="#2EA82E"/>
<rect x="1428" y="637" width="3" height="9" fill="#2EA82E"/>
<rect x="1435" y="637" width="3" height="3" fill="#2EA82E"/>
<rect x="1442" y="634" width="3" height="8" fill="#FF0000"/>
<rect x="1449" y="633" width="3" height="4" fill="#FF0000"/>
<rect x="1456" y="633" width="3" height="3" fill="#FF0000"/>
<rect x="1463" y="634" width="3" height="2" fill="#FF0000"/>
<rect x="1470" y="632" width="3" height="4" fill="#FF0000"/>
<rect x="1477" y="635" width="3" height="2" fill="#2EA82E"/>
<rect x="1484" y="630" width="3" height="6" fill="#FF0000"/>
<rect x="1491" y="626" width="3" height="9" fill="#FF0000"/>
<rect x="1498" y="620" width="3" height="13" fill="#FF0000"/>
<rect x="1505" y="612" width="3" height="20" fill="#FF0000"/>
<rect x="1512" y="606" width="3" height="22" fill="#FF0000"/>
<rect x="1519" y="602" width="3" height="25" fill="#FF0000"/>
<rect x="1526" y="604" width="3" height="20" fill="#FF0000"/>
<rect x="1533" y="606" width="3" height="17" fill="#FF0000"/>
<rect x="1540" y="606" width="3" height="15" fill="#FF0000"/>
</g>
<g transform="translate(121.4,670.6)"><circle r="6.3" fill="#fff" stroke="#FF0000" stroke-width="1.2"/><circle cx="-2.3" cy="-2" r="1.05" fill="#FF0000"/><circle cx="2.3" cy="-2" r="1.05" fill="#FF0000"/><path d="M-3.6 1.2Q0 5.6 3.6 1.2" fill="none" stroke="#FF0000" stroke-width="1.1"/></g>
<g transform="translate(184.7,672.8)"><circle r="6.3" fill="#fff" stroke="#FF0000" stroke-width="1.2"/><circle cx="-2.3" cy="-2" r="1.05" fill="#FF0000"/><circle cx="2.3" cy="-2" r="1.05" fill="#FF0000"/><path d="M-3.6 1.2Q0 5.6 3.6 1.2" fill="none" stroke="#FF0000" stroke-width="1.1"/></g>
<g transform="translate(233.6,673.9)"><circle r="6.3" fill="#fff" stroke="#FF0000" stroke-width="1.2"/><circle cx="-2.3" cy="-2" r="1.05" fill="#FF0000"/><circle cx="2.3" cy="-2" r="1.05" fill="#FF0000"/><path d="M-3.6 1.2Q0 5.6 3.6 1.2" fill="none" stroke="#FF0000" stroke-width="1.1"/></g>
<g transform="translate(254.6,672.8)"><circle r="6.3" fill="#fff" stroke="#FF0000" stroke-width="1.2"/><circle cx="-2.3" cy="-2" r="1.05" fill="#FF0000"/><circle cx="2.3" cy="-2" r="1.05" fill="#FF0000"/><path d="M-3.6 1.2Q0 5.6 3.6 1.2" fill="none" stroke="#FF0000" stroke-width="1.1"/></g>
<g transform="translate(814.5,673.2)"><circle r="6.3" fill="#fff" stroke="#FF0000" stroke-width="1.2"/><circle cx="-2.3" cy="-2" r="1.05" fill="#FF0000"/><circle cx="2.3" cy="-2" r="1.05" fill="#FF0000"/><path d="M-3.6 1.2Q0 5.6 3.6 1.2" fill="none" stroke="#FF0000" stroke-width="1.1"/></g>
<g transform="translate(898.5,672.4)"><circle r="6.3" fill="#fff" stroke="#FF0000" stroke-width="1.2"/><circle cx="-2.3" cy="-2" r="1.05" fill="#FF0000"/><circle cx="2.3" cy="-2" r="1.05" fill="#FF0000"/><path d="M-3.6 1.2Q0 5.6 3.6 1.2" fill="none" stroke="#FF0000" stroke-width="1.1"/></g>
<g transform="translate(912.4,671.9)"><circle r="6.3" fill="#fff" stroke="#FF0000" stroke-width="1.2"/><circle cx="-2.3" cy="-2" r="1.05" fill="#FF0000"/><circle cx="2.3" cy="-2" r="1.05" fill="#FF0000"/><path d="M-3.6 1.2Q0 5.6 3.6 1.2" fill="none" stroke="#FF0000" stroke-width="1.1"/></g>
<g transform="translate(1122.2,649.4)"><circle r="6.3" fill="#fff" stroke="#FF0000" stroke-width="1.2"/><circle cx="-2.3" cy="-2" r="1.05" fill="#FF0000"/><circle cx="2.3" cy="-2" r="1.05" fill="#FF0000"/><path d="M-3.6 1.2Q0 5.6 3.6 1.2" fill="none" stroke="#FF0000" stroke-width="1.1"/></g>
<g transform="translate(1164.2,660.5)"><circle r="6.3" fill="#fff" stroke="#FF0000" stroke-width="1.2"/><circle cx="-2.3" cy="-2" r="1.05" fill="#FF0000"/><circle cx="2.3" cy="-2" r="1.05" fill="#FF0000"/><path d="M-3.6 1.2Q0 5.6 3.6 1.2" fill="none" stroke="#FF0000" stroke-width="1.1"/></g>
<g transform="translate(1248.2,668.4)"><circle r="6.3" fill="#fff" stroke="#FF0000" stroke-width="1.2"/><circle cx="-2.3" cy="-2" r="1.05" fill="#FF0000"/><circle cx="2.3" cy="-2" r="1.05" fill="#FF0000"/><path d="M-3.6 1.2Q0 5.6 3.6 1.2" fill="none" stroke="#FF0000" stroke-width="1.1"/></g>
<g transform="translate(1395.4,638.5)"><circle r="6.3" fill="#fff" stroke="#FF0000" stroke-width="1.2"/><circle cx="-2.3" cy="-2" r="1.05" fill="#FF0000"/><circle cx="2.3" cy="-2" r="1.05" fill="#FF0000"/><path d="M-3.6 1.2Q0 5.6 3.6 1.2" fill="none" stroke="#FF0000" stroke-width="1.1"/></g>
<g transform="translate(1444.2,654.5)"><circle r="6.3" fill="#fff" stroke="#FF0000" stroke-width="1.2"/><circle cx="-2.3" cy="-2" r="1.05" fill="#FF0000"/><circle cx="2.3" cy="-2" r="1.05" fill="#FF0000"/><path d="M-3.6 1.2Q0 5.6 3.6 1.2" fill="none" stroke="#FF0000" stroke-width="1.1"/></g>
<g transform="translate(1479.1,651.2)"><circle r="6.3" fill="#fff" stroke="#FF0000" stroke-width="1.2"/><circle cx="-2.3" cy="-2" r="1.05" fill="#FF0000"/><circle cx="2.3" cy="-2" r="1.05" fill="#FF0000"/><path d="M-3.6 1.2Q0 5.6 3.6 1.2" fill="none" stroke="#FF0000" stroke-width="1.1"/></g>
<g transform="translate(1493.5,647.4)"><circle r="6.3" fill="#fff" stroke="#FF0000" stroke-width="1.2"/><circle cx="-2.3" cy="-2" r="1.05" fill="#FF0000"/><circle cx="2.3" cy="-2" r="1.05" fill="#FF0000"/><path d="M-3.6 1.2Q0 5.6 3.6 1.2" fill="none" stroke="#FF0000" stroke-width="1.1"/></g>
<g shape-rendering="crispEdges">
<rect x="63" y="752" width="2" height="30" fill="#6200C6"/>
<rect x="70" y="752" width="2" height="33" fill="#6200C6"/>
<rect x="77" y="752" width="2" height="36" fill="#6200C6"/>
<rect x="84" y="752" width="2" height="39" fill="#6200C6"/>
<rect x="91" y="752" width="2" height="41" fill="#6200C6"/>
<rect x="98" y="752" width="2" height="42" fill="#6200C6"/>
<rect x="105" y="752" width="2" height="43" fill="#6200C6"/>
<rect x="112" y="752" width="2" height="36" fill="#6200C6"/>
<rect x="112" y="788" width="2" height="4" fill="#7FFFD4"/>
<rect x="119" y="752" width="2" height="34" fill="#6200C6"/>
<rect x="119" y="786" width="2" height="3" fill="#7FFFD4"/>
<rect x="126" y="752" width="2" height="34" fill="#6200C6"/>
<rect x="126" y="786" width="2" height="2" fill="#7FFFD4"/>
<rect x="133" y="752" width="2" height="36" fill="#6200C6"/>
<rect x="140" y="752" width="2" height="37" fill="#6200C6"/>
<rect x="147" y="752" width="2" height="39" fill="#6200C6"/>
<rect x="154" y="752" width="2" height="43" fill="#6200C6"/>
<rect x="161" y="752" width="2" height="43" fill="#6200C6"/>
<rect x="168" y="752" width="2" height="43" fill="#6200C6"/>
<rect x="175" y="752" width="2" height="42" fill="#6200C6"/>
<rect x="182" y="752" width="2" height="42" fill="#6200C6"/>
<rect x="189" y="752" width="2" height="41" fill="#6200C6"/>
<rect x="189" y="793" width="2" height="1" fill="#7FFFD4"/>
<rect x="196" y="752" width="2" height="43" fill="#6200C6"/>
<rect x="203" y="752" width="2" height="48" fill="#6200C6"/>
<rect x="210" y="752" width="2" height="50" fill="#6200C6"/>
<rect x="217" y="752" width="2" height="52" fill="#6200C6"/>
<rect x="224" y="752" width="2" height="53" fill="#6200C6"/>
<rect x="231" y="752" width="2" height="54" fill="#6200C6"/>
<rect x="238" y="752" width="2" height="56" fill="#6200C6"/>
<rect x="245" y="752" width="2" height="49" fill="#6200C6"/>
<rect x="245" y="801" width="2" height="4" fill="#7FFFD4"/>
<rect x="252" y="752" width="2" height="46" fill="#6200C6"/>
<rect x="252" y="798" width="2" height="4" fill="#7FFFD4"/>
<rect x="259" y="752" width="2" height="47" fill="#6200C6"/>
<rect x="259" y="799" width="2" height="2" fill="#7FFFD4"/>
<rect x="266" y="752" width="2" height="42" fill="#6200C6"/>
<rect x="266" y="794" width="2" height="4" fill="#7FFFD4"/>
<rect x="273" y="752" width="2" height="36" fill="#6200C6"/>
<rect x="273" y="788" width="2" height="6" fill="#7FFFD4"/>
<rect x="280" y="752" width="2" height="28" fill="#6200C6"/>
<rect x="280" y="780" width="2" height="8" fill="#7FFFD4"/>
<rect x="287" y="752" width="2" height="27" fill="#6200C6"/>
<rect x="287" y="779" width="2" height="5" fill="#7FFFD4"/>
<rect x="294" y="752" width="2" height="25" fill="#6200C6"/>
<rect x="294" y="777" width="2" height="4" fill="#7FFFD4"/>
<rect x="301" y="752" width="2" height="13" fill="#6200C6"/>
<rect x="301" y="765" width="2" height="10" fill="#7FFFD4"/>
<rect x="308" y="752" width="2" height="5" fill="#6200C6"/>
<rect x="308" y="757" width="2" height="10" fill="#7FFFD4"/>
<rect x="315" y="745" width="2" height="7" fill="#FF0000"/>
<rect x="315" y="752" width="2" height="9" fill="#7FFFD4"/>
<rect x="322" y="737" width="2" height="15" fill="#FF0000"/>
<rect x="329" y="733" width="2" height="19" fill="#FF0000"/>
<rect x="336" y="731" width="2" height="21" fill="#FF0000"/>
<rect x="343" y="730" width="2" height="22" fill="#FF0000"/>
<rect x="350" y="733" width="2" height="19" fill="#FF0000"/>
<rect x="350" y="731" width="2" height="2" fill="#FFFFFF"/>
<rect x="357" y="732" width="2" height="20" fill="#FF0000"/>
<rect x="364" y="732" width="2" height="20" fill="#FF0000"/>
<rect x="371" y="733" width="2" height="19" fill="#FF0000"/>
<rect x="371" y="732" width="2" height="1" fill="#FFFFFF"/>
<rect x="378" y="736" width="2" height="16" fill="#FF0000"/>
<rect x="378" y="734" width="2" height="2" fill="#FFFFFF"/>
<rect x="385" y="732" width="2" height="20" fill="#FF0000"/>
<rect x="392" y="728" width="2" height="24" fill="#FF0000"/>
<rect x="399" y="724" width="2" height="28" fill="#FF0000"/>
<rect x="406" y="722" width="2" height="30" fill="#FF0000"/>
<rect x="413" y="716" width="2" height="36" fill="#FF0000"/>
<rect x="420" y="713" width="2" height="39" fill="#FF0000"/>
<rect x="427" y="713" width="2" height="39" fill="#FF0000"/>
<rect x="434" y="711" width="2" height="41" fill="#FF0000"/>
<rect x="441" y="708" width="2" height="44" fill="#FF0000"/>
<rect x="448" y="707" width="2" height="45" fill="#FF0000"/>
<rect x="455" y="707" width="2" height="45" fill="#FF0000"/>
<rect x="462" y="708" width="2" height="44" fill="#FF0000"/>
<rect x="469" y="712" width="2" height="40" fill="#FF0000"/>
<rect x="469" y="710" width="2" height="2" fill="#FFFFFF"/>
<rect x="476" y="712" width="2" height="40" fill="#FF0000"/>
<rect x="476" y="711" width="2" height="1" fill="#FFFFFF"/>
<rect x="483" y="717" width="2" height="35" fill="#FF0000"/>
<rect x="483" y="714" width="2" height="3" fill="#FFFFFF"/>
<rect x="490" y="717" width="2" height="35" fill="#FF0000"/>
<rect x="490" y="716" width="2" height="1" fill="#FFFFFF"/>
<rect x="497" y="724" width="2" height="28" fill="#FF0000"/>
<rect x="497" y="720" width="2" height="4" fill="#FFFFFF"/>
<rect x="504" y="720" width="2" height="32" fill="#FF0000"/>
<rect x="511" y="721" width="2" height="31" fill="#FF0000"/>
<rect x="511" y="720" width="2" height="1" fill="#FFFFFF"/>
<rect x="518" y="720" width="2" height="32" fill="#FF0000"/>
<rect x="525" y="721" width="2" height="31" fill="#FF0000"/>
<rect x="525" y="720" width="2" height="1" fill="#FFFFFF"/>
<rect x="532" y="722" width="2" height="30" fill="#FF0000"/>
<rect x="532" y="721" width="2" height="1" fill="#FFFFFF"/>
<rect x="539" y="721" width="2" height="31" fill="#FF0000"/>
<rect x="546" y="717" width="2" height="35" fill="#FF0000"/>
<rect x="553" y="713" width="2" height="39" fill="#FF0000"/>
<rect x="560" y="710" width="2" height="42" fill="#FF0000"/>
<rect x="567" y="707" width="2" height="45" fill="#FF0000"/>
<rect x="574" y="705" width="2" height="47" fill="#FF0000"/>
<rect x="581" y="704" width="2" height="48" fill="#FF0000"/>
<rect x="588" y="703" width="2" height="49" fill="#FF0000"/>
<rect x="595" y="701" width="2" height="51" fill="#FF0000"/>
<rect x="602" y="701" width="2" height="51" fill="#FF0000"/>
<rect x="609" y="703" width="2" height="49" fill="#FF0000"/>
<rect x="609" y="702" width="2" height="1" fill="#FFFFFF"/>
<rect x="616" y="704" width="2" height="48" fill="#FF0000"/>
<rect x="616" y="703" width="2" height="1" fill="#FFFFFF"/>
<rect x="623" y="705" width="2" height="47" fill="#FF0000"/>
<rect x="623" y="704" width="2" height="1" fill="#FFFFFF"/>
<rect x="630" y="705" width="2" height="47" fill="#FF0000"/>
<rect x="630" y="704" width="2" height="1" fill="#FFFFFF"/>
<rect x="637" y="702" width="2" height="50" fill="#FF0000"/>
<rect x="644" y="699" width="2" height="53" fill="#FF0000"/>
<rect x="651" y="706" width="2" height="46" fill="#FF0000"/>
<rect x="651" y="702" width="2" height="4" fill="#FFFFFF"/>
<rect x="658" y="710" width="2" height="42" fill="#FF0000"/>
<rect x="658" y="706" width="2" height="4" fill="#FFFFFF"/>
<rect x="665" y="711" width="2" height="41" fill="#FF0000"/>
<rect x="665" y="709" width="2" height="2" fill="#FFFFFF"/>
<rect x="672" y="713" width="2" height="39" fill="#FF0000"/>
<rect x="672" y="711" width="2" height="2" fill="#FFFFFF"/>
<rect x="679" y="719" width="2" height="33" fill="#FF0000"/>
<rect x="679" y="715" width="2" height="4" fill="#FFFFFF"/>
<rect x="686" y="728" width="2" height="24" fill="#FF0000"/>
<rect x="686" y="721" width="2" height="7" fill="#FFFFFF"/>
<rect x="693" y="731" width="2" height="21" fill="#FF0000"/>
<rect x="693" y="726" width="2" height="5" fill="#FFFFFF"/>
<rect x="700" y="734" width="2" height="18" fill="#FF0000"/>
<rect x="700" y="730" width="2" height="4" fill="#FFFFFF"/>
<rect x="707" y="735" width="2" height="17" fill="#FF0000"/>
<rect x="707" y="732" width="2" height="3" fill="#FFFFFF"/>
<rect x="714" y="738" width="2" height="14" fill="#FF0000"/>
<rect x="714" y="735" width="2" height="3" fill="#FFFFFF"/>
<rect x="721" y="743" width="2" height="9" fill="#FF0000"/>
<rect x="721" y="739" width="2" height="4" fill="#FFFFFF"/>
<rect x="728" y="744" width="2" height="8" fill="#FF0000"/>
<rect x="728" y="742" width="2" height="2" fill="#FFFFFF"/>
<rect x="735" y="750" width="2" height="2" fill="#FF0000"/>
<rect x="735" y="746" width="2" height="4" fill="#FFFFFF"/>
<rect x="742" y="750" width="2" height="2" fill="#FF0000"/>
<rect x="742" y="748" width="2" height="2" fill="#FFFFFF"/>
<rect x="749" y="752" width="2" height="0" fill="#FF0000"/>
<rect x="756" y="752" width="2" height="0" fill="#FF0000"/>
<rect x="763" y="752" width="2" height="6" fill="#6200C6"/>
<rect x="770" y="752" width="2" height="9" fill="#6200C6"/>
<rect x="777" y="752" width="2" height="11" fill="#6200C6"/>
<rect x="784" y="752" width="2" height="15" fill="#6200C6"/>
<rect x="791" y="752" width="2" height="17" fill="#6200C6"/>
<rect x="798" y="752" width="2" height="21" fill="#6200C6"/>
<rect x="805" y="752" width="2" height="17" fill="#6200C6"/>
<rect x="805" y="769" width="2" height="2" fill="#7FFFD4"/>
<rect x="812" y="752" width="2" height="15" fill="#6200C6"/>
<rect x="812" y="767" width="2" height="2" fill="#7FFFD4"/>
<rect x="819" y="752" width="2" height="13" fill="#6200C6"/>
<rect x="819" y="765" width="2" height="3" fill="#7FFFD4"/>
<rect x="826" y="752" width="2" height="14" fill="#6200C6"/>
<rect x="826" y="766" width="2" height="1" fill="#7FFFD4"/>
<rect x="833" y="752" width="2" height="13" fill="#6200C6"/>
<rect x="833" y="765" width="2" height="1" fill="#7FFFD4"/>
<rect x="840" y="752" width="2" height="15" fill="#6200C6"/>
<rect x="847" y="752" width="2" height="17" fill="#6200C6"/>
<rect x="854" y="752" width="2" height="21" fill="#6200C6"/>
<rect x="861" y="752" width="2" height="23" fill="#6200C6"/>
<rect x="868" y="752" width="2" height="26" fill="#6200C6"/>
<rect x="875" y="752" width="2" height="26" fill="#6200C6"/>
<rect x="882" y="752" width="2" height="27" fill="#6200C6"/>
<rect x="889" y="752" width="2" height="28" fill="#6200C6"/>
<rect x="896" y="752" width="2" height="30" fill="#6200C6"/>
<rect x="903" y="752" width="2" height="30" fill="#6200C6"/>
<rect x="910" y="752" width="2" height="22" fill="#6200C6"/>
<rect x="910" y="774" width="2" height="4" fill="#7FFFD4"/>
<rect x="917" y="752" width="2" height="18" fill="#6200C6"/>
<rect x="917" y="770" width="2" height="5" fill="#7FFFD4"/>
<rect x="924" y="752" width="2" height="17" fill="#6200C6"/>
<rect x="924" y="769" width="2" height="4" fill="#7FFFD4"/>
<rect x="931" y="752" width="2" height="17" fill="#6200C6"/>
<rect x="931" y="769" width="2" height="2" fill="#7FFFD4"/>
<rect x="938" y="752" width="2" height="15" fill="#6200C6"/>
<rect x="938" y="767" width="2" height="2" fill="#7FFFD4"/>
<rect x="945" y="752" width="2" height="7" fill="#6200C6"/>
<rect x="945" y="759" width="2" height="6" fill="#7FFFD4"/>
<rect x="952" y="752" width="2" height="5" fill="#6200C6"/>
<rect x="952" y="757" width="2" height="5" fill="#7FFFD4"/>
<rect x="959" y="752" width="2" height="3" fill="#6200C6"/>
<rect x="959" y="755" width="2" height="4" fill="#7FFFD4"/>
<rect x="966" y="752" width="2" height="3" fill="#7FFFD4"/>
<rect x="973" y="752" width="2" height="3" fill="#6200C6"/>
<rect x="980" y="751" width="2" height="1" fill="#FF0000"/>
<rect x="980" y="752" width="2" height="1" fill="#7FFFD4"/>
<rect x="987" y="749" width="2" height="3" fill="#FF0000"/>
<rect x="994" y="749" width="2" height="3" fill="#FF0000"/>
<rect x="1001" y="748" width="2" height="4" fill="#FF0000"/>
<rect x="1008" y="747" width="2" height="5" fill="#FF0000"/>
<rect x="1015" y="745" width="2" height="7" fill="#FF0000"/>
<rect x="1022" y="743" width="2" height="9" fill="#FF0000"/>
<rect x="1029" y="745" width="2" height="7" fill="#FF0000"/>
<rect x="1029" y="744" width="2" height="1" fill="#FFFFFF"/>
<rect x="1036" y="746" width="2" height="6" fill="#FF0000"/>
<rect x="1036" y="745" width="2" height="1" fill="#FFFFFF"/>
<rect x="1043" y="748" width="2" height="4" fill="#FF0000"/>
<rect x="1043" y="747" width="2" height="1" fill="#FFFFFF"/>
<rect x="1050" y="751" width="2" height="1" fill="#FF0000"/>
<rect x="1050" y="749" width="2" height="2" fill="#FFFFFF"/>
<rect x="1057" y="752" width="2" height="1" fill="#6200C6"/>
<rect x="1064" y="752" width="2" height="4" fill="#6200C6"/>
<rect x="1071" y="752" width="2" height="5" fill="#6200C6"/>
<rect x="1078" y="752" width="2" height="6" fill="#6200C6"/>
<rect x="1085" y="752" width="2" height="6" fill="#6200C6"/>
<rect x="1092" y="752" width="2" height="8" fill="#6200C6"/>
<rect x="1099" y="752" width="2" height="4" fill="#6200C6"/>
<rect x="1099" y="756" width="2" height="2" fill="#7FFFD4"/>
<rect x="1106" y="752" width="2" height="6" fill="#6200C6"/>
<rect x="1113" y="752" width="2" height="1" fill="#6200C6"/>
<rect x="1113" y="753" width="2" height="3" fill="#7FFFD4"/>
<rect x="1120" y="752" width="2" height="4" fill="#6200C6"/>
<rect x="1127" y="752" width="2" height="6" fill="#6200C6"/>
<rect x="1134" y="752" width="2" height="7" fill="#6200C6"/>
<rect x="1141" y="752" width="2" height="8" fill="#6200C6"/>
<rect x="1148" y="752" width="2" height="5" fill="#6200C6"/>
<rect x="1148" y="757" width="2" height="2" fill="#7FFFD4"/>
<rect x="1155" y="752" width="2" height="4" fill="#6200C6"/>
<rect x="1155" y="756" width="2" height="2" fill="#7FFFD4"/>
<rect x="1162" y="752" width="2" height="8" fill="#6200C6"/>
<rect x="1169" y="752" width="2" height="8" fill="#6200C6"/>
<rect x="1176" y="752" width="2" height="10" fill="#6200C6"/>
<rect x="1183" y="752" width="2" height="10" fill="#6200C6"/>
<rect x="1190" y="752" width="2" height="11" fill="#6200C6"/>
<rect x="1197" y="752" width="2" height="13" fill="#6200C6"/>
<rect x="1204" y="752" width="2" height="17" fill="#6200C6"/>
<rect x="1211" y="752" width="2" height="21" fill="#6200C6"/>
<rect x="1218" y="752" width="2" height="23" fill="#6200C6"/>
<rect x="1225" y="752" width="2" height="27" fill="#6200C6"/>
<rect x="1232" y="752" width="2" height="28" fill="#6200C6"/>
<rect x="1239" y="752" width="2" height="23" fill="#6200C6"/>
<rect x="1239" y="775" width="2" height="3" fill="#7FFFD4"/>
<rect x="1246" y="752" width="2" height="21" fill="#6200C6"/>
<rect x="1246" y="773" width="2" height="3" fill="#7FFFD4"/>
<rect x="1253" y="752" width="2" height="19" fill="#6200C6"/>
<rect x="1253" y="771" width="2" height="3" fill="#7FFFD4"/>
<rect x="1260" y="752" width="2" height="16" fill="#6200C6"/>
<rect x="1260" y="768" width="2" height="3" fill="#7FFFD4"/>
<rect x="1267" y="752" width="2" height="13" fill="#6200C6"/>
<rect x="1267" y="765" width="2" height="4" fill="#7FFFD4"/>
<rect x="1274" y="752" width="2" height="9" fill="#6200C6"/>
<rect x="1274" y="761" width="2" height="5" fill="#7FFFD4"/>
<rect x="1281" y="752" width="2" height="7" fill="#6200C6"/>
<rect x="1281" y="759" width="2" height="4" fill="#7FFFD4"/>
<rect x="1288" y="752" width="2" height="6" fill="#6200C6"/>
<rect x="1288" y="758" width="2" height="3" fill="#7FFFD4"/>
<rect x="1295" y="752" width="2" height="5" fill="#6200C6"/>
<rect x="1295" y="757" width="2" height="2" fill="#7FFFD4"/>
<rect x="1302" y="752" width="2" height="3" fill="#7FFFD4"/>
<rect x="1309" y="750" width="2" height="2" fill="#FF0000"/>
<rect x="1309" y="752" width="2" height="2" fill="#7FFFD4"/>
<rect x="1316" y="748" width="2" height="4" fill="#FF0000"/>
<rect x="1323" y="749" width="2" height="3" fill="#FF0000"/>
<rect x="1323" y="748" width="2" height="1" fill="#FFFFFF"/>
<rect x="1330" y="752" width="2" height="0" fill="#FF0000"/>
<rect x="1330" y="751" width="2" height="1" fill="#FFFFFF"/>
<rect x="1337" y="752" width="2" height="2" fill="#6200C6"/>
<rect x="1344" y="752" width="2" height="5" fill="#6200C6"/>
<rect x="1351" y="752" width="2" height="6" fill="#6200C6"/>
<rect x="1358" y="752" width="2" height="6" fill="#6200C6"/>
<rect x="1365" y="752" width="2" height="7" fill="#6200C6"/>
<rect x="1372" y="752" width="2" height="8" fill="#6200C6"/>
<rect x="1379" y="752" width="2" height="4" fill="#6200C6"/>
<rect x="1379" y="756" width="2" height="2" fill="#7FFFD4"/>
<rect x="1386" y="752" width="2" height="4" fill="#6200C6"/>
<rect x="1386" y="756" width="2" height="2" fill="#7FFFD4"/>
<rect x="1393" y="752" width="2" height="6" fill="#6200C6"/>
<rect x="1400" y="752" width="2" height="9" fill="#6200C6"/>
<rect x="1407" y="752" width="2" height="12" fill="#6200C6"/>
<rect x="1414" y="752" width="2" height="14" fill="#6200C6"/>
<rect x="1421" y="752" width="2" height="15" fill="#6200C6"/>
<rect x="1428" y="752" width="2" height="12" fill="#6200C6"/>
<rect x="1428" y="764" width="2" height="2" fill="#7FFFD4"/>
<rect x="1435" y="752" width="2" height="6" fill="#6200C6"/>
<rect x="1435" y="758" width="2" height="4" fill="#7FFFD4"/>
<rect x="1442" y="752" width="2" height="4" fill="#6200C6"/>
<rect x="1442" y="756" width="2" height="4" fill="#7FFFD4"/>
<rect x="1449" y="752" width="2" height="8" fill="#6200C6"/>
<rect x="1456" y="752" width="2" height="6" fill="#6200C6"/>
<rect x="1456" y="758" width="2" height="1" fill="#7FFFD4"/>
<rect x="1463" y="752" width="2" height="7" fill="#6200C6"/>
<rect x="1470" y="752" width="2" height="5" fill="#6200C6"/>
<rect x="1470" y="757" width="2" height="1" fill="#7FFFD4"/>
<rect x="1477" y="752" width="2" height="6" fill="#6200C6"/>
<rect x="1484" y="752" width="2" height="3" fill="#6200C6"/>
<rect x="1484" y="755" width="2" height="2" fill="#7FFFD4"/>
<rect x="1491" y="752" width="2" height="1" fill="#6200C6"/>
<rect x="1491" y="753" width="2" height="2" fill="#7FFFD4"/>
<rect x="1498" y="750" width="2" height="2" fill="#FF0000"/>
<rect x="1498" y="752" width="2" height="2" fill="#7FFFD4"/>
<rect x="1505" y="746" width="2" height="6" fill="#FF0000"/>
<rect x="1512" y="743" width="2" height="9" fill="#FF0000"/>
<rect x="1519" y="740" width="2" height="12" fill="#FF0000"/>
<rect x="1526" y="742" width="2" height="10" fill="#FF0000"/>
<rect x="1526" y="741" width="2" height="1" fill="#FFFFFF"/>
<rect x="1533" y="743" width="2" height="9" fill="#FF0000"/>
<rect x="1533" y="742" width="2" height="1" fill="#FFFFFF"/>
<rect x="1540" y="743" width="2" height="9" fill="#FF0000"/>
</g>
<g shape-rendering="crispEdges">
<rect x="64" y="919" width="1" height="3" fill="#FFFF00"/>
<rect x="71" y="923" width="1" height="3" fill="#FFFF00"/>
<rect x="78" y="926" width="1" height="3" fill="#FFFF00"/>
<rect x="85" y="930" width="1" height="3" fill="#FFFF00"/>
<rect x="92" y="934" width="1" height="4" fill="#FFFF00"/>
<rect x="99" y="937" width="1" height="3" fill="#FFFF00"/>
<rect x="106" y="939" width="1" height="3" fill="#FFFF00"/>
<rect x="113" y="915" width="1" height="21" fill="#FF0000"/>
<rect x="120" y="903" width="1" height="10" fill="#FF0000"/>
<rect x="127" y="898" width="1" height="3" fill="#FF0000"/>
<rect x="134" y="901" width="1" height="5" fill="#FFFF00"/>
<rect x="141" y="906" width="1" height="3" fill="#FFFF00"/>
<rect x="148" y="910" width="1" height="4" fill="#FFFF00"/>
<rect x="155" y="915" width="1" height="4" fill="#FFFF00"/>
<rect x="162" y="917" width="1" height="3" fill="#FFFF00"/>
<rect x="169" y="918" width="1" height="3" fill="#FF0000"/>
<rect x="176" y="912" width="1" height="4" fill="#FF0000"/>
<rect x="183" y="911" width="1" height="3" fill="#FF0000"/>
<rect x="190" y="912" width="1" height="3" fill="#FFFF00"/>
<rect x="197" y="914" width="1" height="3" fill="#FFFF00"/>
<rect x="204" y="919" width="1" height="5" fill="#FFFF00"/>
<rect x="211" y="926" width="1" height="5" fill="#FFFF00"/>
<rect x="218" y="928" width="1" height="3" fill="#FFFF00"/>
<rect x="225" y="929" width="1" height="3" fill="#FF0000"/>
<rect x="232" y="929" width="1" height="3" fill="#FFFF00"/>
<rect x="239" y="931" width="1" height="3" fill="#FFFF00"/>
<rect x="246" y="921" width="1" height="9" fill="#FF0000"/>
<rect x="253" y="908" width="1" height="11" fill="#FF0000"/>
<rect x="260" y="903" width="1" height="4" fill="#FF0000"/>
<rect x="267" y="892" width="1" height="8" fill="#FF0000"/>
<rect x="274" y="882" width="1" height="8" fill="#FF0000"/>
<rect x="281" y="876" width="1" height="5" fill="#FF0000"/>
<rect x="288" y="873" width="1" height="3" fill="#FF0000"/>
<rect x="295" y="874" width="1" height="3" fill="#FFFF00"/>
<rect x="302" y="867" width="1" height="7" fill="#FF0000"/>
<rect x="309" y="861" width="1" height="5" fill="#FF0000"/>
<rect x="316" y="854" width="1" height="6" fill="#FF0000"/>
<rect x="323" y="850" width="1" height="3" fill="#FF0000"/>
<rect x="330" y="848" width="1" height="3" fill="#FFFF00"/>
<rect x="337" y="849" width="1" height="3" fill="#FFFF00"/>
<rect x="344" y="853" width="1" height="3" fill="#FFFF00"/>
<rect x="351" y="857" width="1" height="5" fill="#FFFF00"/>
<rect x="358" y="863" width="1" height="3" fill="#FFFF00"/>
<rect x="365" y="866" width="1" height="3" fill="#FFFF00"/>
<rect x="372" y="869" width="1" height="3" fill="#FFFF00"/>
<rect x="379" y="873" width="1" height="4" fill="#FFFF00"/>
<rect x="386" y="872" width="1" height="3" fill="#FF0000"/>
<rect x="393" y="865" width="1" height="6" fill="#FF0000"/>
<rect x="400" y="860" width="1" height="4" fill="#FF0000"/>
<rect x="407" y="856" width="1" height="3" fill="#FF0000"/>
<rect x="414" y="850" width="1" height="5" fill="#FF0000"/>
<rect x="421" y="845" width="1" height="3" fill="#FF0000"/>
<rect x="428" y="848" width="1" height="5" fill="#FFFF00"/>
<rect x="435" y="852" width="1" height="3" fill="#FFFF00"/>
<rect x="442" y="853" width="1" height="3" fill="#FF0000"/>
<rect x="449" y="855" width="1" height="3" fill="#FFFF00"/>
<rect x="456" y="856" width="1" height="3" fill="#FFFF00"/>
<rect x="463" y="858" width="1" height="3" fill="#FFFF00"/>
<rect x="470" y="862" width="1" height="3" fill="#FFFF00"/>
<rect x="477" y="865" width="1" height="3" fill="#FFFF00"/>
<rect x="484" y="868" width="1" height="3" fill="#FFFF00"/>
<rect x="491" y="872" width="1" height="5" fill="#FFFF00"/>
<rect x="498" y="878" width="1" height="3" fill="#FFFF00"/>
<rect x="505" y="878" width="1" height="3" fill="#FF0000"/>
<rect x="512" y="876" width="1" height="3" fill="#FF0000"/>
<rect x="519" y="872" width="1" height="3" fill="#FF0000"/>
<rect x="526" y="871" width="1" height="3" fill="#FF0000"/>
<rect x="533" y="870" width="1" height="3" fill="#FF0000"/>
<rect x="540" y="866" width="1" height="3" fill="#FF0000"/>
<rect x="547" y="858" width="1" height="7" fill="#FF0000"/>
<rect x="554" y="849" width="1" height="7" fill="#FF0000"/>
<rect x="561" y="845" width="1" height="3" fill="#FF0000"/>
<rect x="568" y="841" width="1" height="3" fill="#FF0000"/>
<rect x="575" y="838" width="1" height="3" fill="#FF0000"/>
<rect x="582" y="836" width="1" height="3" fill="#FF0000"/>
<rect x="589" y="835" width="1" height="3" fill="#FF0000"/>
<rect x="596" y="832" width="1" height="3" fill="#FF0000"/>
<rect x="603" y="830" width="1" height="3" fill="#FF0000"/>
<rect x="610" y="832" width="1" height="3" fill="#FFFF00"/>
<rect x="617" y="834" width="1" height="3" fill="#FFFF00"/>
<rect x="624" y="837" width="1" height="3" fill="#FFFF00"/>
<rect x="631" y="837" width="1" height="3" fill="#FF0000"/>
<rect x="638" y="833" width="1" height="3" fill="#FF0000"/>
<rect x="645" y="830" width="1" height="3" fill="#FF0000"/>
<rect x="652" y="834" width="1" height="13" fill="#FFFF00"/>
<rect x="659" y="850" width="1" height="11" fill="#FFFF00"/>
<rect x="666" y="862" width="1" height="4" fill="#FFFF00"/>
<rect x="673" y="867" width="1" height="5" fill="#FFFF00"/>
<rect x="680" y="874" width="1" height="7" fill="#FFFF00"/>
<rect x="687" y="883" width="1" height="10" fill="#FFFF00"/>
<rect x="694" y="894" width="1" height="5" fill="#FFFF00"/>
<rect x="701" y="900" width="1" height="3" fill="#FFFF00"/>
<rect x="708" y="899" width="1" height="3" fill="#FF0000"/>
<rect x="715" y="899" width="1" height="3" fill="#FFFF00"/>
<rect x="722" y="901" width="1" height="3" fill="#FFFF00"/>
<rect x="729" y="904" width="1" height="3" fill="#FFFF00"/>
<rect x="736" y="908" width="1" height="3" fill="#FFFF00"/>
<rect x="743" y="909" width="1" height="3" fill="#FFFF00"/>
<rect x="750" y="911" width="1" height="3" fill="#FFFF00"/>
<rect x="757" y="912" width="1" height="3" fill="#FF0000"/>
<rect x="764" y="913" width="1" height="3" fill="#FFFF00"/>
<rect x="771" y="916" width="1" height="3" fill="#FFFF00"/>
<rect x="778" y="919" width="1" height="3" fill="#FFFF00"/>
<rect x="785" y="923" width="1" height="4" fill="#FFFF00"/>
<rect x="792" y="928" width="1" height="3" fill="#FFFF00"/>
<rect x="799" y="931" width="1" height="3" fill="#FFFF00"/>
<rect x="806" y="913" width="1" height="16" fill="#FF0000"/>
<rect x="813" y="905" width="1" height="7" fill="#FF0000"/>
<rect x="820" y="898" width="1" height="6" fill="#FF0000"/>
<rect x="827" y="891" width="1" height="5" fill="#FF0000"/>
<rect x="834" y="889" width="1" height="3" fill="#FF0000"/>
<rect x="841" y="892" width="1" height="6" fill="#FFFF00"/>
<rect x="848" y="899" width="1" height="3" fill="#FFFF00"/>
<rect x="855" y="905" width="1" height="9" fill="#FFFF00"/>
<rect x="862" y="911" width="1" height="3" fill="#FF0000"/>
<rect x="869" y="912" width="1" height="3" fill="#FFFF00"/>
<rect x="876" y="911" width="1" height="3" fill="#FF0000"/>
<rect x="883" y="910" width="1" height="3" fill="#FFFF00"/>
<rect x="890" y="909" width="1" height="3" fill="#FF0000"/>
<rect x="897" y="907" width="1" height="3" fill="#FFFF00"/>
<rect x="904" y="907" width="1" height="3" fill="#FF0000"/>
<rect x="911" y="901" width="1" height="5" fill="#FF0000"/>
<rect x="918" y="891" width="1" height="8" fill="#FF0000"/>
<rect x="925" y="886" width="1" height="4" fill="#FF0000"/>
<rect x="932" y="886" width="1" height="3" fill="#FFFF00"/>
<rect x="939" y="886" width="1" height="3" fill="#FF0000"/>
<rect x="946" y="880" width="1" height="5" fill="#FF0000"/>
<rect x="953" y="874" width="1" height="5" fill="#FF0000"/>
<rect x="960" y="870" width="1" height="3" fill="#FF0000"/>
<rect x="967" y="867" width="1" height="3" fill="#FF0000"/>
<rect x="974" y="866" width="1" height="3" fill="#FFFF00"/>
<rect x="981" y="867" width="1" height="3" fill="#FF0000"/>
<rect x="988" y="865" width="1" height="3" fill="#FF0000"/>
<rect x="995" y="865" width="1" height="3" fill="#FFFF00"/>
<rect x="1002" y="866" width="1" height="3" fill="#FFFF00"/>
<rect x="1009" y="867" width="1" height="3" fill="#FF0000"/>
<rect x="1016" y="861" width="1" height="5" fill="#FF0000"/>
<rect x="1023" y="859" width="1" height="3" fill="#FFFF00"/>
<rect x="1030" y="863" width="1" height="7" fill="#FFFF00"/>
<rect x="1037" y="871" width="1" height="4" fill="#FFFF00"/>
<rect x="1044" y="877" width="1" height="9" fill="#FFFF00"/>
<rect x="1051" y="888" width="1" height="7" fill="#FFFF00"/>
<rect x="1058" y="898" width="1" height="9" fill="#FFFF00"/>
<rect x="1065" y="907" width="1" height="3" fill="#FFFF00"/>
<rect x="1072" y="908" width="1" height="3" fill="#FF0000"/>
<rect x="1079" y="907" width="1" height="3" fill="#FF0000"/>
<rect x="1086" y="905" width="1" height="3" fill="#FF0000"/>
<rect x="1093" y="905" width="1" height="3" fill="#FFFF00"/>
<rect x="1100" y="903" width="1" height="3" fill="#FF0000"/>
<rect x="1107" y="897" width="1" height="5" fill="#FF0000"/>
<rect x="1114" y="884" width="1" height="10" fill="#FF0000"/>
<rect x="1121" y="886" width="1" height="5" fill="#FFFF00"/>
<rect x="1128" y="891" width="1" height="3" fill="#FFFF00"/>
<rect x="1135" y="894" width="1" height="3" fill="#FFFF00"/>
<rect x="1142" y="898" width="1" height="3" fill="#FFFF00"/>
<rect x="1149" y="894" width="1" height="5" fill="#FF0000"/>
<rect x="1156" y="890" width="1" height="3" fill="#FF0000"/>
<rect x="1163" y="892" width="1" height="5" fill="#FFFF00"/>
<rect x="1170" y="894" width="1" height="3" fill="#FFFF00"/>
<rect x="1177" y="898" width="1" height="3" fill="#FFFF00"/>
<rect x="1184" y="898" width="1" height="3" fill="#FF0000"/>
<rect x="1191" y="898" width="1" height="3" fill="#FFFF00"/>
<rect x="1198" y="902" width="1" height="5" fill="#FFFF00"/>
<rect x="1205" y="909" width="1" height="6" fill="#FFFF00"/>
<rect x="1212" y="916" width="1" height="6" fill="#FFFF00"/>
<rect x="1219" y="922" width="1" height="3" fill="#FFFF00"/>
<rect x="1226" y="926" width="1" height="4" fill="#FFFF00"/>
<rect x="1233" y="930" width="1" height="3" fill="#FFFF00"/>
<rect x="1240" y="916" width="1" height="13" fill="#FF0000"/>
<rect x="1247" y="904" width="1" height="9" fill="#FF0000"/>
<rect x="1254" y="896" width="1" height="7" fill="#FF0000"/>
<rect x="1261" y="888" width="1" height="6" fill="#FF0000"/>
<rect x="1268" y="882" width="1" height="5" fill="#FF0000"/>
<rect x="1275" y="877" width="1" height="5" fill="#FF0000"/>
<rect x="1282" y="872" width="1" height="4" fill="#FF0000"/>
<rect x="1289" y="867" width="1" height="4" fill="#FF0000"/>
<rect x="1296" y="866" width="1" height="3" fill="#FF0000"/>
<rect x="1303" y="859" width="1" height="6" fill="#FF0000"/>
<rect x="1310" y="851" width="1" height="6" fill="#FF0000"/>
<rect x="1317" y="851" width="1" height="3" fill="#FF0000"/>
<rect x="1324" y="854" width="1" height="8" fill="#FFFF00"/>
<rect x="1331" y="864" width="1" height="13" fill="#FFFF00"/>
<rect x="1338" y="880" width="1" height="12" fill="#FFFF00"/>
<rect x="1345" y="895" width="1" height="8" fill="#FFFF00"/>
<rect x="1352" y="898" width="1" height="3" fill="#FF0000"/>
<rect x="1359" y="897" width="1" height="3" fill="#FF0000"/>
<rect x="1366" y="897" width="1" height="3" fill="#FFFF00"/>
<rect x="1373" y="900" width="1" height="3" fill="#FFFF00"/>
<rect x="1380" y="896" width="1" height="5" fill="#FF0000"/>
<rect x="1387" y="889" width="1" height="5" fill="#FF0000"/>
<rect x="1394" y="889" width="1" height="3" fill="#FFFF00"/>
<rect x="1401" y="895" width="1" height="7" fill="#FFFF00"/>
<rect x="1408" y="903" width="1" height="5" fill="#FFFF00"/>
<rect x="1415" y="908" width="1" height="3" fill="#FFFF00"/>
<rect x="1422" y="907" width="1" height="3" fill="#FF0000"/>
<rect x="1429" y="901" width="1" height="4" fill="#FF0000"/>
<rect x="1436" y="889" width="1" height="10" fill="#FF0000"/>
<rect x="1443" y="880" width="1" height="7" fill="#FF0000"/>
<rect x="1450" y="881" width="1" height="3" fill="#FFFF00"/>
<rect x="1457" y="882" width="1" height="3" fill="#FFFF00"/>
<rect x="1464" y="883" width="1" height="3" fill="#FFFF00"/>
<rect x="1471" y="884" width="1" height="3" fill="#FF0000"/>
<rect x="1478" y="886" width="1" height="5" fill="#FFFF00"/>
<rect x="1485" y="882" width="1" height="6" fill="#FF0000"/>
<rect x="1492" y="878" width="1" height="4" fill="#FF0000"/>
<rect x="1499" y="872" width="1" height="5" fill="#FF0000"/>
<rect x="1506" y="866" width="1" height="5" fill="#FF0000"/>
<rect x="1513" y="860" width="1" height="5" fill="#FF0000"/>
<rect x="1520" y="858" width="1" height="3" fill="#FF0000"/>
<rect x="1527" y="861" width="1" height="6" fill="#FFFF00"/>
<rect x="1534" y="868" width="1" height="6" fill="#FFFF00"/>
<rect x="1541" y="874" width="1" height="3" fill="#FFFF00"/>
</g>
<g shape-rendering="crispEdges">
<rect x="0" y="18" width="1657" height="1" fill="#C8140A"/>
<rect x="0" y="426" width="1657" height="1" fill="#C8140A"/>
<rect x="0" y="553" width="1657" height="1" fill="#C8140A"/>
<rect x="0" y="682" width="1657" height="1" fill="#C8140A"/>
<rect x="0" y="811" width="1657" height="1" fill="#C8140A"/>
<rect x="0" y="945" width="1657" height="1" fill="#C8140A"/>
<rect x="61" y="18" width="1" height="943" fill="#C8140A"/>
<rect x="1657" y="0" width="1" height="961" fill="#C8140A"/>
<rect x="0.5" y="812" width="60.5" height="133" fill="none" stroke="#D81408" stroke-width="2"/>
<rect x="0" y="811" width="62" height="2" fill="#D81408"/>
<rect x="0" y="811" width="1" height="135" fill="#D81408"/>
<rect x="1657" y="24" width="241" height="1" fill="#C8140A"/>
<rect x="1657" y="55" width="241" height="1" fill="#C8140A"/>
<rect x="1657" y="86" width="241" height="1" fill="#C8140A"/>
<rect x="1657" y="167" width="241" height="1" fill="#C8140A"/>
<rect x="1694" y="945" width="204" height="1" fill="#C8140A"/>
<path d="M1657.5 945V957.5Q1657.5 960.5 1660.5 960.5H1690.5Q1693.5 960.5 1693.5 957.5V948.5Q1693.5 945.5 1696.5 945.5" fill="none" stroke="#C8140A"/>
</g>
<text x="2" y="13.74" font-size="12" fill="#E8E8E8" font-family='"Liberation Sans","Noto Sans CJK SC",sans-serif' textLength="114" lengthAdjust="spacingAndGlyphs">恒生指数(HSI)&lt;日线&gt;</text>
<text x="1493" y="13.44" font-size="12" fill="#62A8FF" font-family='"Liberation Sans","Noto Sans CJK SC",sans-serif' textLength="48" lengthAdjust="spacingAndGlyphs">商品叠加</text>
<text x="1561.5" y="13.44" font-size="12" fill="#62A8FF" font-family='"Liberation Sans","Noto Sans CJK SC",sans-serif' textLength="23.5" lengthAdjust="spacingAndGlyphs">周期</text>
<g shape-rendering="crispEdges">
<rect x="1493" y="14" width="48" height="1" fill="#62A8FF"/>
<rect x="1561" y="14" width="24" height="1" fill="#62A8FF"/>
<rect x="1606.5" y="1.5" width="15" height="13" fill="none" stroke="#62A8FF"/>
<rect x="1623.5" y="1.5" width="15" height="13" fill="none" stroke="#62A8FF"/>
<rect x="1640.5" y="1.5" width="15" height="13" fill="none" stroke="#62A8FF"/>
<rect x="1642" y="8" width="10" height="1" fill="#62A8FF"/>
<rect x="1652" y="2" width="1" height="12" fill="#62A8FF"/>
<rect x="1654" y="4" width="1" height="1" fill="#62A8FF"/>
<rect x="1654" y="6" width="1" height="1" fill="#62A8FF"/>
<rect x="1654" y="8" width="1" height="1" fill="#62A8FF"/>
<rect x="1654" y="10" width="1" height="1" fill="#62A8FF"/>
<rect x="1654" y="12" width="1" height="1" fill="#62A8FF"/>
<rect x="1881.5" y="1.5" width="14" height="13" fill="none" stroke="#62A8FF"/>
<rect x="1884.5" y="4.5" width="8" height="7" fill="none" stroke="#62A8FF"/>
<rect x="1884" y="5" width="9" height="1" fill="#62A8FF"/>
</g>
<path d="M1608.5 8L1613.5 3.5V6.5H1619.5V9.5H1613.5V12.5Z" fill="none" stroke="#62A8FF" stroke-width="1"/>
<path d="M1636.5 8L1631.5 3.5V6.5H1625.5V9.5H1631.5V12.5Z" fill="none" stroke="#62A8FF" stroke-width="1"/>
<text x="63.5" y="32.82" font-size="12" fill="#E0E0E0" font-family='"Liberation Sans","Noto Sans CJK SC",sans-serif' textLength="7" lengthAdjust="spacingAndGlyphs">K</text>
<text x="78.6" y="32.94" font-size="12" fill="#E0E0E0" font-family='"Liberation Sans","Noto Sans CJK SC",sans-serif' textLength="47.5" lengthAdjust="spacingAndGlyphs">胡家刀法</text>
<text x="132.6" y="32.93" font-size="12.3" fill="#FF0000" font-family='"Liberation Sans","Noto Sans CJK SC",sans-serif' textLength="64.6" lengthAdjust="spacingAndGlyphs">A:19569.49</text>
<text x="205.2" y="32.93" font-size="12.3" fill="#FFFFFF" font-family='"Liberation Sans","Noto Sans CJK SC",sans-serif' textLength="86.6" lengthAdjust="spacingAndGlyphs">MA13:19426.67</text>
<text x="297.3" y="32.93" font-size="12.3" fill="#FFFF00" font-family='"Liberation Sans","Noto Sans CJK SC",sans-serif' textLength="87.1" lengthAdjust="spacingAndGlyphs">MA21:19201.24</text>
<text x="389.4" y="32.93" font-size="12.3" fill="#FF00FF" font-family='"Liberation Sans","Noto Sans CJK SC",sans-serif' textLength="87.1" lengthAdjust="spacingAndGlyphs">MA55:19204.78</text>
<text x="481" y="32.93" font-size="12.3" fill="#00FF00" font-family='"Liberation Sans","Noto Sans CJK SC",sans-serif' textLength="93.6" lengthAdjust="spacingAndGlyphs">MA144:20025.71</text>
<text x="579.6" y="32.93" font-size="12.3" fill="#8080FF" font-family='"Liberation Sans","Noto Sans CJK SC",sans-serif' textLength="94.6" lengthAdjust="spacingAndGlyphs">MA165:19943.58</text>
<text x="679.2" y="32.93" font-size="12.3" fill="#FF8000" font-family='"Liberation Sans","Noto Sans CJK SC",sans-serif' textLength="94.1" lengthAdjust="spacingAndGlyphs">MA233:19257.41</text>
<text x="777.8" y="32.93" font-size="12.3" fill="#3399E6" font-family='"Liberation Sans","Noto Sans CJK SC",sans-serif' textLength="94.6" lengthAdjust="spacingAndGlyphs">MA377:20105.13</text>
<text x="877.4" y="32.93" font-size="12.3" fill="#E63264" font-family='"Liberation Sans","Noto Sans CJK SC",sans-serif' textLength="94.6" lengthAdjust="spacingAndGlyphs">MA610:22627.66</text>
<text x="65.5" y="62.44" font-size="11.5" fill="#C4C4C4" font-family='"Liberation Sans","Noto Sans CJK SC",sans-serif' textLength="93.6" lengthAdjust="spacingAndGlyphs">261.80% 24525.07</text>
<text x="65.5" y="94.44" font-size="11.5" fill="#C4C4C4" font-family='"Liberation Sans","Noto Sans CJK SC",sans-serif' textLength="93.6" lengthAdjust="spacingAndGlyphs">238.20% 23629.10</text>
<text x="65.5" y="147.44" font-size="11.5" fill="#C4C4C4" font-family='"Liberation Sans","Noto Sans CJK SC",sans-serif' textLength="93.6" lengthAdjust="spacingAndGlyphs">200.00% 22178.85</text>
<text x="65.5" y="199.44" font-size="11.5" fill="#C4C4C4" font-family='"Liberation Sans","Noto Sans CJK SC",sans-serif' textLength="93.6" lengthAdjust="spacingAndGlyphs">161.80% 20728.59</text>
<text x="65.5" y="231.44" font-size="11.5" fill="#C4C4C4" font-family='"Liberation Sans","Noto Sans CJK SC",sans-serif' textLength="93.6" lengthAdjust="spacingAndGlyphs">138.20% 19832.62</text>
<text x="65.5" y="284.44" font-size="11.5" fill="#C4C4C4" font-family='"Liberation Sans","Noto Sans CJK SC",sans-serif' textLength="93.6" lengthAdjust="spacingAndGlyphs">100.00% 18382.37</text>
<text x="65.5" y="310.44" font-size="11.5" fill="#C4C4C4" font-family='"Liberation Sans","Noto Sans CJK SC",sans-serif' textLength="87.75" lengthAdjust="spacingAndGlyphs">80.90% 17657.24</text>
<text x="65.5" y="336.44" font-size="11.5" fill="#C4C4C4" font-family='"Liberation Sans","Noto Sans CJK SC",sans-serif' textLength="87.75" lengthAdjust="spacingAndGlyphs">61.80% 16932.11</text>
<text x="65.5" y="352.44" font-size="11.5" fill="#C4C4C4" font-family='"Liberation Sans","Noto Sans CJK SC",sans-serif' textLength="87.75" lengthAdjust="spacingAndGlyphs">50.00% 16484.12</text>
<text x="65.5" y="368.44" font-size="11.5" fill="#C4C4C4" font-family='"Liberation Sans","Noto Sans CJK SC",sans-serif' textLength="87.75" lengthAdjust="spacingAndGlyphs">38.20% 16036.14</text>
<text x="65.5" y="388.44" font-size="11.5" fill="#C4C4C4" font-family='"Liberation Sans","Noto Sans CJK SC",sans-serif' textLength="87.75" lengthAdjust="spacingAndGlyphs">23.60% 15481.85</text>
<text x="65.5" y="421.44" font-size="11.5" fill="#C4C4C4" font-family='"Liberation Sans","Noto Sans CJK SC",sans-serif' textLength="81.9" lengthAdjust="spacingAndGlyphs">0.00% 14585.88</text>
<text x="644" y="123.48" font-size="13" fill="#F0F0F0" font-family='"Liberation Sans","Noto Sans CJK SC",sans-serif' font-weight="bold" text-anchor="end" textLength="64" lengthAdjust="spacingAndGlyphs">22700.85→</text>
<text x="175.4" y="414.68" font-size="13" fill="#F0F0F0" font-family='"Liberation Sans","Noto Sans CJK SC",sans-serif' font-weight="bold" textLength="49.6" lengthAdjust="spacingAndGlyphs">14597.31</text>
<rect x="175" y="410" width="53" height="1" fill="#D8D8D8"/>
<text x="56.5" y="76.09" font-size="13.5" fill="#CDCDCD" font-family='"Liberation Serif","Noto Serif CJK SC",serif' font-weight="bold" text-anchor="end">24000</text>
<text x="56.5" y="148.09" font-size="13.5" fill="#CDCDCD" font-family='"Liberation Serif","Noto Serif CJK SC",serif' font-weight="bold" text-anchor="end">22000</text>
<text x="56.5" y="292.09" font-size="13.5" fill="#CDCDCD" font-family='"Liberation Serif","Noto Serif CJK SC",serif' font-weight="bold" text-anchor="end">18000</text>
<text x="56.5" y="364.09" font-size="13.5" fill="#CDCDCD" font-family='"Liberation Serif","Noto Serif CJK SC",serif' font-weight="bold" text-anchor="end">16000</text>
<text x="56" y="221.18" font-size="13" fill="#CDCDCD" font-family='"Liberation Serif","Noto Serif CJK SC",serif' font-weight="bold" text-anchor="end">2万</text>
<text x="56.5" y="470.09" font-size="13.5" fill="#CDCDCD" font-family='"Liberation Serif","Noto Serif CJK SC",serif' font-weight="bold" text-anchor="end">0.8</text>
<text x="56.5" y="513.09" font-size="13.5" fill="#CDCDCD" font-family='"Liberation Serif","Noto Serif CJK SC",serif' font-weight="bold" text-anchor="end">0.4</text>
<text x="56.5" y="596.09" font-size="13.5" fill="#CDCDCD" font-family='"Liberation Serif","Noto Serif CJK SC",serif' font-weight="bold" text-anchor="end">80</text>
<text x="56.5" y="642.09" font-size="13.5" fill="#CDCDCD" font-family='"Liberation Serif","Noto Serif CJK SC",serif' font-weight="bold" text-anchor="end">40</text>
<text x="56.5" y="757.09" font-size="13.5" fill="#CDCDCD" font-family='"Liberation Serif","Noto Serif CJK SC",serif' font-weight="bold" text-anchor="end">0</text>
<text x="56.5" y="891.09" font-size="13.5" fill="#CDCDCD" font-family='"Liberation Serif","Noto Serif CJK SC",serif' font-weight="bold" text-anchor="end">0</text>
<text x="64" y="439.58" font-size="6.6" fill="#D0D0D0" font-family='"DejaVu Sans",sans-serif' textLength="34.5" lengthAdjust="spacing">●●●●●</text>
<text x="98.4" y="441.44" font-size="12" fill="#E0E0E0" font-family='"Liberation Sans","Noto Sans CJK SC",sans-serif' textLength="23" lengthAdjust="spacingAndGlyphs">亿万</text>
<text x="127.9" y="441.44" font-size="12" fill="#FF0000" font-family='"Liberation Sans","Noto Sans CJK SC",sans-serif' textLength="90" lengthAdjust="spacingAndGlyphs">低位买进:0.0000</text>
<text x="222" y="441.44" font-size="12" fill="#00E5E5" font-family='"Liberation Sans","Noto Sans CJK SC",sans-serif' textLength="90.5" lengthAdjust="spacingAndGlyphs">高位抛出:0.0000</text>
<text x="63.2" y="567.94" font-size="12" fill="#E0E0E0" font-family='"Liberation Sans","Noto Sans CJK SC",sans-serif' textLength="66.5" lengthAdjust="spacingAndGlyphs">界文KDJ改进</text>
<text x="136.3" y="567.94" font-size="12" fill="#FF60FF" font-family='"Liberation Sans","Noto Sans CJK SC",sans-serif' textLength="68" lengthAdjust="spacingAndGlyphs">短K:65.3124</text>
<text x="209.4" y="567.94" font-size="12" fill="#40E0D8" font-family='"Liberation Sans","Noto Sans CJK SC",sans-serif' textLength="68.8" lengthAdjust="spacingAndGlyphs">短D:69.1103</text>
<text x="283.9" y="567.94" font-size="12" fill="#FF0000" font-family='"Liberation Sans","Noto Sans CJK SC",sans-serif' textLength="67.4" lengthAdjust="spacingAndGlyphs">中K:66.5511</text>
<text x="356.9" y="567.94" font-size="12" fill="#2EB82E" font-family='"Liberation Sans","Noto Sans CJK SC",sans-serif' textLength="68.3" lengthAdjust="spacingAndGlyphs">中D:54.5732</text>
<text x="430.2" y="567.94" font-size="12" fill="#FFFFFF" font-family='"Liberation Sans","Noto Sans CJK SC",sans-serif' textLength="72.8" lengthAdjust="spacingAndGlyphs">底线:10.0000</text>
<text x="508.6" y="567.94" font-size="12" fill="#FFFF00" font-family='"Liberation Sans","Noto Sans CJK SC",sans-serif' textLength="72.8" lengthAdjust="spacingAndGlyphs">顶线:90.0000</text>
<text x="64.3" y="696.76" font-size="11" fill="#C8C8C8" font-family='"DejaVu Sans",sans-serif' textLength="9.5" lengthAdjust="spacingAndGlyphs">▲</text>
<text x="75.8" y="696.04" font-size="9" fill="#E0E0E0" font-family='"DejaVu Sans",sans-serif' textLength="7.5" lengthAdjust="spacingAndGlyphs">★</text>
<text x="83.3" y="697.24" font-size="12" fill="#E0E0E0" font-family='"Liberation Sans","Noto Sans CJK SC",sans-serif' textLength="34.7" lengthAdjust="spacingAndGlyphs">大趋势</text>
<text x="123.7" y="697.24" font-size="12" fill="#FFFFFF" font-family='"Liberation Sans","Noto Sans CJK SC",sans-serif' textLength="104.6" lengthAdjust="spacingAndGlyphs">获利回吐:124.2060</text>
<text x="233.3" y="697.24" font-size="12" fill="#7FFFD4" font-family='"Liberation Sans","Noto Sans CJK SC",sans-serif' textLength="89.7" lengthAdjust="spacingAndGlyphs">空头回补:0.0000</text>
<text x="327.7" y="697.24" font-size="12" fill="#6200C6" font-family='"Liberation Sans","Noto Sans CJK SC",sans-serif' textLength="90.3" lengthAdjust="spacingAndGlyphs">坚绝做空:0.0000</text>
<text x="423" y="697.24" font-size="12" fill="#FF0000" font-family='"Liberation Sans","Noto Sans CJK SC",sans-serif' textLength="104.6" lengthAdjust="spacingAndGlyphs">买入持货:139.8394</text>
<text x="63.3" y="825.24" font-size="9" fill="#E0E0E0" font-family='"DejaVu Sans",sans-serif' textLength="7.2" lengthAdjust="spacingAndGlyphs">★</text>
<text x="70.5" y="826.44" font-size="12" fill="#E0E0E0" font-family='"Liberation Sans","Noto Sans CJK SC",sans-serif' textLength="47.5" lengthAdjust="spacingAndGlyphs">奥运冠军</text>
<text x="124" y="826.44" font-size="12" fill="#FFFFFF" font-family='"Liberation Sans","Noto Sans CJK SC",sans-serif' textLength="72.6" lengthAdjust="spacingAndGlyphs">奥运:12.7181</text>
<text x="201.6" y="826.44" font-size="12" fill="#FFFF00" font-family='"Liberation Sans","Noto Sans CJK SC",sans-serif' textLength="74.2" lengthAdjust="spacingAndGlyphs">冠军:17.7122</text>
<text x="33.8" y="957.74" font-size="12" fill="#E8E8E8" font-family='"Liberation Sans","Noto Sans CJK SC",sans-serif' textLength="22.3" lengthAdjust="spacingAndGlyphs">日线</text>
<text x="63" y="957.26" font-size="11" fill="#D8D8D8" font-family='"Liberation Sans","Noto Sans CJK SC",sans-serif' textLength="35.4" lengthAdjust="spacingAndGlyphs">202209</text>
<text x="241.7" y="957.26" font-size="11" fill="#D8D8D8" font-family='"Liberation Sans","Noto Sans CJK SC",sans-serif' textLength="9.5" lengthAdjust="spacingAndGlyphs">11</text>
<text x="395" y="957.26" font-size="11" fill="#D8D8D8" font-family='"Liberation Sans","Noto Sans CJK SC",sans-serif' textLength="10.6" lengthAdjust="spacingAndGlyphs">12</text>
<text x="522.6" y="957.26" font-size="11" fill="#D8D8D8" font-family='"Liberation Sans","Noto Sans CJK SC",sans-serif' textLength="35.4" lengthAdjust="spacingAndGlyphs">202301</text>
<text x="660.7" y="957.26" font-size="11" fill="#D8D8D8" font-family='"Liberation Sans","Noto Sans CJK SC",sans-serif' textLength="11.1" lengthAdjust="spacingAndGlyphs">02</text>
<text x="800.6" y="957.26" font-size="11" fill="#D8D8D8" font-family='"Liberation Sans","Noto Sans CJK SC",sans-serif' textLength="11.8" lengthAdjust="spacingAndGlyphs">03</text>
<text x="961.4" y="957.26" font-size="11" fill="#D8D8D8" font-family='"Liberation Sans","Noto Sans CJK SC",sans-serif' textLength="11.8" lengthAdjust="spacingAndGlyphs">04</text>
<text x="1080.4" y="957.26" font-size="11" fill="#D8D8D8" font-family='"Liberation Sans","Noto Sans CJK SC",sans-serif' textLength="11.8" lengthAdjust="spacingAndGlyphs">05</text>
<text x="1228" y="957.26" font-size="11" fill="#D8D8D8" font-family='"Liberation Sans","Noto Sans CJK SC",sans-serif' textLength="11.4" lengthAdjust="spacingAndGlyphs">06</text>
<text x="1374.6" y="957.26" font-size="11" fill="#D8D8D8" font-family='"Liberation Sans","Noto Sans CJK SC",sans-serif' textLength="11.8" lengthAdjust="spacingAndGlyphs">07</text>
<text x="1514.6" y="957.26" font-size="11" fill="#D8D8D8" font-family='"Liberation Sans","Noto Sans CJK SC",sans-serif' textLength="11.8" lengthAdjust="spacingAndGlyphs">08</text>
<text x="1772.5" y="19.15" font-size="19" fill="#FFFF00" font-family='"Liberation Serif","Noto Serif CJK SC",serif' font-weight="bold" text-anchor="middle" textLength="126.5" lengthAdjust="spacingAndGlyphs">恒生指数(HSI)</text>
<text x="1662.8" y="45.48" font-size="14" fill="#ECECEC" font-family='"Liberation Sans","Noto Sans CJK SC",sans-serif' textLength="27.3" lengthAdjust="spacingAndGlyphs">卖出</text>
<text x="1662.8" y="76.68" font-size="14" fill="#ECECEC" font-family='"Liberation Sans","Noto Sans CJK SC",sans-serif' textLength="27.3" lengthAdjust="spacingAndGlyphs">买入</text>
<text x="1751" y="47.03" font-size="19" fill="#F4F4F4" font-family='"Liberation Sans","Noto Sans CJK SC",sans-serif' font-weight="bold" textLength="20" lengthAdjust="spacingAndGlyphs">---</text>
<text x="1786" y="47.03" font-size="19" fill="#F4F4F4" font-family='"Liberation Sans","Noto Sans CJK SC",sans-serif' font-weight="bold" textLength="20" lengthAdjust="spacingAndGlyphs">---</text>
<text x="1751" y="78.53" font-size="19" fill="#F4F4F4" font-family='"Liberation Sans","Noto Sans CJK SC",sans-serif' font-weight="bold" textLength="20" lengthAdjust="spacingAndGlyphs">---</text>
<text x="1786" y="78.53" font-size="19" fill="#F4F4F4" font-family='"Liberation Sans","Noto Sans CJK SC",sans-serif' font-weight="bold" textLength="20" lengthAdjust="spacingAndGlyphs">---</text>
<text x="1662.8" y="101.98" font-size="14" fill="#ECECEC" font-family='"Liberation Sans","Noto Sans CJK SC",sans-serif' textLength="27.3" lengthAdjust="spacingAndGlyphs">最新</text>
<text x="1770.7" y="101.84" font-size="14" fill="#FF4040" font-family='"Liberation Sans","Noto Sans CJK SC",sans-serif' font-weight="bold" text-anchor="end">19539.46</text>
<text x="1784.9" y="101.98" font-size="14" fill="#ECECEC" font-family='"Liberation Sans","Noto Sans CJK SC",sans-serif' textLength="27.3" lengthAdjust="spacingAndGlyphs">均价</text>
<text x="1892.3" y="101.84" font-size="14" fill="#20E020" font-family='"Liberation Sans","Noto Sans CJK SC",sans-serif' font-weight="bold" text-anchor="end">19420.87</text>
<text x="1662.8" y="122.28" font-size="14" fill="#ECECEC" font-family='"Liberation Sans","Noto Sans CJK SC",sans-serif' textLength="27.3" lengthAdjust="spacingAndGlyphs">涨跌</text>
<text x="1770.7" y="122.14" font-size="14" fill="#FF4040" font-family='"Liberation Sans","Noto Sans CJK SC",sans-serif' font-weight="bold" text-anchor="end">118.59</text>
<text x="1784.9" y="122.28" font-size="14" fill="#ECECEC" font-family='"Liberation Sans","Noto Sans CJK SC",sans-serif' textLength="27.3" lengthAdjust="spacingAndGlyphs">昨收</text>
<text x="1892.3" y="122.14" font-size="14" fill="#FFFFFF" font-family='"Liberation Sans","Noto Sans CJK SC",sans-serif' font-weight="bold" text-anchor="end">19420.87</text>
<text x="1662.8" y="142.08" font-size="14" fill="#ECECEC" font-family='"Liberation Sans","Noto Sans CJK SC",sans-serif' textLength="27.3" lengthAdjust="spacingAndGlyphs">幅度</text>
<text x="1770.7" y="141.94" font-size="14" fill="#FF4040" font-family='"Liberation Sans","Noto Sans CJK SC",sans-serif' font-weight="bold" text-anchor="end">0.61%</text>
<text x="1784.9" y="142.08" font-size="14" fill="#ECECEC" font-family='"Liberation Sans","Noto Sans CJK SC",sans-serif' textLength="27.3" lengthAdjust="spacingAndGlyphs">开盘</text>
<text x="1892.3" y="141.94" font-size="14" fill="#FF4040" font-family='"Liberation Sans","Noto Sans CJK SC",sans-serif' font-weight="bold" text-anchor="end">19702.72</text>
<text x="1662.8" y="162.08" font-size="14" fill="#ECECEC" font-family='"Liberation Sans","Noto Sans CJK SC",sans-serif' textLength="27.3" lengthAdjust="spacingAndGlyphs">最高</text>
<text x="1770.7" y="161.94" font-size="14" fill="#FF4040" font-family='"Liberation Sans","Noto Sans CJK SC",sans-serif' font-weight="bold" text-anchor="end">19857.39</text>
<text x="1784.9" y="162.08" font-size="14" fill="#ECECEC" font-family='"Liberation Sans","Noto Sans CJK SC",sans-serif' textLength="27.3" lengthAdjust="spacingAndGlyphs">最低</text>
<text x="1892.3" y="161.94" font-size="14" fill="#FF4040" font-family='"Liberation Sans","Noto Sans CJK SC",sans-serif' font-weight="bold" text-anchor="end">19461.61</text>
<text x="1662.8" y="184.38" font-size="14" fill="#808080" font-family='"Liberation Sans","Noto Sans CJK SC",sans-serif' textLength="27.3" lengthAdjust="spacingAndGlyphs">北京</text>
<text x="1772.4" y="184.38" font-size="14" fill="#808080" font-family='"Liberation Sans","Noto Sans CJK SC",sans-serif' textLength="26.5" lengthAdjust="spacingAndGlyphs">价格</text>
<text x="1698.4" y="206.34" font-size="14" fill="#FFFFFF" font-family='"Liberation Sans","Noto Sans CJK SC",sans-serif' font-weight="bold" text-anchor="end" textLength="34.7" lengthAdjust="spacingAndGlyphs">15:59</text>
<text x="1799.5" y="206.34" font-size="14" fill="#FF4040" font-family='"Liberation Sans","Noto Sans CJK SC",sans-serif' font-weight="bold" text-anchor="end">19546.93</text>
<text x="1696.5" y="227.44" font-size="11.5" fill="#D0D0D0" font-family='"Liberation Sans","Noto Sans CJK SC",sans-serif' text-anchor="end">:33</text>
<text x="1799.5" y="228.34" font-size="14" fill="#FF4040" font-family='"Liberation Sans","Noto Sans CJK SC",sans-serif' font-weight="bold" text-anchor="end">19546.93</text>
<text x="1696.5" y="249.44" font-size="11.5" fill="#D0D0D0" font-family='"Liberation Sans","Noto Sans CJK SC",sans-serif' text-anchor="end">:34</text>
<text x="1799.5" y="250.34" font-size="14" fill="#FF4040" font-family='"Liberation Sans","Noto Sans CJK SC",sans-serif' font-weight="bold" text-anchor="end">19548.10</text>
<text x="1696.5" y="271.44" font-size="11.5" fill="#D0D0D0" font-family='"Liberation Sans","Noto Sans CJK SC",sans-serif' text-anchor="end">:35</text>
<text x="1799.5" y="272.34" font-size="14" fill="#FF4040" font-family='"Liberation Sans","Noto Sans CJK SC",sans-serif' font-weight="bold" text-anchor="end">19548.10</text>
<text x="1696.5" y="293.44" font-size="11.5" fill="#D0D0D0" font-family='"Liberation Sans","Noto Sans CJK SC",sans-serif' text-anchor="end">:36</text>
<text x="1799.5" y="294.34" font-size="14" fill="#FF4040" font-family='"Liberation Sans","Noto Sans CJK SC",sans-serif' font-weight="bold" text-anchor="end">19548.63</text>
<text x="1696.5" y="315.44" font-size="11.5" fill="#D0D0D0" font-family='"Liberation Sans","Noto Sans CJK SC",sans-serif' text-anchor="end">:37</text>
<text x="1799.5" y="316.34" font-size="14" fill="#FF4040" font-family='"Liberation Sans","Noto Sans CJK SC",sans-serif' font-weight="bold" text-anchor="end">19548.63</text>
<text x="1696.5" y="337.44" font-size="11.5" fill="#D0D0D0" font-family='"Liberation Sans","Noto Sans CJK SC",sans-serif' text-anchor="end">:38</text>
<text x="1799.5" y="338.34" font-size="14" fill="#FF4040" font-family='"Liberation Sans","Noto Sans CJK SC",sans-serif' font-weight="bold" text-anchor="end">19548.67</text>
<text x="1696.5" y="359.44" font-size="11.5" fill="#D0D0D0" font-family='"Liberation Sans","Noto Sans CJK SC",sans-serif' text-anchor="end">:39</text>
<text x="1799.5" y="360.34" font-size="14" fill="#FF4040" font-family='"Liberation Sans","Noto Sans CJK SC",sans-serif' font-weight="bold" text-anchor="end">19548.67</text>
<text x="1696.5" y="381.44" font-size="11.5" fill="#D0D0D0" font-family='"Liberation Sans","Noto Sans CJK SC",sans-serif' text-anchor="end">:40</text>
<text x="1799.5" y="382.34" font-size="14" fill="#FF4040" font-family='"Liberation Sans","Noto Sans CJK SC",sans-serif' font-weight="bold" text-anchor="end">19547.33</text>
<text x="1696.5" y="403.44" font-size="11.5" fill="#D0D0D0" font-family='"Liberation Sans","Noto Sans CJK SC",sans-serif' text-anchor="end">:41</text>
<text x="1799.5" y="404.34" font-size="14" fill="#FF4040" font-family='"Liberation Sans","Noto Sans CJK SC",sans-serif' font-weight="bold" text-anchor="end">19547.33</text>
<text x="1696.5" y="425.44" font-size="11.5" fill="#D0D0D0" font-family='"Liberation Sans","Noto Sans CJK SC",sans-serif' text-anchor="end">:43</text>
<text x="1799.5" y="426.34" font-size="14" fill="#FF4040" font-family='"Liberation Sans","Noto Sans CJK SC",sans-serif' font-weight="bold" text-anchor="end">19551.44</text>
<text x="1696.5" y="447.44" font-size="11.5" fill="#D0D0D0" font-family='"Liberation Sans","Noto Sans CJK SC",sans-serif' text-anchor="end">:43</text>
<text x="1799.5" y="448.34" font-size="14" fill="#FF4040" font-family='"Liberation Sans","Noto Sans CJK SC",sans-serif' font-weight="bold" text-anchor="end">19551.44</text>
<text x="1696.5" y="469.44" font-size="11.5" fill="#D0D0D0" font-family='"Liberation Sans","Noto Sans CJK SC",sans-serif' text-anchor="end">:44</text>
<text x="1799.5" y="470.34" font-size="14" fill="#FF4040" font-family='"Liberation Sans","Noto Sans CJK SC",sans-serif' font-weight="bold" text-anchor="end">19549.83</text>
<text x="1696.5" y="491.44" font-size="11.5" fill="#D0D0D0" font-family='"Liberation Sans","Noto Sans CJK SC",sans-serif' text-anchor="end">:45</text>
<text x="1799.5" y="492.34" font-size="14" fill="#FF4040" font-family='"Liberation Sans","Noto Sans CJK SC",sans-serif' font-weight="bold" text-anchor="end">19549.83</text>
<text x="1696.5" y="513.44" font-size="11.5" fill="#D0D0D0" font-family='"Liberation Sans","Noto Sans CJK SC",sans-serif' text-anchor="end">:46</text>
<text x="1799.5" y="514.34" font-size="14" fill="#FF4040" font-family='"Liberation Sans","Noto Sans CJK SC",sans-serif' font-weight="bold" text-anchor="end">19552.06</text>
<text x="1696.5" y="535.44" font-size="11.5" fill="#D0D0D0" font-family='"Liberation Sans","Noto Sans CJK SC",sans-serif' text-anchor="end">:47</text>
<text x="1799.5" y="536.34" font-size="14" fill="#FF4040" font-family='"Liberation Sans","Noto Sans CJK SC",sans-serif' font-weight="bold" text-anchor="end">19552.06</text>
<text x="1696.5" y="557.44" font-size="11.5" fill="#D0D0D0" font-family='"Liberation Sans","Noto Sans CJK SC",sans-serif' text-anchor="end">:48</text>
<text x="1799.5" y="558.34" font-size="14" fill="#FF4040" font-family='"Liberation Sans","Noto Sans CJK SC",sans-serif' font-weight="bold" text-anchor="end">19552.01</text>
<text x="1696.5" y="579.44" font-size="11.5" fill="#D0D0D0" font-family='"Liberation Sans","Noto Sans CJK SC",sans-serif' text-anchor="end">:50</text>
<text x="1799.5" y="580.34" font-size="14" fill="#FF4040" font-family='"Liberation Sans","Noto Sans CJK SC",sans-serif' font-weight="bold" text-anchor="end">19553.58</text>
<text x="1696.5" y="601.44" font-size="11.5" fill="#D0D0D0" font-family='"Liberation Sans","Noto Sans CJK SC",sans-serif' text-anchor="end">:52</text>
<text x="1799.5" y="602.34" font-size="14" fill="#FF4040" font-family='"Liberation Sans","Noto Sans CJK SC",sans-serif' font-weight="bold" text-anchor="end">19549.42</text>
<text x="1696.5" y="623.44" font-size="11.5" fill="#D0D0D0" font-family='"Liberation Sans","Noto Sans CJK SC",sans-serif' text-anchor="end">:54</text>
<text x="1799.5" y="624.34" font-size="14" fill="#FF4040" font-family='"Liberation Sans","Noto Sans CJK SC",sans-serif' font-weight="bold" text-anchor="end">19554.86</text>
<text x="1696.5" y="645.44" font-size="11.5" fill="#D0D0D0" font-family='"Liberation Sans","Noto Sans CJK SC",sans-serif' text-anchor="end">:55</text>
<text x="1799.5" y="646.34" font-size="14" fill="#FF4040" font-family='"Liberation Sans","Noto Sans CJK SC",sans-serif' font-weight="bold" text-anchor="end">19554.86</text>
<text x="1696.5" y="667.44" font-size="11.5" fill="#D0D0D0" font-family='"Liberation Sans","Noto Sans CJK SC",sans-serif' text-anchor="end">:57</text>
<text x="1799.5" y="668.34" font-size="14" fill="#FF4040" font-family='"Liberation Sans","Noto Sans CJK SC",sans-serif' font-weight="bold" text-anchor="end">19550.94</text>
<text x="1696.5" y="689.44" font-size="11.5" fill="#D0D0D0" font-family='"Liberation Sans","Noto Sans CJK SC",sans-serif' text-anchor="end">:57</text>
<text x="1799.5" y="690.34" font-size="14" fill="#FF4040" font-family='"Liberation Sans","Noto Sans CJK SC",sans-serif' font-weight="bold" text-anchor="end">19550.94</text>
<text x="1696.5" y="711.44" font-size="11.5" fill="#D0D0D0" font-family='"Liberation Sans","Noto Sans CJK SC",sans-serif' text-anchor="end">:58</text>
<text x="1799.5" y="712.34" font-size="14" fill="#FF4040" font-family='"Liberation Sans","Noto Sans CJK SC",sans-serif' font-weight="bold" text-anchor="end">19549.83</text>
<text x="1696.5" y="733.44" font-size="11.5" fill="#D0D0D0" font-family='"Liberation Sans","Noto Sans CJK SC",sans-serif' text-anchor="end">:59</text>
<text x="1799.5" y="734.34" font-size="14" fill="#FF4040" font-family='"Liberation Sans","Noto Sans CJK SC",sans-serif' font-weight="bold" text-anchor="end">19549.83</text>
<text x="1698.4" y="756.34" font-size="14" fill="#FFFFFF" font-family='"Liberation Sans","Noto Sans CJK SC",sans-serif' font-weight="bold" text-anchor="end" textLength="34.7" lengthAdjust="spacingAndGlyphs">16:00</text>
<text x="1799.5" y="756.34" font-size="14" fill="#FF4040" font-family='"Liberation Sans","Noto Sans CJK SC",sans-serif' font-weight="bold" text-anchor="end">19540.53</text>
<text x="1696.5" y="777.44" font-size="11.5" fill="#D0D0D0" font-family='"Liberation Sans","Noto Sans CJK SC",sans-serif' text-anchor="end">:01</text>
<text x="1799.5" y="778.34" font-size="14" fill="#FF4040" font-family='"Liberation Sans","Noto Sans CJK SC",sans-serif' font-weight="bold" text-anchor="end">19540.53</text>
<text x="1698.4" y="800.34" font-size="14" fill="#FFFFFF" font-family='"Liberation Sans","Noto Sans CJK SC",sans-serif' font-weight="bold" text-anchor="end" textLength="34.7" lengthAdjust="spacingAndGlyphs">16:01</text>
<text x="1799.5" y="800.34" font-size="14" fill="#FF4040" font-family='"Liberation Sans","Noto Sans CJK SC",sans-serif' font-weight="bold" text-anchor="end">19540.53</text>
<text x="1698.4" y="822.34" font-size="14" fill="#FFFFFF" font-family='"Liberation Sans","Noto Sans CJK SC",sans-serif' font-weight="bold" text-anchor="end" textLength="34.7" lengthAdjust="spacingAndGlyphs">16:05</text>
<text x="1799.5" y="822.34" font-size="14" fill="#FF4040" font-family='"Liberation Sans","Noto Sans CJK SC",sans-serif' font-weight="bold" text-anchor="end">19540.53</text>
<text x="1696.5" y="843.44" font-size="11.5" fill="#D0D0D0" font-family='"Liberation Sans","Noto Sans CJK SC",sans-serif' text-anchor="end">:43</text>
<text x="1799.5" y="844.34" font-size="14" fill="#FF4040" font-family='"Liberation Sans","Noto Sans CJK SC",sans-serif' font-weight="bold" text-anchor="end">19540.53</text>
<text x="1698.4" y="866.34" font-size="14" fill="#FFFFFF" font-family='"Liberation Sans","Noto Sans CJK SC",sans-serif' font-weight="bold" text-anchor="end" textLength="34.7" lengthAdjust="spacingAndGlyphs">16:06</text>
<text x="1799.5" y="866.34" font-size="14" fill="#FF4040" font-family='"Liberation Sans","Noto Sans CJK SC",sans-serif' font-weight="bold" text-anchor="end">19540.53</text>
<text x="1698.4" y="888.34" font-size="14" fill="#FFFFFF" font-family='"Liberation Sans","Noto Sans CJK SC",sans-serif' font-weight="bold" text-anchor="end" textLength="34.7" lengthAdjust="spacingAndGlyphs">16:08</text>
<text x="1799.5" y="888.34" font-size="14" fill="#FF4040" font-family='"Liberation Sans","Noto Sans CJK SC",sans-serif' font-weight="bold" text-anchor="end">19540.53</text>
<text x="1696.5" y="909.44" font-size="11.5" fill="#D0D0D0" font-family='"Liberation Sans","Noto Sans CJK SC",sans-serif' text-anchor="end">:32</text>
<text x="1799.5" y="910.34" font-size="14" fill="#FF4040" font-family='"Liberation Sans","Noto Sans CJK SC",sans-serif' font-weight="bold" text-anchor="end">19539.46</text>
<text x="1698.4" y="932.34" font-size="14" fill="#FFFFFF" font-family='"Liberation Sans","Noto Sans CJK SC",sans-serif' font-weight="bold" text-anchor="end" textLength="34.7" lengthAdjust="spacingAndGlyphs">16:09</text>
<text x="1799.5" y="932.34" font-size="14" fill="#FF4040" font-family='"Liberation Sans","Noto Sans CJK SC",sans-serif' font-weight="bold" text-anchor="end">19539.46</text>
<text x="1668" y="958.31" font-size="13" fill="#E8E8E8" font-family='"Liberation Sans","Noto Sans CJK SC",sans-serif'>笔</text>
</svg>
</body></html>
